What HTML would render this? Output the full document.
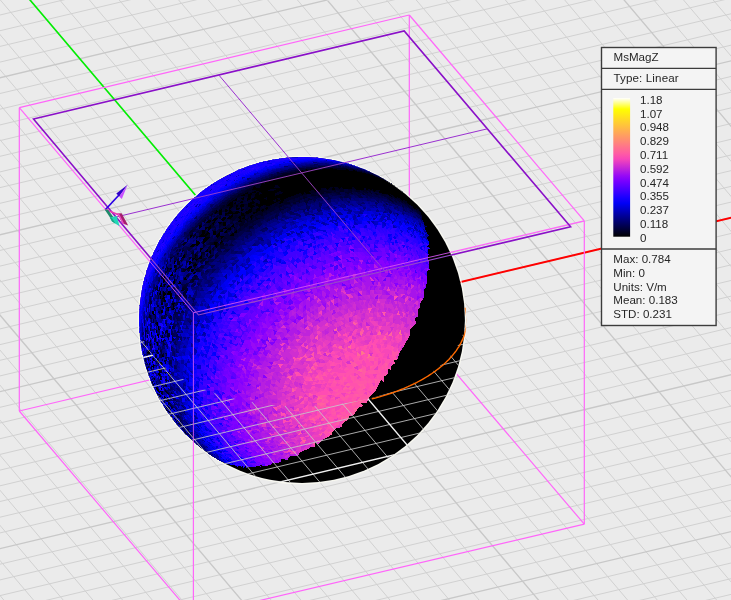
<!DOCTYPE html><html><head><meta charset="utf-8"><title>MsMagZ</title><style>html,body{margin:0;padding:0;background:#ebebeb}svg{display:block}text{font-family:"Liberation Sans",Arial,sans-serif;font-size:11.6px;fill:#262626}</style></head><body>
<svg width="731" height="600" viewBox="0 0 731 600">
<rect width="731" height="600" fill="#ebebeb"/>
<path d="M686.3 605.0L736.0 593.2M620.4 605.0L736.0 577.5M554.4 605.0L736.0 561.8M488.4 605.0L736.0 546.1M356.5 605.0L736.0 514.7M8.0 605.0L-5.0 589.6M290.5 605.0L736.0 499.0M37.7 605.0L-5.0 554.6M224.5 605.0L736.0 483.3M67.4 605.0L-5.0 519.5M158.6 605.0L736.0 467.6M97.1 605.0L-5.0 484.4M92.6 605.0L736.0 452.0M126.8 605.0L-5.0 449.4M26.6 605.0L736.0 436.3M156.5 605.0L-5.0 414.3M-5.0 596.8L736.0 420.6M186.2 605.0L-5.0 379.3M-5.0 581.1L736.0 404.9M215.9 605.0L-5.0 344.2M-5.0 565.4L736.0 389.2M275.3 605.0L-5.0 274.1M-5.0 534.1L736.0 357.8M305.1 605.0L-5.0 239.0M-5.0 518.4L736.0 342.1M334.8 605.0L-5.0 204.0M-5.0 502.7L736.0 326.4M364.5 605.0L-5.0 168.9M-5.0 487.0L736.0 310.7M394.2 605.0L-5.0 133.9M-5.0 471.3L736.0 295.0M423.9 605.0L-5.0 98.8M-5.0 455.6L736.0 279.3M453.6 605.0L-5.0 63.8M-5.0 439.9L736.0 263.7M483.3 605.0L-5.0 28.7M-5.0 424.2L736.0 248.0M513.0 605.0L-3.9 -5.0M-5.0 408.5L736.0 232.3M572.4 605.0L55.5 -5.0M-5.0 377.1L736.0 200.9M602.1 605.0L85.2 -5.0M-5.0 361.5L736.0 185.2M631.8 605.0L115.0 -5.0M-5.0 345.8L736.0 169.5M661.5 605.0L144.7 -5.0M-5.0 330.1L736.0 153.8M691.2 605.0L174.4 -5.0M-5.0 314.4L736.0 138.1M720.9 605.0L204.1 -5.0M-5.0 298.7L736.0 122.4M736.0 587.8L233.8 -5.0M-5.0 283.0L736.0 106.7M736.0 552.7L263.5 -5.0M-5.0 267.3L736.0 91.0M736.0 517.7L293.2 -5.0M-5.0 251.6L736.0 75.3M736.0 447.6L352.6 -5.0M-5.0 220.2L736.0 44.0M736.0 412.5L382.3 -5.0M-5.0 204.5L736.0 28.3M736.0 377.5L412.0 -5.0M-5.0 188.8L736.0 12.6M736.0 342.4L441.7 -5.0M-5.0 173.1L736.0 -3.1M736.0 307.3L471.4 -5.0M-5.0 157.5L678.0 -5.0M736.0 272.3L501.1 -5.0M-5.0 141.8L612.0 -5.0M736.0 237.2L530.8 -5.0M-5.0 126.1L546.0 -5.0M736.0 202.2L560.5 -5.0M-5.0 110.4L480.1 -5.0M736.0 167.1L590.2 -5.0M-5.0 94.7L414.1 -5.0M736.0 97.0L649.6 -5.0M-5.0 63.3L282.2 -5.0M736.0 61.9L679.3 -5.0M-5.0 47.6L216.2 -5.0M736.0 26.9L709.0 -5.0M-5.0 31.9L150.2 -5.0M-5.0 16.2L84.2 -5.0M-5.0 0.5L18.3 -5.0" stroke="#d1d1d1" stroke-width="1" fill="none"/>
<path d="M422.4 605.0L736.0 530.4M245.6 605.0L-5.0 309.2M-5.0 549.8L736.0 373.5M542.7 605.0L25.8 -5.0M-5.0 392.8L736.0 216.6M736.0 482.6L322.9 -5.0M-5.0 235.9L736.0 59.7M736.0 132.1L619.9 -5.0M-5.0 79.0L348.1 -5.0" stroke="#c8c8c8" stroke-width="1.35" fill="none"/>
<line x1="301.2" y1="320.0" x2="25.8" y2="-5.0" stroke="#00f000" stroke-width="1.6"/>
<line x1="301.2" y1="320.0" x2="736.0" y2="216.6" stroke="#ff0000" stroke-width="2"/>
<line x1="409.3" y1="15.0" x2="409.3" y2="318.3" stroke="#ff66fa" stroke-width="1.2" />
<line x1="19.3" y1="411.0" x2="409.3" y2="318.3" stroke="#ff66fa" stroke-width="1.2" />
<line x1="409.3" y1="318.3" x2="584.3" y2="524.2" stroke="#ff66fa" stroke-width="1.2" />
<circle cx="302.0" cy="320.0" r="163.7" fill="none" stroke="#f9f9f1" stroke-width="1.2"/>
<circle cx="302.0" cy="320.0" r="162.9" fill="#000"/>
<clipPath id="sc2"><circle cx="302.0" cy="320.0" r="164.2"/></clipPath>
<clipPath id="sc"><circle cx="302.0" cy="320.0" r="163.2"/></clipPath>
<g clip-path="url(#sc)"><g transform="scale(0.5)" shape-rendering="crispEdges">
<path fill="#00001f" d="M843 430l-6-5-2-4zM813 410l-2-4-6-3zM806 407l-1-4-7-4zM758 390l-7-1-2-5zM743 387l-1-5-8-1zM736 386l-2-5-7-1zM728 385l-1-5-8-1zM720 385l-1-6-8 0zM720 385l-8-1-1-5zM704 384l-1-6-8 0zM689 384l-2-6-8 1zM689 384l-9 0-1-5zM672 385l-1-6-8 1zM664 386l-8 1-1-6zM656 387l-1-6-8 1zM648 388l-1-6-8 2zM648 388l-8 2-1-6zM632 391l-9 2-1-6zM615 395l-8 3-1-7zM582 406l-8 3-1-6zM574 409l-1-6-8 3zM566 412l-8 4-1-7zM527 432l-1-7-8 5zM519 437l-7 4-2-7zM448 491l-2-8-6 6zM423 517l-2-8-6 6zM390 559l-4 7-3-8zM335 774l-5-9 1 8zM338 788l-6-8 2 7zM361 847l-7-7 4 6zM373 865l-8-7 5 5zM365 588l-4 7-4-5zM337 658l-2 8-4-5zM332 780l2 7-5-5zM337 801l-5-5 3 7zM351 834l3 6-5-5zM841 425l-6-4 2-2zM835 421l2-2-6-4zM830 417l-6-4 1-2zM818 409l-7-3 2-3zM811 406l2-3-6-3zM811 406l-6-3 2-3zM805 403l-7-4 2-2zM798 399l2-2-6-3zM798 399l-6-2 2-3zM792 397l-7-3 2-3zM785 394l2-3-7-3zM778 391l-7-2 3-3zM757 385l2-4-7-1zM757 385l-8-1 3-4zM749 384l-7-2 3-4zM742 382l-8-1 3-4zM711 379l-8-1 3-5zM687 378l-8 1 4-6zM679 379l-8 0 4-6zM671 379l4-6-8 1zM663 380l4-6-8 1zM663 380l-8 1 4-6zM647 382l3-6-8 1zM647 382l-8 2 3-7zM639 384l-8 1 3-6zM631 385l-9 2 4-7zM622 387l4-7-8 2zM614 389l-8 2 3-7zM606 391l-8 3 3-8zM598 394l3-8-8 3zM598 394l-8 3 3-8zM590 397l3-8-8 3zM590 397l-9 2 4-7zM581 399l4-7-8 3zM581 399l-8 4 4-8zM573 403l4-8-8 3zM573 403l-8 3 4-8zM557 409l4-8-8 3zM557 409l-8 4 4-9zM541 417l4-9-8 4zM541 417l-7 4 3-9zM534 421l-8 4 3-9zM526 425l-8 5 3-10zM518 430l3-10-8 5zM518 430l-8 4 3-9zM510 434l-7 5 3-10zM495 444l3-10-7 5zM488 449l3-10-7 5zM488 449l-7 5 3-10zM481 454l3-10-8 6zM440 489l-7 7 2-11zM427 502l2-11-6 6zM415 515l2-11-6 7zM409 522l-4-5-6 7zM398 536l-5 7-4-5zM370 580l-5-5-4 8zM561 401l-1-6-8 3zM553 404l-1-6-8 4zM537 412l-8 4-1-6zM529 416l-8 4-1-6zM513 425l-1-7-7 5zM491 439l-7 5-2-6zM429 491l-2-7-6 6zM394 531l-5 7-3-7zM328 676l-4-7-2 8zM512 418l-7 5-2-7zM497 428l-7 4-2-6zM490 432l-8 6-1-7zM409 503l-6 7-2-7zM347 598l-3-7-3 7zM319 700l-4-8 0 8zM319 708l-4-8-1 8zM318 724l0 7-4-8zM325 783l2 7-5-8zM343 829l-6-8 4 7zM381 879l5 5-7-7zM369 867l5 5-7-7zM374 872l5 5-7-7zM567 386l-9 3 1-7zM558 389l1-7-8 4zM558 389l-8 3 1-6zM534 400l1-7-8 4zM511 412l0-7-7 4zM496 421l0-7-7 5zM474 436l0-7-8 5zM474 436l-8 6 0-8zM466 442l0-8-7 5zM445 458l-6 6-1-7zM374 538l-5 7-1-8zM369 545l-1-8-5 7zM445 451l1-8-7 6zM419 475l0-8-7 6zM389 508l-1-8-5 7zM383 515l-5 7-1-8zM310 730l1 7-4-8zM346 838l4 6-7-8zM560 376l-3-4-8 3zM552 379l-8 4-3-5zM544 383l-3-5-8 4zM497 407l-8 5-3-5zM474 421l-7 6-3-5zM460 432l-4-5-7 6zM345 565l-4 8-4-4zM315 643l-2 8-4-4zM306 706l0 8-3-5zM332 818l-3-4 3 6zM557 372l-8 3 2-6zM525 386l-8 4 1-7zM509 394l2-7-8 4zM478 412l2-7-8 4zM442 439l1-8-7 5zM428 450l-6 6 1-8zM415 463l-6 6 1-9zM359 531l0-9-5 7zM341 561l-1-9-4 7zM303 686l-3-10 0 8zM317 788l3 7-6-9zM344 837l4 6-6-8zM338 829l-5-7 4 6zM518 383l-7 4 1-6zM511 387l-8 4 1-6zM495 395l1-6-7 4zM480 405l1-7-8 5zM472 409l-7 6 1-7zM359 522l-5 7-1-8zM520 377l1-6-8 4zM512 381l-8 4 1-6zM504 385l-8 4 1-6zM496 389l-7 4 0-6zM459 413l-8 5 1-6zM391 472l0-7-6 7zM391 472l-6 7 0-7zM368 500l-5 7 0-8zM317 590l-1-8-3 7zM326 811l-5-8 3 6zM466 401l3-7-8 5zM466 401l-7 5 2-7zM459 406l2-7-7 5zM459 406l-7 6 2-8zM452 412l-8 5 3-8zM444 417l-7 5 3-7zM430 428l2-8-6 6zM424 434l2-8-7 6zM410 446l2-8-7 6zM404 452l1-8-6 6zM385 472l2-9-6 7zM374 485l-6 7 1-9zM368 492l1-9-5 7zM358 506l-5 8 0-9zM339 536l-5 7 0-9zM316 582l-1-10-3 8zM301 629l-2 8-1-10zM311 784l3 6-4-8zM805 383l1 1-5-5zM800 379l1 0-6-4zM800 379l-6-4 1 0zM794 375l1 0-6-4zM794 375l-6-4 1 0zM788 371l1 0-6-4zM788 371l-6-4 1 0zM782 367l1 0-6-3zM775 364l2 0-6-4zM775 364l-6-3 2-1zM769 361l2-1-7-3zM762 358l2-1-6-3zM762 358l-6-3 2-1zM756 355l2-1-7-2zM756 355l-7-2 2-1zM749 353l2-1-7-3zM742 350l2-1-7-2zM735 348l2-1-7-2zM735 348l-8-2 3-1zM727 346l3-1-7-2zM727 346l-7-2 3-1zM720 344l3-1-8-2zM720 344l-7-1 2-2zM713 343l2-2-7-2zM705 342l3-3-8-1zM705 342l-7-1 2-3zM698 341l2-3-7-1zM690 340l3-3-8-1zM690 340l-8-1 3-3zM682 339l3-3-8 0zM682 339l-8 0 3-3zM674 339l3-3-7-1zM674 339l-7-1 3-3zM667 338l3-3-8 0zM659 338l3-3-8 0zM659 338l-8 1 3-4zM651 339l3-4-8 0zM643 339l3-4-8 1zM643 339l-9 1 4-4zM634 340l4-4-8 0zM634 340l-8 1 4-5zM626 341l4-5-9 1zM618 342l3-5-8 1zM610 343l3-5-8 2zM602 344l3-4-8 1zM602 344l-8 2 3-5zM594 346l3-5-8 2zM594 346l-9 2 4-5zM585 348l4-5-9 2zM585 348l-8 2 3-5zM577 350l3-5-8 2zM577 350l-8 3 3-6zM569 353l3-6-8 3zM569 353l-8 2 3-5zM561 355l3-5-8 2zM561 355l-8 3 3-6zM553 358l3-6-8 3zM553 358l-8 3 3-6zM545 361l3-6-8 3zM537 364l3-6-8 3zM529 368l3-7-8 4zM521 371l3-6-8 3zM521 371l-8 4 3-7zM513 375l3-7-8 4zM505 379l3-7-8 4zM505 379l-8 4 3-7zM497 383l3-7-8 4zM497 383l-8 4 3-7zM489 387l-8 5 3-7zM481 392l3-7-8 4zM481 392l-7 4 2-7z"/>
<path fill="#000029" d="M845 435l-2-5-6-5zM827 423l-2-5-6-4zM821 419l-2-5-6-4zM788 404l-7-2-2-6zM781 402l-2-6-7-2zM730 391l-2-6-8 0zM706 389l-2-5-7 0zM698 389l-1-5-8 0zM682 390l-2-6-8 1zM641 396l-1-6-8 1zM625 399l-8 2-2-6zM600 406l-1-6-8 3zM592 409l-1-6-9 3zM568 419l-8 3-2-6zM506 453l-7 5-2-7zM843 430l-2-5-6-4zM837 425l-2-4-5-4zM837 425l-6-4-1-4zM831 421l-6-3-1-5zM825 418l-1-5-6-4zM819 414l-1-5-7-3zM800 404l-2-5-6-2zM793 401l-1-4-7-3zM786 399l-1-5-7-3zM786 399l-7-3-1-5zM772 394l-1-5-7-2zM772 394l-7-2-1-5zM765 392l-1-5-7-2zM736 386l-8-1-1-5zM712 384l-1-5-8-1zM704 384l-7 0-2-6zM680 384l-1-5-8 0zM664 386l-1-6-8 1zM632 391l-1-6-9 2zM615 395l-1-6-8 2zM607 398l-8 2-1-6zM591 403l-1-6-9 2zM574 409l-8 3-1-6zM566 412l-1-6-8 3zM558 416l-1-7-8 4zM550 420l-1-7-8 4zM550 420l-8 4-1-7zM542 424l-1-7-7 4zM535 428l-1-7-8 4zM512 441l-8 5-1-7zM504 446l-1-7-8 5zM497 451l-2-7-7 5zM497 451l-8 5-1-7zM482 462l-1-8-7 6zM448 491l-7 6-1-8zM429 510l-6 7-2-8zM417 523l-6 7-2-8zM406 537l-2-8-6 7zM401 544l-3-8-5 7zM395 551l-5 8-2-9zM339 674l-4-8-1 7zM333 721l-1 8-5-9zM333 759l1 7-5-8zM341 802l-6-8 2 7zM346 816l-6-8 2 7zM369 859l-8-7 4 6zM391 886l5 5-8-7zM401 895l-8-6 5 5zM412 904l-8-6 5 4zM345 634l-5-5-2 8zM335 666l-4-5-2 7zM332 681l-4-5-2 8zM329 705l-1 8-5-5zM340 808l-5-5 2 7zM358 846l3 6-5-5zM383 879l-5-4 4 5zM734 381l-7-1 3-5zM655 381l-8 1 3-6zM549 413l4-9-8 4zM549 413l-8 4 4-9zM510 434l3-9-7 4zM474 460l-7 5 2-10zM453 477l-7 6 2-11zM415 515l-6 7-4-5zM374 573l-4 7-5-5zM529 416l-1-6-8 4zM506 429l-1-6-8 5zM506 429l-8 5-1-6zM498 434l-1-6-7 4zM476 450l-1-7-7 5zM462 461l-7 5-1-7zM442 478l-2-7-6 6zM435 485l-1-8-7 7zM423 497l-2-7-6 7zM411 511l-2-8-6 7zM323 738l0 8-4-7zM323 746l-4-7 0 7zM324 753l-5-7 1 8zM326 768l1 7-5-7zM340 816l3 7-6-7zM352 841l4 6-6-6zM520 414l-8 4-1-6zM512 418l-1-6-8 4zM482 438l-7 5-1-7zM468 448l-2-6-7 5zM461 454l-7 5-2-6zM427 484l-6 6-2-7zM397 517l-2-7-5 7zM392 524l-6 7-2-7zM381 538l-5 8-2-8zM334 630l-3-8-2 8zM327 790l-5-8 2 7zM354 847l4 6-6-8zM314 715l-4-8 0 8zM519 408l0-7-8 4zM503 416l-7 5 0-7zM481 431l-7 5 0-7zM413 490l-6 6-1-8zM519 401l-8 4 1-7zM511 405l1-7-7 4zM496 414l1-7-8 5zM496 414l-7 5 0-7zM474 429l-8 5 1-7zM445 451l-7 6 1-8zM432 463l0-8-7 6zM389 508l-6 7 0-8zM315 767l2 7-5-9zM319 781l-5-9 2 7zM319 781l2 6-5-8zM323 794l-5-8 3 7zM350 844l-7-8 4 6zM358 855l-6-8 4 6zM363 860l-7-7 5 5zM505 402l-4-4-8 4zM505 402l-8 5-4-5zM482 416l-4-4-7 5zM432 455l-4-5-6 6zM362 536l-3-5-5 7zM330 596l-3 8-4-4zM327 604l-4-4-2 7zM306 721l1 8-4-5zM509 394l-8 4 2-7zM493 402l-7 5 1-7zM486 407l-8 5 2-7zM471 417l1-8-7 6zM464 422l1-7-7 5zM456 427l2-7-8 5zM364 524l0-9-5 7zM354 538l0-9-5 8zM318 615l-2-9-2 7zM313 631l-2 8-2-10zM304 732l1 7-4-9zM305 739l1 7-4-9zM332 820l4 6-6-9zM338 829l4 6-5-7zM495 395l-8 5 2-7zM487 400l-7 5 1-7zM450 425l1-7-7 5zM436 436l1-7-7 6zM403 467l1-8-7 7zM403 467l-6 6 0-7zM397 473l-6 7 0-8zM359 522l-1-8-5 7zM311 621l-2-8-2 8zM504 385l1-6-8 4zM489 393l-8 5 0-6zM481 398l0-6-7 4zM473 403l-7 5 0-7zM451 418l1-6-8 5zM437 429l0-7-7 6zM321 582l-2-8-3 8zM303 637l-2-8-2 8zM297 676l-3-8 0 8zM304 758l2 7-4-8zM316 792l3 6-5-8zM474 396l-8 5 3-7zM444 417l3-8-7 6zM321 803l-5-8 4 6zM489 387l3-7-8 5zM474 396l2-7-7 5zM572 347l-8 3-2-4zM432 420l-6 6-3-4zM387 463l-3-4-6 7z"/>
<path fill="#000033" d="M350 680l-5-6-1 8zM613 409l4-8-8 3zM845 435l-6-5-2-5zM839 430l-2-5-6-4zM827 423l-6-4-2-5zM795 407l-2-6-7-2zM737 392l-1-6-8-1zM722 390l-2-5-8-1zM682 390l-8 1-2-6zM633 397l-1-6-9 2zM617 401l-8 3-2-6zM584 412l-2-6-8 3zM576 415l-8 4-2-7zM529 439l-2-7-8 5zM513 448l-7 5-2-7zM470 480l-2-7-7 6zM457 492l-3-7-6 6zM450 498l-2-7-7 6zM437 511l-6 6-2-7zM350 658l-4-8-3 8zM337 744l0 8-5-8zM352 823l-6-7 3 6zM825 418l-6-4-1-5zM819 414l-6-4-2-4zM813 410l-7-3-1-4zM806 407l-6-3-2-5zM800 404l-7-3-1-4zM779 396l-1-5-7-2zM779 396l-7-2-1-5zM765 392l-7-2-1-5zM758 390l-1-5-8-1zM751 389l-2-5-7-2zM743 387l-7-1-2-5zM728 385l-8 0-1-6zM712 384l-8 0-1-6zM697 384l-2-6-8 0zM697 384l-8 0-2-6zM680 384l-8 1-1-6zM672 385l-8 1-1-6zM656 387l-8 1-1-6zM640 390l-1-6-8 1zM640 390l-8 1-1-6zM623 393l-1-6-8 2zM623 393l-8 2-1-6zM607 398l-1-7-8 3zM599 400l-1-6-8 3zM599 400l-8 3-1-6zM591 403l-9 3-1-7zM582 406l-1-7-8 4zM558 416l-8 4-1-7zM542 424l-7 4-1-7zM535 428l-8 4-1-7zM527 432l-8 5-1-7zM519 437l-1-7-8 4zM512 441l-2-7-7 5zM504 446l-7 5-2-7zM489 456l-1-7-7 5zM489 456l-7 6-1-8zM482 462l-7 5-1-7zM475 467l-7 6-1-8zM468 473l-7 6-1-8zM461 479l-1-8-7 6zM461 479l-7 6-1-8zM411 530l-5 7-2-8zM386 566l-3-8-5 7zM376 581l-2-8-4 7zM376 581l-4 7-2-8zM372 588l-2-8-5 8zM372 588l-4 8-3-8zM364 604l-3 7-3-8zM341 666l-2 8-4-8zM334 705l-1 8-4-8zM332 744l1 7-6-8zM338 788l2 7-6-8zM358 841l-7-7 3 6zM361 847l4 6-7-7zM401 895l6 5-9-6zM407 900l5 4-8-6zM418 908l6 4-9-6zM327 736l-4-5 0 7zM361 852l4 6-5-5zM503 439l-8 5 3-10zM474 460l2-10-7 5zM467 465l-7 6 2-10zM460 471l-7 6 2-11zM453 477l2-11-7 6zM446 483l2-11-6 6zM374 573l-4-5-5 7zM498 434l-7 5-1-7zM484 444l-8 6-1-7zM469 455l-7 6-1-7zM442 478l-7 7-1-8zM423 497l-6 7-2-7zM399 524l-2-7-5 7zM379 553l-3-7-5 7zM326 684l-4-7-1 8zM324 700l-1 8-4-8zM475 443l-1-7-8 6zM461 454l-2-7-7 6zM421 490l-2-7-6 7zM337 622l-3-8-3 8zM367 864l4 5-6-7zM360 857l5 5-7-7zM496 421l-8 5 1-7zM488 426l1-7-8 5zM481 431l0-7-7 5zM466 442l-7 5 0-8zM439 464l-1-7-6 6zM439 464l-7 7 0-8zM395 510l0-9-6 7zM390 517l-1-9-6 7zM326 637l-2-8-3 8zM489 419l0-7-7 4zM459 439l-7 6 1-8zM452 445l1-8-7 6zM406 488l0-8-6 6zM378 522l-5 8-1-9zM329 613l-3 8-2-9zM313 676l-1 8-3-9zM311 692l-3-9-1 7zM497 407l-4-5-7 5zM321 620l-2 8-4-5zM306 714l0 7-3-4zM343 836l4 6-3-5zM493 402l2-7-8 5zM471 417l-7 5 1-7zM379 502l1-8-6 6zM374 509l-5 7 0-8zM369 516l-5 8 0-9zM309 647l-2-10-2 8zM305 739l-4-9 1 7zM310 768l2 7-4-10zM480 405l-8 4 1-6zM458 420l1-7-8 5zM443 431l-7 5 1-7zM430 442l-7 6 0-7zM423 448l0-7-6 6zM423 448l-7 6 1-7zM329 574l-2-7-3 7zM481 398l-8 5 1-7zM451 418l-7 5 0-6zM430 435l0-7-6 6zM423 441l1-7-7 6zM397 466l0-7-6 6zM296 707l1 8-3-9zM297 715l-3-9 0 8zM299 737l-3-9 1 8zM300 744l2 7-4-8zM452 412l2-8-7 5zM417 440l2-8-7 6zM379 478l-5 7 1-9zM363 499l-5 7 0-9zM334 543l-4 8 0-9zM326 558l0-9-4 8zM296 728l1 8-3-9zM806 384l-5-5-3-2zM801 379l-6-4-3-2zM795 375l-6-4-3-2zM789 371l-6-4-3-2zM783 367l-6-3-3-2zM777 364l-6-4-3-2zM771 360l-7-3-3-2zM764 357l-6-3-3-2zM758 354l-7-2-3-3zM751 352l-7-3-3-3zM744 349l-7-2-3-3zM737 347l-7-2-3-3zM730 345l-7-2-3-3zM723 343l-8-2-2-3zM715 341l-7-2-3-2zM708 339l-8-1-2-3zM700 338l-7-1-3-3zM693 337l-8-1-2-3zM685 336l-8 0-2-3zM677 336l-7-1-3-3zM670 335l-8 0-3-3zM662 335l-8 0-3-3zM654 335l-8 0-3-3zM646 335l-8 1-3-3zM638 336l-8 0-3-3zM630 336l-9 1-2-3zM621 337l-8 1-2-3zM613 338l-8 2-2-4zM605 340l-2-4-9 2zM605 340l-8 1-3-3zM597 341l-8 2-3-3zM589 343l-9 2-2-3zM580 345l-8 2-2-3zM564 350l-8 2-2-3zM556 352l-8 3-3-3zM548 355l-8 3-3-3zM540 358l-8 3-3-3zM532 361l-8 4-3-4zM524 365l-8 3-3-3zM516 368l-8 4-3-3zM508 372l-8 4-3-4zM500 376l-8 4-3-3zM492 380l-8 5-2-4zM484 385l-8 4-2-3zM476 389l-7 5-3-4zM469 394l-8 5-2-4zM461 399l-7 5-2-4zM454 404l-7 5-3-4zM447 409l-7 6-3-4zM440 415l-8 5-2-4zM426 426l-7 6-3-4zM419 432l-7 6-3-4zM412 438l-7 6-2-4zM405 444l-6 6-3-4zM399 450l-6 7-3-4zM393 457l-6 6-3-4zM387 463l-6 7-3-4zM348 512l-5 7-2-4zM334 534l-4 8 2-12zM326 549l-4 8 2-12zM304 604l-2 8-1-12zM292 667l-1 7-2-11zM291 682l0 8-3-12zM295 734l1 7-3-11zM296 741l2 7-4-11zM302 762l3 7-5-11zM310 782l3 6-5-10zM316 795l4 6-6-10zM683 333l-8 0 1-3z"/>
<path fill="#00003d" d="M557 432l-8 4 3-10zM510 459l-4-6-7 5zM503 464l-4-6-8 5zM468 492l-5-6-6 6zM461 498l-7 6-4-6zM347 788l-6-7 1 7zM348 795l2 7-6-7zM412 902l5 5-8-6zM843 438l2-3-6-5zM807 416l1-4-6-3zM786 408l2-4-7-2zM727 396l-8 0 3-6zM719 396l3-6-8 0zM695 395l3-6-8 1zM695 395l-8 1 3-6zM687 396l-8 0 3-6zM663 398l-9 2 4-7zM630 405l3-8-8 2zM581 421l3-9-8 3zM833 426l-2-5-6-3zM815 416l-2-6-7-3zM808 412l-2-5-6-3zM802 409l-2-5-7-3zM788 404l-2-5-7-3zM781 402l-7-3-2-5zM767 397l-2-5-7-2zM760 396l-2-6-7-1zM760 396l-8-2-1-5zM752 394l-1-5-8-2zM745 393l-2-6-7-1zM745 393l-8-1-1-6zM714 390l-2-6-8 0zM698 389l-8 1-1-6zM674 391l-2-6-8 1zM666 392l-2-6-8 1zM658 393l-2-6-8 1zM658 393l-8 1-2-6zM650 394l-2-6-8 2zM650 394l-9 2-1-6zM641 396l-8 1-1-6zM633 397l-8 2-2-6zM617 401l-2-6-8 3zM576 415l-2-6-8 3zM568 419l-2-7-8 4zM560 422l-2-6-8 4zM560 422l-8 4-2-6zM552 426l-2-6-8 4zM544 430l-2-6-7 4zM521 443l-2-6-7 4zM521 443l-8 5-1-7zM513 448l-1-7-8 5zM506 453l-2-7-7 5zM499 458l-2-7-8 5zM491 463l-2-7-7 6zM477 474l-2-7-7 6zM444 504l-3-7-6 6zM437 511l-2-8-6 7zM398 559l-3-8-5 8zM375 596l-3-8-4 8zM371 604l-3 7-4-7zM358 836l-7-7 3 6zM372 860l-7-7 4 6zM404 897l-8-6 5 4zM426 914l-8-6 6 4zM793 401l-7-2-1-5zM751 389l-8-2-1-5zM454 485l-1-8-7 6zM441 497l-6 6-2-7zM390 559l-2-9-5 8zM354 627l-3-9-3 8zM343 658l-3-8-3 8zM332 736l0 8-5-8zM344 809l-7-8 3 7zM365 853l-7-7 3 6zM412 904l6 4-9-6zM358 603l-4 8-4-5zM345 634l-3 8-4-5zM331 689l-5-5-1 8zM327 728l-4-5 0 8zM374 869l-6-5 5 5zM495 444l-7 5 3-10zM433 496l-6 6 2-11zM409 522l-5 7-5-5zM378 565l-4 8-4-5zM476 450l-7 5-1-7zM411 511l-6 6-2-7zM357 590l-4 8-3-7zM347 614l-4 7-3-7zM329 668l-4-7-1 8zM323 708l0 7-4-7zM335 803l-6-7 3 7zM373 869l-6-5 4 5zM434 477l-7 7-1-7zM332 638l-3-8-3 7zM340 823l-6-8 3 6zM376 874l5 5-7-7zM315 700l-1 8-4-9zM326 795l3 7-6-8zM329 802l2 7-5-8zM452 453l-7 5 0-7zM445 458l0-7-7 6zM426 477l-1-8-6 6zM426 477l-7 6 0-8zM419 483l0-8-7 7zM352 575l-4 8-2-9zM334 614l-2-9-3 8zM481 424l1-8-8 5zM368 537l-5 7-1-8zM312 684l-3-9-1 8zM474 421l-3-4-7 5zM467 427l-7 5-4-5zM388 500l-5 7-4-5zM323 799l3 7-4-5zM332 818l4 7-4-5zM352 847l4 6-4-5zM435 444l-7 6 2-8zM385 495l-6 7 1-8zM374 509l0-9-5 8zM327 592l-4 8-1-10zM309 761l-5-10 2 7zM325 808l4 6-6-9zM380 494l-6 6 0-7zM319 598l-2-8-3 8zM302 661l-2-8-1 8zM417 447l-7 6 0-7zM410 453l0-7-6 6zM404 459l-7 7 0-7zM368 500l0-8-5 7zM353 521l0-7-5 7zM339 544l0-8-5 7zM297 715l0 7-3-8zM437 422l3-7-8 5zM353 514l-5 7 0-9zM295 660l-1 8-2-9zM801 379l-3-2-6-4zM795 375l-3-2-6-4zM789 371l-3-2-6-4zM783 367l-3-2-6-3zM777 364l-3-2-6-4zM771 360l-3-2-7-3zM764 357l-3-2-6-3zM758 354l-3-2-7-3zM751 352l-3-3-7-3zM744 349l-3-3-7-2zM737 347l-3-3-7-2zM730 345l-3-3-7-2zM723 343l-3-3-7-2zM715 341l-2-3-8-1zM708 339l-3-2-7-2zM700 338l-2-3-8-1zM693 337l-3-3-7-1zM685 336l-2-3-8 0zM677 336l-2-3-8-1zM670 335l-3-3-8 0zM662 335l-3-3-8 0zM654 335l-3-3-8 0zM646 335l-3-3-8 1zM638 336l-3-3-8 0zM630 336l-3-3-8 1zM621 337l-2-3-8 1zM613 338l-2-3-8 1zM597 341l-3-3-8 2zM589 343l-3-3-8 2zM580 345l-2-3-8 2zM572 347l-2-3-8 2zM564 350l-2-4-8 3zM556 352l-2-3-9 3zM548 355l-3-3-8 3zM540 358l-3-3-8 3zM532 361l-3-3-8 3zM524 365l-3-4-8 4zM516 368l-3-3-8 4zM508 372l-3-3-8 3zM500 376l-3-4-8 5zM492 380l-3-3-7 4zM484 385l-2-4-8 5zM476 389l-2-3-8 4zM469 394l-3-4-7 5zM461 399l-2-4-7 5zM454 404l-2-4-8 5zM447 409l-3-4-7 6zM440 415l-3-4-7 5zM432 420l-2-4-7 6zM426 426l-3-4-7 6zM412 438l-3-4-6 6zM405 444l-2-4-7 6zM399 450l-3-4-6 7zM393 457l-3-4-6 6zM381 470l-3-4-6 7zM369 483l-2-4-6 7zM358 497l-5 8-2-4zM343 519l-4 8 2-12zM334 534l2-11-4 7zM322 557l2-12-4 8zM312 580l1-11-3 7zM306 596l1-12-3 8zM302 612l-1-12-2 8zM292 659l0 8-2-12zM292 667l-2-12-1 8zM293 720l-4-12 1 8zM294 727l-4-11 1 7zM295 734l-4-11 2 7zM296 741l-3-11 1 7zM298 748l-4-11 2 7zM302 762l-4-11 2 7zM755 352l0-1-7-3zM562 346l-8 3 1-5zM296 744l2 7-3-7z"/>
<path fill="#000047" d="M778 411l-7-2 1-5zM702 401l1-6-8 0zM390 597l-4 8-2-10zM360 667l-3-10-3 8zM358 675l-4-10-2 8zM384 868l-9-8 4 6zM557 432l3-10-8 4zM549 436l-8 4 3-10zM541 440l-8 4 3-10zM525 449l-7 5 3-11zM518 454l3-11-8 5zM454 504l-4-6-6 6zM430 530l-6 7-4-6zM418 544l-4-6-5 7zM402 565l-5 7-4-6zM369 625l-5-6-3 8zM344 720l-1 8-5-7zM343 728l-5-7-1 8zM365 842l-7-6 3 6zM826 426l-7-4 2-3zM793 410l-7-2 2-4zM742 398l3-5-8-1zM734 397l3-5-7-1zM703 395l-8 0 3-6zM581 421l-8 3 3-9zM565 428l3-9-8 3zM839 430l-6-4-2-5zM833 426l-6-3-2-5zM821 419l-6-3-2-6zM815 416l-7-4-2-5zM808 412l-6-3-2-5zM802 409l-7-2-2-6zM795 407l-7-3-2-5zM774 399l-2-5-7-2zM774 399l-7-2-2-5zM767 397l-7-1-2-6zM752 394l-7-1-2-6zM737 392l-7-1-2-6zM730 391l-8-1-2-5zM722 390l-8 0-2-6zM714 390l-8-1-2-5zM706 389l-8 0-1-5zM690 390l-1-6-9 0zM690 390l-8 0-2-6zM674 391l-8 1-2-6zM625 399l-2-6-8 2zM609 404l-2-6-8 2zM609 404l-9 2-1-6zM600 406l-8 3-1-6zM592 409l-8 3-2-6zM584 412l-8 3-2-6zM552 426l-8 4-2-6zM544 430l-8 4-1-6zM536 434l-1-6-8 4zM536 434l-7 5-2-7zM529 439l-8 4-2-6zM499 458l-8 5-2-7zM491 463l-7 6-2-7zM484 469l-2-7-7 5zM484 469l-7 5-2-7zM477 474l-7 6-2-7zM470 480l-7 6-2-7zM457 492l-7 6-2-7zM431 517l-6 7-2-7zM425 524l-2-7-6 6zM420 531l-3-8-6 7zM393 566l-5 8-2-8zM388 574l-2-8-5 7zM361 627l-4-8-3 8zM358 635l-3 8-4-8zM352 650l-2 8-4-8zM347 666l-2 8-4-8zM355 829l3 7-7-7zM361 842l4 6-7-7zM365 848l3 6-7-7zM368 854l4 6-7-7zM389 882l5 5-8-6zM415 906l5 4-8-6zM441 497l-1-8-7 7zM429 510l-2-8-6 7zM423 517l-6 6-2-8zM406 537l-5 7-3-8zM354 627l-3 8-3-9zM333 713l0 8-5-8zM377 870l-7-7 4 6zM396 891l5 4-8-6zM354 611l-4-5-3 8zM342 815l3 6-5-5zM481 454l-7 6 2-10zM427 502l-6 7 2-12zM455 466l-7 6-1-7zM448 472l-1-7-7 6zM405 517l-6 7-2-7zM399 524l-5 7-2-7zM384 546l-5 7-3-7zM370 568l-5 7-3-7zM350 606l-3-8-4 8zM347 614l-4-8-3 8zM335 645l-2 8-4-8zM340 816l-6-6 3 6zM343 823l-6-7 3 7zM364 859l4 5-6-6zM475 443l-7 5-2-6zM468 448l-7 6-2-7zM454 459l-7 6-2-7zM434 477l-2-6-6 6zM427 484l-1-7-7 6zM358 575l-4 8-2-8zM358 853l4 5-6-7zM348 840l-6-8 4 6zM459 447l0-8-7 6zM419 483l-6 7-1-8zM359 552l-5 7-1-9zM354 559l-4 8-1-9zM329 807l-6-8 3 7zM460 432l-7 5-4-4zM439 449l-7 6-4-5zM432 455l-7 6-3-5zM367 528l-5 8-3-5zM353 550l-4 8-4-5zM308 744l1 7-3-5zM352 847l-4-4 4 5zM449 433l1-8-7 6zM435 444l1-8-6 6zM415 463l1-9-6 6zM336 826l4 6-6-9zM450 425l-7 6 1-8zM416 454l1-7-7 6zM374 500l0-7-6 7zM374 500l-5 8-1-8zM364 515l-1-8-5 7zM336 559l-3 8-2-8zM305 645l-2-8-2 8zM306 758l2 7-4-7zM296 692l-3-9 0 8zM308 772l-4-8 2 7zM316 792l-5-8 3 6zM329 817l4 5-5-7zM430 428l-6 6 2-8zM397 459l-6 6 2-8zM391 465l2-8-6 6zM343 528l-4 8 0-9zM296 652l-1 8-2-9zM300 750l2 7-4-9zM381 470l-6 6-3-3zM364 490l-3-4-5 8zM364 490l-6 7-2-3zM319 565l1-12-4 8zM315 572l-3 8 1-11zM312 580l-3 8 1-12zM310 782l-5-10 3 6zM748 349l-7-3 1-1zM698 335l-8-1 1-2zM690 334l-7-1 1-2zM545 352l2-5-9 3zM505 369l1-6-8 4zM466 390l-7 5 1-6zM430 416l-7 6 1-6zM416 428l-7 6 1-6zM403 440l0-6-6 6zM390 453l-6 6 0-6z"/>
<path fill="#000052" d="M641 416l4-8-8 2zM616 423l5-9-9 3zM537 459l-4-6-8 4zM843 442l0-4-5-4zM838 438l0-4-6-4zM813 424l-7-3 1-5zM757 406l0-6-7-1zM686 402l1-6-8 0zM662 405l1-7-9 2zM645 408l-8 2 1-7zM621 414l-9 3 1-8zM588 425l-8 4 1-8zM556 440l1-8-8 4zM503 472l0-8-7 5zM496 478l0-9-8 5zM431 539l-6 7-1-9zM354 691l-4-11-2 8zM355 804l-7-9 2 7zM361 825l3 6-8-8zM380 863l-9-9 4 6zM422 909l-10-7 5 5zM433 918l6 3-10-6zM549 436l3-10-8 4zM541 440l3-10-8 4zM533 444l3-10-7 5zM461 498l-4-6-7 6zM362 641l-4-6-3 8zM359 649l-4-6-3 7zM352 673l-5-7-2 8zM347 696l-5-6-1 8zM342 743l-5-7 0 8zM343 751l-6-7 0 8zM362 836l-7-7 3 7zM397 888l-8-6 5 5zM402 893l-8-6 5 5zM412 902l-8-5 5 4zM423 911l6 4-9-5zM429 915l6 4-9-5zM826 426l1-3-6-4zM813 419l2-3-7-4zM800 413l2-4-7-2zM800 413l-7-3 2-3zM793 410l2-3-7-3zM779 406l2-4-7-3zM779 406l-7-2 2-5zM765 402l2-5-7-1zM757 400l3-4-8-2zM750 399l2-5-7-1zM711 395l3-5-8-1zM687 396l3-6-8 0zM679 396l3-6-8 1zM663 398l3-6-8 1zM638 403l3-7-8 1zM621 407l4-8-8 2zM597 415l3-9-8 3zM573 424l3-9-8 4zM573 424l-8 4 3-9zM666 392l-8 1-2-6zM463 486l-6 6-3-7zM444 504l-7 7-2-8zM409 545l-6 7-2-8zM375 596l-4 8-3-8zM358 635l-4-8-3 8zM352 650l-4-7-2 7zM347 666l-4-8-2 8zM339 713l-1 8-5-8zM338 759l1 7-6-7zM344 795l-6-7 2 7zM365 848l-7-7 3 6zM368 854l-7-7 4 6zM372 860l4 6-7-7zM380 871l-7-6 4 5zM380 871l4 6-7-7zM399 892l5 5-8-6zM409 901l-8-6 6 5zM409 901l6 5-8-6zM420 910l-8-6 6 4zM357 619l-3-8-3 7zM351 635l-3 8-3-9zM346 650l-4-8-2 8zM339 674l-1 8-4-9zM344 809l2 7-6-8zM346 816l3 6-7-7zM369 859l4 6-8-7zM361 595l-4-5-4 8zM327 720l-4-5 0 8zM370 863l-6-4 4 5zM467 465l2-10-7 6zM460 471l2-10-7 5zM324 700l-4-7-1 7zM323 715l-4-7-1 8zM324 753l1 7-5-6zM364 859l-6-6 4 5zM382 880l5 4-6-5zM415 497l-2-7-6 6zM392 524l-2-7-6 7zM371 553l-4 7-2-7zM358 575l-2-7-4 7zM354 583l-4 8-2-8zM334 630l-2 8-3-8zM318 716l0 8-4-9zM321 761l1 7-5-8zM322 768l2 7-5-8zM329 796l3 7-6-8zM314 708l0 7-4-8zM352 845l-6-7 4 6zM459 447l-7 6 0-8zM337 606l-3 8-2-9zM438 457l1-8-7 6zM395 501l-1-8-6 7zM378 522l-1-8-5 7zM313 676l-3-9-1 8zM338 826l4 6-6-7zM446 443l-4-4-7 5zM337 581l-4-5-3 8zM324 612l-3 8-3-5zM307 690l-1 8-3-4zM306 706l-3-5 0 8zM336 825l-4-5 4 6zM449 433l-7 6 1-8zM442 439l-7 5 1-8zM403 475l-6 7 0-9zM327 592l-2-10-3 8zM305 670l-1 8-3-10zM303 694l0 7-4-9zM303 724l-4-9 1 7zM312 775l2 6-4-9zM397 473l0-7-6 6zM320 799l-4-7 3 6zM437 429l-7 6 0-7zM374 493l-6 7 0-8zM358 514l0-8-5 8zM305 629l-2 8-2-8zM298 668l-3-8-1 8zM296 684l-2-8-1 7zM296 684l0 8-3-9zM293 683l-2-9 0 8zM296 728l-3-8 1 7zM298 743l-3-9 1 7zM419 432l-3-4-7 6zM375 476l-3-3-5 6zM348 512l-2-4-5 7zM293 651l-1 8-1-12zM291 690l0 7-3-11zM307 776l-4-11 2 7zM780 365l-6-3 0-1zM774 362l-6-4 0-1zM768 358l-7-3 0-1zM761 355l-6-3 0-1zM755 352l-7-3 0-1zM741 346l-7-2 1-1zM734 344l-7-2 1-2zM727 342l-7-2 1-2zM720 340l-7-2 0-2zM713 338l-8-1 1-2zM705 337l-7-2 1-2zM675 333l-8-1 1-2zM667 332l-8 0 1-3zM659 332l-8 0 1-3zM643 332l-8 1 1-4zM635 333l-8 0 1-3zM627 333l-8 1 1-3zM611 335l-8 1 1-3zM603 336l-9 2 2-4zM594 338l-8 2 1-4zM586 340l-8 2 1-4zM578 342l1-4-8 2zM578 342l-8 2 1-4zM570 344l-8 2 1-4zM554 349l-9 3 2-5zM545 352l-8 3 1-5zM537 355l-8 3 1-5zM529 358l-8 3 1-5zM521 361l-8 4 1-5zM513 365l-8 4 1-6zM505 369l-8 3 1-5zM497 372l-8 5 1-6zM489 377l-7 4 1-5zM482 381l-8 5 1-6zM474 386l-8 4 1-5zM459 395l-7 5 0-6zM452 400l-8 5 1-5zM444 405l-7 6 1-6zM437 411l-7 5 1-6zM423 422l-7 6 1-6zM409 434l-6 6 0-6zM403 440l-7 6 1-6zM396 446l-6 7 0-7zM384 459l-6 7 0-7zM378 466l-6 7 0-7zM361 486l-5 8 0-7zM356 494l-5 7-1-7zM346 508l-5 7-1-7zM310 576l-3 8-1-7zM307 584l-3 8-1-7zM304 592l-3 8-1-7zM301 600l-2 8-1-7zM299 608l-2 8-1-8zM291 647l-1 8-2-7zM289 708l1 8-2-7zM290 716l1 7-2-7zM305 772l3 6-3-7zM636 329l-8 1-2-3zM372 466l-5 7 2-10zM286 671l-2-10 0 8z"/>
<path fill="#00005c" d="M753 411l4-5-8-2zM698 408l4-7-8 1zM608 425l4-8-8 2zM592 431l-4-6-8 4zM529 464l-4-7-7 5zM478 501l-6 6-4-6zM452 526l-3-6-7 6zM390 612l-4-7-4 7zM365 674l-2 8-5-7zM354 737l-5-7-1 7zM374 845l3 6-7-7zM799 418l-6-3 0-5zM741 403l-7-1 0-5zM604 419l-8 3 1-7zM580 429l1-8-8 3zM572 432l-8 4 1-8zM489 483l-1-9-7 6zM468 501l-7 6 0-9zM442 526l0-9-7 6zM358 675l-2 8-4-10zM351 706l-1 8-5-10zM376 857l4 6-9-9zM392 880l-9-8 4 5zM406 895l-9-7 5 5zM427 913l-10-6 6 4zM525 449l4-10-8 4zM518 454l-5-6-7 5zM518 454l-8 5-4-6zM510 459l-7 5-4-6zM503 464l-7 5-5-6zM496 469l-5-6-7 6zM488 474l-4-5-7 5zM481 480l-4-6-7 6zM474 486l-4-6-7 6zM468 492l-7 6-4-6zM454 504l-6 6-4-6zM448 510l-4-6-7 7zM424 537l-6 7-4-6zM418 544l-5 7-4-6zM384 595l-4-6-5 7zM376 610l-4 8-4-7zM365 633l-3 8-4-6zM354 665l-4-7-3 8zM354 665l-2 8-5-7zM343 758l0 8-5-7zM344 773l1 7-5-6zM345 780l-5-6 1 7zM348 795l-6-7 2 7zM350 802l-6-7 2 7zM352 809l-6-7 2 7zM354 816l2 7-6-7zM371 854l-6-6 3 6zM371 854l4 6-7-6zM375 860l4 6-7-6zM379 866l-7-6 4 6zM383 872l4 5-7-6zM397 888l5 5-8-6zM843 438l-5-4 1-4zM838 434l1-4-6-4zM832 430l1-4-6-3zM819 422l2-3-6-3zM813 419l-6-3 1-4zM786 408l-7-2 2-4zM772 404l2-5-7-2zM772 404l-7-2 2-5zM765 402l-8-2 3-4zM757 400l-7-1 2-5zM750 399l-8-1 3-5zM742 398l-8-1 3-5zM734 397l-7-1 3-5zM727 396l3-5-8-1zM719 396l-8-1 3-5zM703 395l3-6-8 0zM679 396l-8 1 3-6zM671 397l3-6-8 1zM671 397l-8 1 3-6zM654 400l4-7-8 1zM646 401l4-7-9 2zM646 401l-8 2 3-7zM630 405l-9 2 4-8zM621 407l-8 2 4-8zM605 412l4-8-9 2zM605 412l-8 3 3-9zM589 418l3-9-8 3zM463 486l-2-7-7 6zM364 619l-3-8-4 8zM341 781l-6-7 1 7zM394 887l5 5-8-6zM454 485l-6 6-2-8zM351 635l-3-9-3 8zM336 781l2 7-6-8zM381 876l-7-7 4 5zM386 881l5 5-8-7zM334 673l-5-5-1 8zM330 697l-5-5-1 8zM331 773l-5-5 1 7zM332 780l-5-5 2 7zM440 489l2-11-7 7zM393 543l-4-5-5 8zM353 598l-3-7-3 7zM323 738l-5-7 1 8zM356 847l-6-6 4 6zM368 864l5 5-6-5zM447 465l-7 6-1-7zM421 490l-6 7-2-7zM409 503l-2-7-6 7zM332 803l-6-8 3 7zM343 829l4 6-6-7zM314 723l0 8-4-9zM314 731l1 7-5-8zM356 851l-6-7 4 5zM401 503l-6 7 0-9zM374 538l-1-8-5 7zM320 661l-1 8-4-9zM438 457l-6 6 0-8zM425 469l0-8-6 6zM425 469l-6 6 0-8zM324 629l-3-9-2 8zM315 767l-4-9 1 7zM354 849l4 6-6-8zM439 449l-4-5-7 6zM394 493l-3-4-6 6zM388 500l-3-5-6 7zM383 507l-6 7-3-5zM377 514l-3-5-5 7zM353 550l-3-4-5 7zM337 581l-4 8-3-5zM343 836l-3-4 4 5zM350 546l-1-9-4 7zM311 639l-2-10-2 8zM303 686l0 8-3-10zM303 701l-4-9 0 7zM306 746l1 7-4-9zM314 781l-4-9 2 7zM340 832l-6-9 4 6zM391 480l-6 7 0-8zM385 487l-5 7 0-8zM380 494l0-8-6 7zM316 606l-2 7-2-7zM304 653l-3-8-1 8zM314 786l3 6-4-7zM317 792l-4-7 3 7zM430 435l-7 6 1-7zM397 466l-6 6 0-7zM339 544l-4 7-1-8zM424 434l-7 6 2-8zM417 440l-7 6 2-8zM379 478l2-8-6 6zM358 506l0-9-5 8zM353 514l0-9-5 7zM311 784l-4-8 3 6zM314 790l-4-8 3 6zM296 635l-1 8-2-12zM313 788l3 7-5-11zM774 362l0-1-6-4zM768 358l0-1-7-3zM741 346l1-1-7-2zM734 344l1-1-7-3zM727 342l1-2-7-2zM720 340l1-2-8-2zM713 338l0-2-7-1zM698 335l1-2-8-1zM690 334l1-2-7-1zM683 333l1-2-8-1zM675 333l1-3-8 0zM667 332l1-2-8-1zM659 332l1-3-8 0zM651 332l1-3-8 0zM651 332l-8 0 1-3zM643 332l1-3-8 0zM635 333l1-4-8 1zM627 333l1-3-8 1zM619 334l1-3-8 1zM619 334l-8 1 1-3zM611 335l1-3-8 1zM603 336l1-3-8 1zM594 338l2-4-9 2zM586 340l1-4-8 2zM570 344l1-4-8 2zM562 346l1-4-8 2zM554 349l1-5-8 3zM537 355l1-5-8 3zM529 358l1-5-8 3zM513 365l1-5-8 3zM497 372l1-5-8 4zM489 377l1-6-7 5zM482 381l1-5-8 4zM466 390l1-5-7 4zM459 395l1-6-8 5zM452 400l0-6-7 6zM444 405l1-5-7 5zM437 411l1-6-7 5zM430 416l1-6-7 6zM423 422l1-6-7 6zM416 428l1-6-7 6zM409 434l1-6-7 6zM396 446l1-6-7 6zM384 459l0-6-6 6zM378 466l0-7-6 7zM372 473l0-7-5 7zM351 501l-1-7-5 7zM336 523l0-7-5 7zM328 538l-1-7-4 7zM310 576l-1-7-3 8zM307 584l-1-7-3 8zM301 600l-1-7-2 8zM295 624l-1-8-2 8zM291 647l-2-7-1 8zM289 670l-2-7-1 8zM288 678l-2-7 0 8zM288 678l0 8-2-7zM288 693l-2-7 0 8zM289 708l-2-7 1 8zM293 730l-3-7 1 7zM294 737l-3-7 2 7zM294 737l2 7-3-7zM305 772l-3-7 3 6zM721 338l-3-2-7-2zM547 347l-9 3-2-3zM424 416l4-9-8 6z"/>
<path fill="#000066" d="M366 810l2 7-7-6zM370 824l2 6-6-5zM438 919l-7-4 5 4zM849 455l4-2-6-4zM725 414l-3-6-8 0zM644 422l-8 2-3-6zM603 435l-3-7-8 3zM384 641l-3 8-5-6zM829 437l3-3-7-4zM790 420l3-5-7-2zM768 414l3-5-7-2zM730 408l-8 0 4-6zM600 428l-8 3-4-6zM576 438l-4-6-8 4zM537 459l-8 5-4-7zM472 507l-4-6-7 6zM429 553l-6 7-4-7zM423 560l-5 7-4-7zM358 706l-5-8-2 8zM355 775l1 7-6-7zM366 825l-7-7 2 7zM374 845l-7-7 3 6zM384 863l4 6-8-6zM415 901l-9-6 5 5zM819 427l-6-3 0-5zM813 424l0-5-6-3zM786 413l-8-2 1-5zM771 409l1-5-7-2zM764 407l1-5-8-2zM741 403l1-5-8-1zM710 401l1-6-8 0zM694 402l1-7-8 1zM678 403l1-7-8 1zM662 405l-9 1 1-6zM596 422l1-7-8 3zM596 422l-8 3 1-7zM510 467l0-8-7 5zM425 546l-1-9-6 7zM414 560l-1-9-6 7zM404 575l-2-10-5 7zM395 590l-2-10-5 7zM351 706l-4-10-2 8zM349 722l-5-10 0 8zM348 760l1 8-6-10zM351 783l-7-10 1 7zM357 811l-7-9 2 7zM364 831l-8-8 3 6zM384 868l4 6-9-8zM565 428l-8 4 3-10zM533 444l-8 5 4-10zM496 469l-8 5-4-5zM488 474l-7 6-4-6zM474 486l-6 6-5-6zM442 517l-5-6-6 6zM413 551l-4-6-6 7zM413 551l-6 7-4-6zM407 558l-5 7-4-6zM402 565l-4-6-5 7zM397 572l-4 8-5-6zM380 602l-4 8-5-6zM365 633l-4-6-3 8zM347 696l-2 8-4-6zM343 728l0 7-6-6zM343 751l0 7-6-6zM354 816l-6-7 2 7zM362 836l3 6-7-6zM365 842l3 6-7-6zM368 848l-7-6 4 6zM402 893l5 5-8-6zM417 907l6 4-8-5zM838 434l-6-4 1-4zM832 430l-6-4 1-3zM819 422l-6-3 2-3zM807 416l-7-3 2-4zM711 395l-8 0 3-6zM654 400l-8 1 4-7zM638 403l-8 2 3-8zM613 409l-8 3 4-8zM597 415l-8 3 3-9zM589 418l-8 3 3-9zM425 524l-5 7-3-8zM420 531l-6 7-3-8zM414 538l-3-8-5 7zM409 545l-3-8-5 7zM393 566l-3-7-4 7zM342 788l-6-7 2 7zM342 788l2 7-6-7zM346 802l-6-7 1 7zM350 816l-6-7 2 7zM384 877l-7-7 4 6zM404 897l5 4-8-6zM435 503l-2-7-6 6zM417 523l-2-8-6 7zM336 690l-1 8-4-9zM381 876l5 5-8-7zM391 886l-8-7 5 5zM418 908l-9-6 6 4zM361 595l-3 8-5-5zM337 801l3 7-5-5zM365 858l5 5-6-4zM383 879l5 5-6-4zM415 515l-4-4-6 6zM398 536l-4-5-5 7zM429 491l-6 6-2-7zM379 553l-5 7-3-7zM374 560l-4 8-3-8zM370 568l-3-8-5 8zM340 629l-2 8-4-7zM335 645l-3-7-3 7zM415 497l-6 6-2-7zM322 768l-5-8 2 7zM340 823l3 6-6-8zM432 471l-6 6-1-8zM413 490l-1-8-6 6zM407 496l-1-8-6 7zM348 583l-2-9-4 8zM310 707l-4-9 0 8zM312 745l1 7-5-8zM317 774l-5-9 2 7zM425 461l-3-5-7 7zM425 461l-6 6-4-4zM412 473l-6 7-3-5zM406 480l-3-5-6 7zM383 507l-4-5-5 7zM315 643l-4-4-2 8zM311 659l-3-4-2 7zM307 736l1 8-3-5zM337 569l-1-10-3 8zM329 814l3 6-6-9zM410 460l0-7-6 6zM325 582l-1-8-3 8zM316 606l-2-8-2 8zM300 684l-1 8-3-8zM306 758l-4-7 2 7zM410 453l-6 6 0-7zM404 459l0-7-7 7zM385 479l0-7-6 6zM358 514l-5 7 0-7zM344 536l-1-8-4 8zM335 551l-4 8-1-8zM317 590l-3 8-1-9zM296 699l0 8-3-8zM363 499l1-9-6 7zM313 589l-3 8-1-9zM310 597l-2 8-2-9zM301 629l-1-10-2 8zM299 637l-1-10-2 8zM304 764l-4-9 2 7zM306 771l3 6-4-8zM353 505l-2-4-5 7zM319 565l-4 7 1-11zM307 776l3 6-5-10zM761 355l0-1-6-3zM748 349l0-1-6-3zM705 337l1-2-7-2zM521 361l1-5-8 4zM474 386l1-6-8 5zM390 453l0-7-6 7zM320 553l-4 8-1-7zM345 501l2-10-5 8zM291 730l-2-9 1 8zM577 335l-1-4-8 2zM394 437l-1-5-6 7z"/>
<path fill="#000070" d="M795 433l4-5-7-2zM780 428l5-4-7-2zM630 433l-3-6-8 2zM528 482l-3-7-8 5zM513 493l-3-8-7 6zM368 817l2 7-7-6zM381 850l-7-5 3 6zM408 890l-8-4 5 5zM427 910l-7-4 5 4zM806 431l4-3-7-3zM785 424l-7-2-3-7zM677 416l-9 2-2-7zM660 419l-2-7-9 2zM644 422l-3-6-8 2zM619 429l-3-6-8 2zM619 429l-8 3-3-7zM489 502l-7 6-4-7zM482 508l-4-7-6 6zM428 567l-6 7-4-7zM422 574l-4-7-5 7zM384 641l-5-6-3 8zM361 781l-6-6 1 7zM797 422l2-4-6-3zM775 415l-7-1 3-5zM584 435l-8 3-4-6zM568 442l-4-6-8 4zM492 490l-3-7-7 6zM440 539l-4-6-5 6zM418 567l-4-7-5 8zM408 582l-4-7-5 7zM394 604l-4 8-4-7zM379 635l-3 8-5-7zM367 666l-4-7-3 8zM355 729l-1 8-5-7zM360 804l-7-7 2 7zM361 811l-6-7 2 7zM405 891l5 5-9-6zM425 910l6 5-9-6zM431 915l5 4-9-6zM843 442l-5-4 0-4zM838 438l-6-4 0-4zM832 434l0-4-6-4zM825 430l-6-3 0-5zM819 427l0-5-6-3zM806 421l1-5-7-3zM793 415l0-5-7-2zM749 404l1-5-8-1zM749 404l-8-1 1-5zM734 402l0-5-7-1zM726 402l1-6-8 0zM718 401l1-5-8-1zM718 401l-8 0 1-6zM694 402l-8 0 1-6zM670 404l1-7-8 1zM645 408l1-7-8 2zM637 410l1-7-8 2zM629 412l1-7-9 2zM621 414l0-7-8 2zM612 417l1-8-8 3zM612 417l-8 2 1-7zM604 419l1-7-8 3zM572 432l1-8-8 4zM564 436l1-8-8 4zM548 444l1-8-8 4zM540 448l1-8-8 4zM533 453l0-9-8 5zM525 457l0-8-7 5zM510 467l-7 5 0-8zM503 472l-7 6 0-9zM482 489l-1-9-7 6zM482 489l-7 6-1-9zM468 501l0-9-7 6zM461 507l0-9-7 6zM449 520l-1-10-6 7zM431 539l-1-9-6 7zM425 546l-6 7-1-9zM399 582l-2-10-4 8zM395 590l-5 7-2-10zM390 597l-2-10-4 8zM382 612l-2-10-4 8zM378 620l-2-10-4 8zM375 628l-3-10-3 7zM375 628l-4 8-2-11zM368 643l-3-10-3 8zM363 659l-4-10-2 8zM356 683l-4-10-2 7zM350 714l-5-10-1 8zM348 753l-6-10 1 8zM349 768l1 7-7-9zM367 838l-8-9 3 7zM370 844l-8-8 3 6zM388 874l-9-8 4 6zM401 890l-9-7 5 5zM401 890l5 5-9-7zM406 895l5 5-9-7zM411 900l-9-7 5 5zM422 909l5 4-10-6zM433 918l-10-7 6 4zM481 480l-7 6-4-6zM448 510l-6 7-5-6zM435 523l-4-6-6 7zM393 580l-5-6-4 7zM359 649l-2 8-5-7zM344 773l-5-7 1 8zM359 829l-7-6 3 6zM383 872l-7-6 4 5zM407 898l-8-6 5 5zM423 911l-8-5 5 4zM450 498l-6 6-3-7zM388 574l-4 7-3-8zM355 643l-4-8-3 8zM420 910l6 4-8-6zM381 573l-3-8-4 8zM333 751l0 8-5-8zM351 829l-6-8 3 7zM354 835l-6-7 3 6zM358 841l3 6-7-7zM386 881l-8-7 5 5zM365 588l-4-5-4 7zM331 689l-1 8-5-5zM340 808l2 7-5-5zM421 509l-6 6 2-11zM378 565l-4-5-4 8zM389 538l-3-7-5 7zM387 884l6 5-7-5zM403 510l-6 7-2-7zM386 531l-2-7-5 7zM337 622l-3 8-3-8zM324 669l-2 8-3-8zM320 693l-4-8-1 7zM321 761l-5-8 1 7zM317 760l2 7-5-8zM331 809l3 6-5-8zM344 834l-6-8 4 6zM356 568l-4 7-2-8zM329 630l-3 7-2-8zM319 669l-4-9-1 8zM315 660l-2-9-2 8zM350 844l4 5-7-7zM349 558l-4-5-4 8zM309 675l-4-5-1 8zM321 793l-4-5 3 7zM347 842l5 5-4-4zM397 482l0-9-6 7zM313 631l-2-10-2 8zM306 662l-2-9-2 8zM391 480l0-8-6 7zM345 544l-1-8-5 8zM333 567l-2-8-4 8zM322 590l-3 8-2-8zM314 613l-3 8-2-8zM309 629l-2 8-2-8zM307 637l-2-8-2 8zM299 707l0 8-3-8zM302 737l-4-8 1 8zM312 779l-4-7 2 7zM317 792l3 7-4-7zM380 486l-6 7 0-8zM374 493l0-8-6 7zM314 598l-1-9-3 8zM306 765l-4-8 2 7zM313 785l-4-8 2 7zM410 446l-6 6 1-8zM397 459l2-9-6 7zM339 536l0-9-5 7zM334 543l0-9-4 8zM293 683l0 8-2-9zM294 714l-3-9 1 7zM295 721l-3-9 1 8zM298 743l2 7-4-9zM369 483l-5 7-3-4zM302 612l-2 7-1-11zM295 643l-2-12-1 8zM291 697l-3-11 0 7zM292 712l-3-11 0 7zM367 479l-6 7 0-6zM361 486l0-6-5 7zM346 508l-1-7-5 7zM296 744l-3-7 2 7zM298 751l-3-7 2 7zM774 361l-6-4-3-1zM768 357l-7-3-2-2zM755 351l-7-3-2-2zM742 345l-7-2-3-2zM735 343l-7-3-3-2zM728 340l-7-2-3-2zM713 336l-7-1-2-3zM706 335l-7-2-3-2zM699 333l-8-1-2-2zM691 332l-7-1-3-2zM684 331l-8-1-3-2zM660 329l-8 0-2-3zM620 331l-8 1-3-3zM587 336l-8 2-2-3zM571 340l-8 2-3-3zM514 360l-8 3-3-3zM506 363l-8 4-3-3zM498 367l-8 4-2-3zM490 371l-7 5-3-3zM417 422l-7 6 4-9zM403 434l-6 6 3-9zM397 440l-7 6 4-9zM390 446l-6 7 3-9zM384 453l-6 6 3-9zM378 459l-6 7 3-9zM361 480l-5 7 2-10zM356 487l2-10-6 7zM345 501l-5 7 2-9zM331 523l-4 8 1-10zM323 538l-4 8 1-10zM319 546l-4 8 1-10zM309 569l-3 8 0-10zM300 593l-2 8-1-10zM294 616l-2 8-1-10zM290 632l-1 8-1-10zM286 679l0 7-2-9zM287 701l1 8-3-10zM295 744l2 7-3-8zM759 352l-2 0-6-4zM704 332l-1-1-8-2zM634 327l-1-3-8 1zM428 407l-8 6 0-5zM503 356l-8 4-2-3z"/>
<path fill="#00007a" d="M412 892l5 5-9-7zM773 427l-7-2 4-5zM728 421l5-6-8-1zM472 527l-6 7-4-8zM426 582l-5 7-4-8zM363 795l-6-5 1 7zM843 451l-5-4 3-2zM778 422l-8-2-2-6zM756 417l-3-6-8-1zM709 414l-3-6-8 0zM693 415l-3-7-8 1zM685 415l-3-6-8 1zM595 438l-8 3-3-6zM547 461l-7 5-3-7zM525 475l-8 5-3-7zM469 520l-4-7-6 7zM456 533l-4-7-6 7zM456 533l-6 6-4-6zM428 567l-5-7-5 7zM378 657l-5-7-3 8zM372 673l-2 8-5-7zM361 781l1 7-6-6zM810 428l-7-3 3-4zM722 408l-8 0 4-7zM690 408l4-6-8 0zM674 410l4-7-8 1zM666 411l-8 1 4-7zM641 416l-8 2 4-8zM633 418l4-8-8 2zM633 418l-8 2 4-8zM625 420l4-8-8 2zM560 446l-4-6-8 4zM514 473l-4-6-7 5zM499 484l-3-6-7 5zM485 495l-7 6-3-6zM440 539l-5 7-4-7zM435 546l-4-7-6 7zM373 650l-5-7-3 8zM355 721l0 8-6-7zM849 446l-6-4 0-4zM832 434l-7-4 1-4zM825 430l1-4-7-4zM806 421l-7-3 1-5zM799 418l1-5-7-3zM793 415l-7-2 0-5zM786 413l0-5-7-2zM778 411l1-5-7-2zM764 407l-7-1 0-6zM734 402l-8 0 1-6zM726 402l-8-1 1-5zM710 401l-8 0 1-6zM702 401l-8 1 1-7zM686 402l-8 1 1-7zM678 403l-8 1 1-7zM670 404l-8 1 1-7zM653 406l1-6-8 1zM653 406l-8 2 1-7zM637 410l-8 2 1-7zM588 425l1-7-8 3zM556 440l-8 4 1-8zM548 444l-8 4 1-8zM525 457l-7 5 0-8zM518 462l0-8-8 5zM518 462l-8 5 0-8zM496 478l-7 5-1-9zM489 483l-7 6-1-9zM475 495l-1-9-6 6zM475 495l-7 6 0-9zM461 507l-6 6-1-9zM455 513l-1-9-6 6zM449 520l-7 6 0-9zM442 526l-6 7-1-10zM436 533l-1-10-5 7zM436 533l-5 6-1-9zM414 560l-5 8-2-10zM386 605l-2-10-4 7zM365 651l-3-10-3 8zM356 683l-2 8-4-11zM348 737l-5-9 0 7zM348 745l0 8-6-10zM352 790l-7-10 2 8zM353 797l2 7-7-9zM357 811l2 7-7-9zM364 831l3 7-8-9zM370 844l3 7-8-9zM373 851l3 6-8-9zM380 863l4 5-9-8zM388 874l4 6-9-8zM416 905l-9-7 5 4zM427 913l6 5-10-7zM442 517l-7 6-4-6zM430 530l-5-6-5 7zM369 625l-4 8-4-6zM350 680l-2 8-4-6zM417 907l-8-6 6 5zM429 915l-9-5 6 4zM431 517l-2-7-6 7zM344 682l-2 8-4-8zM348 809l2 7-6-7zM435 503l-6 7-2-8zM336 690l-4-9-1 8zM351 829l3 6-6-7zM329 705l-5-5-1 8zM378 874l5 5-5-4zM388 884l5 5-6-5zM383 558l-5 7-4-5zM370 580l-5 8-4-5zM417 504l-6 7-2-8zM326 684l-1 8-4-7zM323 708l-4-8 0 8zM352 841l-5-6 3 6zM376 546l-2-8-5 7zM320 693l-1 7-4-8zM347 835l-6-7 3 6zM316 753l-4-8 1 7zM319 767l-5-8 1 8zM356 568l-2-9-4 8zM334 614l-3 8-2-9zM322 653l-2 8-3-9zM406 488l-6 7 0-9zM400 495l0-9-6 7zM332 605l-3 8-2-9zM394 493l-6 7-3-5zM377 514l-5 7-3-5zM372 521l-3-5-5 8zM362 536l-4 7-4-5zM321 620l-3-5-3 8zM379 502l-5 7 0-9zM364 524l-5 7 0-9zM359 531l-5 7 0-9zM345 553l-4 8-1-9zM311 639l-2 8-2-10zM329 814l-6-9 3 6zM340 832l4 5-6-8zM344 837l-6-8 4 6zM385 487l0-8-5 7zM369 508l-1-8-5 7zM369 508l-5 7-1-8zM329 574l-4 8-1-8zM319 598l-3 8-2-8zM385 479l-5 7-1-8zM363 507l-5 7 0-8zM348 529l0-8-5 7zM321 582l-4 8-1-8zM310 779l-4-8 3 6zM319 798l-5-8 3 7zM391 465l-6 7 2-9zM368 492l-5 7 1-9zM348 521l-5 7 0-9zM303 621l-2 8-1-10zM293 699l1 7-3-9zM294 706l0 8-3-9zM309 777l-4-8 2 7zM321 803l3 6-4-8zM375 476l-6 7-2-4zM358 497l-2-3-5 7zM293 720l1 7-4-11zM305 769l-5-11 3 7zM351 501l-5 7-1-7zM341 515l-1-7-4 8zM316 561l-1-7-3 7zM299 608l-1-7-2 7zM780 365l-6-4-3-2zM768 357l-3-1-6-4zM761 354l-6-3-3-2zM748 348l-6-3-3-2zM735 343l-3-2-7-3zM728 340l-3-2-7-2zM721 338l-8-2-2-2zM676 330l-8 0-2-3zM668 330l-2-3-8 0zM668 330l-8-1-2-2zM652 329l-8 0-2-3zM644 329l-2-3-8 1zM644 329l-8 0-2-2zM636 329l-2-2-8 0zM628 330l-2-3-8 1zM628 330l-8 1-2-3zM612 332l-8 1-3-3zM604 333l-8 1-3-3zM596 334l-9 2-2-3zM579 338l-8 2-3-3zM571 340l-3-3-8 2zM563 342l-8 2-3-3zM555 344l-8 3-3-3zM547 347l-3-3-8 3zM538 350l-8 3-2-3zM530 353l-2-3-9 3zM530 353l-8 3-3-3zM522 356l-3-3-8 4zM522 356l-8 4-3-3zM483 376l-3-3-8 4zM483 376l-8 4-3-3zM475 380l-8 5 5-8zM467 385l-7 4 4-7zM460 389l4-7-7 5zM460 389l-8 5 5-7zM452 394l5-7-8 4zM452 394l-7 6 4-9zM445 400l-7 5 4-8zM438 405l4-8-7 5zM438 405l-7 5 4-8zM431 410l4-8-7 5zM431 410l-7 6 4-9zM424 416l-7 6 3-9zM410 428l4-9-7 6zM410 428l-7 6 4-9zM403 434l4-9-7 6zM390 446l4-9-7 7zM384 453l3-9-6 6zM367 473l-6 7 2-10zM356 487l-6 7 2-10zM331 523l2-10-5 8zM315 554l1-10-4 8zM315 554l-3 7 0-9zM303 585l-3 8 0-10zM289 640l-1-10-1 8zM287 663l-2-9-1 7zM287 663l-1 8-2-10zM286 671l0 8-2-10zM286 686l-2-9 0 7zM286 686l0 8-2-10zM288 709l-3-10 1 8zM290 723l-3-9 2 7zM290 723l1 7-2-9zM297 751l-3-8 2 6zM297 751l3 7-4-9zM689 330l-8-1-1-2zM480 373l-8 4 0-4zM332 508l-5 8 3-11zM311 546l2-11-4 8z"/>
<path fill="#000085" d="M628 442l2-9-8 3zM454 558l-1-11-5 7zM437 579l-1-12-5 7zM401 639l-3 7-6-4zM398 646l-4 8-6-5zM372 771l-6-5 0 8zM372 778l-6-4 1 7zM851 467l1-5-6-4zM702 428l2-7-8 0zM661 433l2-7-8 1zM396 869l4 6-9-7zM427 907l5 4-10-6zM448 924l-10-5 6 4zM840 454l3-3-5-4zM758 424l-7-1 5-6zM704 421l-8 0-3-6zM638 431l-2-7-9 3zM574 456l-8 3-3-6zM520 487l-3-7-7 5zM520 487l-7 6-3-8zM506 498l-7 6-3-8zM479 521l-7 6-3-7zM380 673l-3 8-5-8zM373 696l-5-8-2 8zM373 817l-7-7 2 7zM364 803l2 7-6-6zM391 868l-7-5 4 6zM408 890l4 6-7-5zM778 422l-3-7-7-1zM748 416l-3-6-7-1zM701 414l-3-6-8 0zM693 415l-8 0-3-6zM660 419l-8 2-3-7zM652 421l-3-7-8 2zM627 427l-2-7-9 3zM595 438l-3-7-8 4zM555 457l-8 4-3-7zM475 514l-6 6-4-7zM360 773l-6-6 1 8zM847 449l-6-4 2-3zM823 434l2-4-6-3zM817 431l2-4-6-3zM817 431l-7-3 3-4zM803 425l3-4-7-3zM803 425l-6-3 2-4zM797 422l-7-2 3-5zM783 417l-8-2 3-4zM738 409l3-6-7-1zM722 408l4-6-8-1zM714 408l4-7-8 0zM698 408l-8 0 4-6zM682 409l4-7-8 1zM658 412l4-7-9 1zM600 428l4-9-8 3zM584 435l-4-6-8 3zM544 454l-4-6-7 5zM521 468l-3-6-8 5zM514 473l-7 6-4-7zM507 479l-4-7-7 6zM507 479l-8 5-3-6zM485 495l-3-6-7 6zM459 520l-7 6-3-6zM446 533l-4-7-6 7zM446 533l-6 6-4-6zM423 560l-4-7-5 7zM413 574l-4-6-5 7zM376 643l-5-7-3 7zM365 674l-5-7-2 8zM361 690l-5-7-2 8zM361 690l-2 8-5-7zM356 782l1 8-6-7zM366 825l2 6-7-6zM377 851l-7-7 3 7zM380 857l-7-6 3 6zM388 869l-8-6 4 5zM392 875l-8-7 4 6zM396 880l-8-6 4 6zM405 891l-8-6 4 5zM425 910l-9-5 6 4zM436 919l-9-6 6 5zM771 409l-7-2 1-5zM757 406l-8-2 1-5zM629 412l-8 2 0-7zM580 429l-8 3 1-8zM564 436l-8 4 1-8zM540 448l-7 5 0-9zM533 453l-8 4 0-8zM455 513l-6 7-1-10zM419 553l-1-9-5 7zM409 568l-2-10-5 7zM409 568l-5 7-2-10zM404 575l-5 7-2-10zM386 605l-4 7-2-10zM378 620l-3 8-3-10zM354 691l-1 7-5-10zM353 698l-2 8-4-10zM350 775l1 8-7-10zM435 523l-5 7-5-6zM384 595l-4 7-5-6zM362 641l-3 8-4-6zM343 758l-6-6 1 7zM345 780l2 8-6-7zM401 544l-6 7-2-8zM333 713l-4-8-1 8zM332 736l-5-8 0 8zM358 603l-5-5-3 8zM330 697l-1 8-5-5zM327 736l0 7-4-5zM348 828l3 6-5-5zM388 884l-6-4 5 4zM404 529l-5-5-5 7zM365 575l-3-7-4 7zM340 629l-3-7-3 8zM329 782l1 7-5-6zM360 853l-6-6 4 6zM360 853l4 6-6-6zM376 546l-5 7-2-8zM371 553l-2-8-4 8zM367 560l-5 8-2-8zM343 606l-2-8-4 8zM321 685l-4-8-1 8zM318 731l-4-8 0 8zM358 853l-6-8 4 6zM367 864l-7-7 5 5zM356 851l4 6-6-8zM401 503l-1-8-5 6zM348 583l-4 8-2-9zM383 515l0-8-6 7zM335 597l-2-8-3 7zM326 621l-2-9-3 8zM332 814l-6-8 3 6zM342 832l-6-7 4 5zM406 480l-6 6-3-4zM313 651l-4-4-1 8zM336 825l4 5-4-4zM391 489l0-9-6 7zM307 753l2 8-5-10zM310 768l-4-10 2 7zM336 826l-6-9 4 6zM336 559l-1-8-4 8zM301 668l-1 8-2-8zM303 637l-2 8-2-8zM299 661l-1 7-3-8zM329 817l-5-8 4 6zM303 621l-1-9-2 7zM294 706l-3-9 0 8zM304 764l2 7-4-9zM314 790l3 7-4-9zM353 505l-5 7-2-4zM330 542l-4 7 2-11zM326 549l2-11-4 7zM315 572l1-11-3 8zM304 604l0-12-3 8zM291 674l0 8-2-12zM372 473l-5 6 0-6zM774 361l-3-2-6-3zM761 354l-2-2-7-3zM755 351l-3-2-6-3zM748 348l-2-2-7-3zM742 345l-3-2-7-2zM713 336l-2-2-7-2zM706 335l-2-3-8-1zM699 333l-3-2-7-1zM691 332l-2-2-8-1zM684 331l-3-2-8-1zM676 330l-3-2-7-1zM660 329l-2-2-8-1zM652 329l-2-3-8 0zM620 331l-2-3-9 1zM612 332l-3-3-8 1zM604 333l-3-3-8 1zM596 334l-3-3-8 2zM587 336l-2-3-8 2zM579 338l-2-3-9 2zM563 342l-3-3-8 2zM555 344l-3-3-8 3zM538 350l-2-3-8 3zM514 360l-3-3-8 3zM506 363l-3-3-8 4zM498 367l-3-3-7 4zM490 371l-2-3-8 5zM467 385l5-8-8 5zM445 400l4-9-7 6zM417 422l3-9-6 6zM397 440l3-9-6 6zM378 459l3-9-6 7zM372 466l3-9-6 6zM367 473l2-10-6 7zM361 480l2-10-5 7zM350 494l2-10-5 7zM350 494l-5 7 2-10zM340 508l-4 8 1-10zM312 561l-3 8 0-10zM300 593l0-10-3 8zM290 632l-1-10-1 8zM287 655l-1-9-1 8zM309 559l-3 8-1-5zM303 575l-1-6-3 8zM319 531l-4 7 2-10zM299 577l1-10-3 7zM708 331l-7-2-2-1z"/>
<path fill="#00008f" d="M721 434l-8 0 5-7zM421 617l-4-9-4 8zM407 879l4 6-7-4zM833 455l1-5-6-3zM820 449l-6-3 1-5zM726 427l-8 0 2-6zM686 429l-9 1 2-7zM677 430l2-7-8 1zM788 430l4-4-7-2zM773 427l5-5-8-2zM647 429l-3-7-8 2zM647 429l-9 2-2-7zM590 448l-3-7-8 4zM574 456l-3-7-8 4zM492 509l-3-7-7 6zM407 611l-4-8-4 8zM368 789l1 7-7-8zM383 844l3 7-8-8zM363 795l1 8-6-6zM438 919l6 4-8-4zM838 447l3-2-6-4zM733 415l-8-1-3-6zM603 435l-8 3-3-7zM579 445l-8 4-3-7zM517 480l-7 5-3-6zM489 502l-4-7-7 6zM360 743l-6-6 0 8zM360 773l1 8-6-6zM362 788l1 7-6-5zM847 449l2-3-6-4zM835 441l3-3-6-4zM835 441l-6-4 3-3zM829 437l-6-3 2-4zM823 434l-6-3 2-4zM810 428l3-4-7-3zM775 415l3-4-7-2zM768 414l-7-2 3-5zM761 412l3-5-7-1zM745 410l4-6-8-1zM730 408l4-6-8 0zM706 408l-8 0 4-7zM690 408l-8 1 4-7zM674 410l-8 1 4-7zM666 411l4-7-8 1zM649 414l4-8-8 2zM608 425l-8 3 4-9zM576 438l-8 4-4-6zM560 446l-8 4-4-6zM552 450l-4-6-8 4zM552 450l-8 4-4-6zM529 464l-8 4-3-6zM521 468l-7 5-4-6zM478 501l-3-6-7 6zM472 507l-7 6-4-6zM465 513l-4-6-6 6zM465 513l-6 7-4-7zM459 520l-4-7-6 7zM452 526l-6 7-4-7zM403 589l-4-7-4 8zM403 589l-4 7-4-6zM399 596l-4-6-5 7zM394 604l-4-7-4 8zM390 612l-4 7-4-7zM386 619l-3 8-5-7zM383 627l-4 8-4-7zM376 643l-3 7-5-7zM370 658l-5-7-2 8zM363 682l-2 8-5-7zM359 698l-1 8-5-8zM356 713l-5-7-1 8zM355 721l-5-7-1 8zM355 729l-6-7 0 8zM354 737l0 8-6-8zM354 752l0 8-6-7zM354 767l1 8-6-7zM356 782l-6-7 1 8zM357 790l1 7-6-7zM358 797l2 7-7-7zM363 818l3 7-7-7zM368 831l-7-6 3 6zM371 838l3 7-7-7zM380 857l4 6-8-6zM392 875l4 5-8-6zM410 896l-9-6 5 5zM420 906l-9-6 5 5zM420 906l5 4-9-5zM431 915l-9-6 5 4zM442 923l-9-5 6 3zM399 582l-4 8-2-10zM359 818l2 7-7-9zM392 880l5 5-10-8zM411 900l5 5-9-7zM416 905l6 4-10-7zM424 537l-4-6-6 7zM407 558l-4-6-5 7zM344 712l0 8-5-7zM344 720l-5-7-1 8zM407 898l5 4-8-5zM350 658l-3 8-4-8zM338 721l-1 8-4-8zM411 530l-2-8-5 7zM340 650l-3 8-4-5zM332 681l-1 8-5-5zM351 834l-5-5 3 6zM365 575l-4 8-3-8zM361 583l-3-8-4 8zM357 590l-3-7-4 8zM325 692l-1 8-4-7zM330 789l-5-6 2 7zM346 829l-6-6 3 6zM356 847l4 6-6-6zM382 880l-6-6 5 5zM393 889l-7-5 6 4zM403 510l-2-7-6 7zM354 583l-2-8-4 8zM341 828l3 6-6-8zM360 560l-1-8-5 7zM341 598l-4 8-2-9zM326 637l-2 8-3-8zM324 645l-3-8-2 8zM400 495l-5 6-1-8zM395 501l-6 7-1-8zM359 552l-1-9-5 7zM324 629l-3 8-2-9zM317 774l2 7-5-9zM363 860l4 5-6-7zM367 528l-3-4-5 7zM358 543l-4-5-4 8zM309 751l2 7-4-5zM333 576l0-9-4 7zM304 732l-4-10 1 8zM314 781l3 7-5-9zM348 843l-6-8 4 5zM325 582l-3 8-1-8zM380 486l-1-8-5 7zM322 804l-5-7 4 6zM348 521l0-9-5 7zM343 528l0-9-4 8zM326 558l-3 8-1-9zM302 757l2 7-4-9zM317 797l-4-9 3 7zM339 527l-5 7 2-11zM293 651l-1-12-1 8zM367 479l0-6-6 7zM324 545l-1-7-4 8zM297 616l-1-8-2 8zM288 686l0 7-2-7zM291 723l-2-7 1 7zM293 730l1 7-3-7zM312 561l0-9-3 7zM309 569l0-10-3 8zM289 640l-1 8-1-10zM287 701l-2-9 0 7zM284 684l1 8-2-6zM577 335l-9 2 0-4zM568 337l-8 2 0-3zM560 339l-8 2 0-3zM528 350l-9 3 0-4zM387 444l-6 6-1-5zM593 328l-2-2-8 1zM284 694l0 7-2-10zM591 326l-1-3-8 2z"/>
<path fill="#000099" d="M748 442l5-6-8-1zM610 464l-8 4-3-7zM410 655l-5-8-3 8zM386 795l-7-8 1 8zM396 837l-8-7 2 7zM854 475l3-4-6-4zM854 475l-5-4 2-4zM843 467l-6-4 2-4zM830 460l3-5-6-3zM656 442l5-9-8 2zM640 446l-3-7-9 3zM615 454l-3-7-8 3zM583 468l-8 4-3-7zM544 490l-3-8-7 5zM544 490l-7 5-3-8zM396 671l-5-9-3 8zM388 694l-5-9-2 8zM378 757l0 8-6-9zM381 802l-7-9 1 8zM396 850l3 7-9-8zM446 917l5 4-6-2zM526 492l2-10-8 5zM478 532l-6 7 0-12zM465 545l1-11-6 6zM432 586l-1-12-5 8zM374 725l-1 8-6-5zM373 740l-1 8-6-5zM387 842l3 7-7-5zM434 910l5 5-7-4zM439 915l-7-4 5 5zM456 928l-8-4 6 4zM779 434l1-6-7-1zM764 431l-7-1 1-6zM702 428l-8 0 2-7zM412 892l-9-7 5 5zM417 897l-9-7 4 6zM437 916l-10-6 6 5zM728 421l-8 0-3-7zM696 421l-8 1-3-7zM558 464l-8 4-3-7zM528 482l-8 5-3-7zM492 509l-7 6-3-7zM472 527l-3-7-7 6zM466 534l-6 6-4-7zM442 560l-6 7-3-7zM421 589l-4-8-5 7zM412 604l-4-8-5 7zM368 720l-1 8-5-8zM367 728l-5-8-1 8zM366 774l1 7-7-8zM373 817l2 7-7-7zM386 851l3 6-8-7zM372 830l-6-5 2 6zM403 885l-7-5 4 6zM433 915l5 4-7-4zM785 424l-2-7-8-2zM748 416l-8-1-2-6zM733 415l-3-7-8 0zM717 414l-3-6-8 0zM717 414l-8 0-3-6zM571 449l-3-7-8 4zM540 466l-3-7-8 5zM532 470l-3-6-8 4zM503 491l-7 5-4-6zM444 546l-4-7-5 7zM433 560l-4-7-6 7zM408 596l-5-7-4 7zM399 611l-5-7-4 8zM387 634l-4-7-4 8zM381 649l-5-6-3 7zM361 728l-6-7 0 8zM360 735l-5-6-1 8zM360 758l-6-6 0 8zM841 445l2-3-5-4zM841 445l-6-4 3-3zM790 420l-7-3 3-4zM783 417l3-4-8-2zM761 412l-8-1 4-5zM753 411l-8-1 4-6zM745 410l-7-1 3-6zM738 409l-8-1 4-6zM714 408l-8 0 4-7zM706 408l4-7-8 0zM682 409l-8 1 4-7zM658 412l-9 2 4-8zM649 414l-8 2 4-8zM625 420l-9 3 5-9zM600 428l-4-6-8 3zM592 431l-8 4-4-6zM568 442l-8 4-4-6zM499 484l-7 6-3-7zM435 546l-6 7-4-7zM429 553l-4-7-6 7zM359 698l-5-7-1 7zM360 804l1 7-6-7zM368 831l3 7-7-7zM396 880l4 6-8-6zM400 886l-8-6 5 5zM400 886l5 5-8-6zM410 896l5 5-9-6zM415 901l5 5-9-6zM436 919l6 4-9-5zM419 553l-5 7-1-9zM350 775l-7-9 1 7zM352 790l1 7-6-9zM373 851l-8-9 3 6zM397 885l4 5-9-7zM393 580l-5 7-4-6zM372 618l-4-7-4 8zM348 688l-1 8-5-6zM344 712l-5-7 0 8zM350 802l2 7-6-7zM359 829l3 7-7-7zM392 883l5 5-8-6zM414 538l-5 7-3-8zM398 559l-5 7-3-7zM368 611l-4-7-3 7zM355 643l-3 7-4-7zM341 781l1 7-6-7zM384 877l5 5-8-6zM389 882l-8-6 5 5zM415 906l-8-6 5 4zM386 566l-5 7-3-8zM334 705l-4-8-1 8zM365 853l4 6-8-7zM407 900l-9-6 6 4zM340 650l-5-5-2 8zM335 666l-1 7-5-5zM327 743l1 8-5-5zM348 828l-5-5 3 6zM365 858l-5-5 4 6zM404 529l-6 7-4-5zM388 550l-4-4-5 7zM350 591l-2-8-4 8zM371 869l-6-7 4 5zM315 746l1 7-4-8zM317 760l-4-8 1 7zM369 545l-4 8-2-9zM360 560l-4 8-2-9zM342 582l-1-9-4 8zM321 637l-2-9-2 8zM314 759l-5-8 2 7zM326 801l-5-8 2 6zM326 801l3 6-6-8zM358 543l-5 7-3-4zM311 659l-1 8-4-5zM307 690l-4-4 0 8zM326 806l-4-5 3 7zM340 830l-4-4 4 6zM337 569l-4 7 0-9zM330 584l-1-10-4 8zM323 600l-2 7-2-9zM303 701l0 8-4-10zM304 653l-2 8-2-8zM299 715l1 7-3-7zM323 805l-4-7 3 6zM363 507l0-8-5 7zM348 529l-4 7-1-8zM305 629l-2-8-2 8zM300 653l-2-9-2 8zM297 722l-3-8 1 7zM308 772l2 7-4-8zM374 485l1-9-6 7zM330 551l0-9-4 7zM310 597l-1-9-3 8zM297 736l-3-9 1 7zM302 757l-4-9 2 7zM339 527l2-12-5 8zM298 627l-1-11-2 8zM298 627l-2 8-1-11zM300 755l-4-11 2 7zM356 494l0-7-6 7zM332 530l-1-7-4 8zM316 561l-3 8-1-8zM292 639l-1 8-2-7zM288 693l1 8-3-7zM306 577l0-10-3 8zM294 616l-1-9-2 7zM300 758l2 7-3-9zM295 599l-2 8-1-6zM289 622l-1 8-2-6zM288 630l-1 8-2-6zM286 646l-1 8-2-6zM285 654l-1 7-1-5zM284 661l0 8-1-6zM284 669l0 8-2-6zM284 677l0 7-1-5zM294 743l2 6-2-5zM296 749l3 7-2-6zM771 359l-6-3-2-1zM759 352l-7-3-1-1zM746 346l-7-3-1-1zM739 343l-7-2-1-1zM725 338l-7-2-1-1zM711 334l-7-2-1-1zM704 332l-8-1-1-2zM696 331l-7-1-1-2zM681 329l-8-1 0-2zM673 328l-7-1-1-2zM642 326l-8 1-1-3zM634 327l-8 0-1-2zM626 327l-8 1-1-3zM618 328l-9 1 0-3zM609 329l-8 1 0-3zM601 330l0-3-8 1zM601 330l-8 1 0-3zM593 331l-8 2 0-3zM585 333l-8 2-1-4zM552 341l-8 3 0-4zM544 344l-8 3-1-4zM536 347l-8 3-1-4zM519 353l-8 4 0-4zM511 357l-8 3 0-4zM503 360l-8 4 0-4zM495 364l-7 4-1-4zM488 368l-8 5-1-5zM472 377l-8 5 0-5zM464 382l-7 5-1-5zM457 387l-8 4 0-4zM449 391l-7 6 0-5zM442 397l-7 5-1-5zM435 402l-7 5-1-4zM420 413l-6 6-1-5zM414 419l-7 6-1-5zM407 425l-7 6 0-5zM400 431l-6 6-1-5zM381 450l-6 7-1-5zM375 457l-6 6-1-5zM369 463l-6 7 0-5zM363 470l-5 7-1-5zM358 477l-1-5-5 7zM358 477l-6 7 0-5zM342 499l-5 7-1-5zM333 513l-5 8-1-5zM316 544l-1-6-4 8zM306 567l-3 8-1-6zM292 601l-2 8 0-11zM656 322l-2-1-8-1zM583 327l-1-2-8 1zM518 347l-9 3-1-3z"/>
<path fill="#0000a3" d="M413 668l-6-5-3 8zM851 478l-6-4 4-3zM708 442l5-8-8 1zM692 443l-3-7-8 1zM676 446l-3-7-8 1zM651 451l-3-7-8 2zM635 456l-8 2-3-7zM602 468l-8 3-3-7zM571 483l-8 5-3-8zM555 492l-3-7-8 5zM401 678l-3 8-5-7zM394 702l-6-8-2 8zM385 780l-7-8 1 8zM849 471l-6-4 2-4zM775 440l4-6-7-2zM753 436l4-6-8-1zM713 434l-8 1 5-8zM681 437l-8 2 4-9zM501 522l-3-8-7 6zM488 534l-3-8-7 6zM381 726l-5-9-2 8zM384 817l-8-9 2 7zM409 875l-10-8 4 6zM409 875l4 6-10-8zM564 469l2-10-8 5zM564 469l-7 4 1-9zM549 478l1-10-7 5zM541 482l-7 5 1-10zM427 594l-5 7-1-12zM413 616l-1-12-5 7zM372 763l0 8-6-5zM375 801l-6-5 1 7zM726 427l2-6-8 0zM718 427l2-6-8 0zM400 875l-9-7 4 6zM404 881l-9-7 4 6zM828 447l3-3-6-4zM815 441l-7-3 4-4zM743 422l-8-1 5-6zM735 421l5-6-7 0zM663 426l-3-7-8 2zM590 448l-8 4-3-7zM436 567l-3-7-5 7zM371 704l-1 8-6-8zM392 863l4 6-9-7zM364 803l-6-6 2 7zM378 843l-7-5 3 7zM384 856l-7-5 3 6zM417 901l-7-5 5 5zM417 901l5 4-7-4zM422 905l-7-4 5 5zM433 915l-8-5 6 5zM825 440l4-3-6-3zM819 437l-7-3 5-3zM792 426l-2-6-7-3zM792 426l-7-2-2-7zM770 420l-7-2-2-6zM763 418l-2-6-8-1zM740 415l-2-6-8-1zM668 418l-2-7-8 1zM627 427l-8 2-3-6zM587 441l-3-6-8 3zM555 457l-3-7-8 4zM547 461l-3-7-7 5zM525 475l-4-7-7 5zM517 480l-3-7-7 6zM510 485l-3-6-8 5zM510 485l-7 6-4-7zM503 491l-4-7-7 6zM496 496l-4-6-7 5zM475 514l-3-7-7 6zM462 526l-3-6-7 6zM462 526l-6 7-4-7zM450 539l-4-6-6 6zM438 553l-3-7-6 7zM417 581l-4-7-5 8zM412 588l-4-6-5 7zM412 588l-4 8-5-7zM395 618l-5-6-4 7zM368 688l-5-6-2 8zM363 712l-5-6-2 7zM360 751l-6-6 0 7zM616 423l-8 2 4-8zM544 454l-7 5-4-6zM492 490l-7 5-3-6zM418 567l-5 7-4-6zM413 574l-5 8-4-7zM408 582l-5 7-4-7zM386 619l-4-7-4 8zM354 745l-6-8 0 8zM355 775l-6-7 1 7zM377 851l3 6-7-6zM388 869l4 6-8-7zM363 659l-3 8-3-10zM361 825l-7-9 2 7zM356 823l3 6-7-6zM403 552l-2-8-6 7zM403 552l-5 7-3-8zM394 887l-8-6 5 5zM395 551l-2-8-5 7zM373 865l4 5-7-7zM351 618l-3 8-5-5zM334 787l-5-5 1 7zM334 787l1 7-5-5zM354 840l4 6-6-5zM384 546l-3-8-5 8zM331 661l-4-8-2 8zM387 884l-6-5 5 5zM343 606l-3 8-3-8zM332 803l2 7-5-8zM334 810l3 6-6-7zM350 841l-6-7 4 6zM376 874l-7-7 5 5zM314 708l-4-9 0 8zM319 767l1 8-5-8zM326 795l-5-8 2 7zM365 862l-7-7 5 5zM369 867l-6-7 4 5zM384 524l-1-9-5 7zM365 553l-2-9-4 8zM315 692l-3-8-1 8zM373 530l-5 7-1-9zM368 537l-1-9-5 8zM354 559l-1-9-4 8zM346 574l-4 8-1-9zM321 637l-2 8-2-9zM319 645l-2-9-2 7zM310 715l0 7-4-8zM311 737l-4-8 0 7zM314 759l1 8-4-9zM354 849l-7-7 5 5zM372 521l-5 7-3-4zM324 612l-3-5-3 8zM311 758l1 7-3-4zM321 607l-3 8-2-9zM318 615l-3 8-1-10zM304 678l-1 8-3-10zM303 709l-4-10 0 8zM330 817l-4-6 3 6zM307 637l-2 8-2-8zM305 645l-1 8-3-8zM300 722l-3-7 0 7zM314 786l-4-7 3 6zM312 606l-3 7-1-8zM298 729l1 8-3-9zM330 551l-4 7 0-9zM323 566l-4 8 0-9zM293 699l-2-9 0 7zM306 771l-4-9 3 7zM309 588l1-12-3 8zM296 635l-1-11-2 7zM291 705l-3-12 1 8zM294 727l1 7-4-11zM305 769l2 7-4-11zM313 569l-1-8-3 8zM293 631l-1 8-2-7zM286 694l-2-10 1 8zM289 716l1 7-3-9zM302 765l3 6-3-8zM295 599l-1-6-2 8zM293 607l-1-6-2 8zM284 669l-1-6-1 8zM285 699l-1-5 0 7zM290 729l-2-6 2 7zM292 736l-2-6 2 7zM296 749l-2-5 3 6zM765 356l-2-1-6-3zM765 356l-6-4-2 0zM752 349l-1-1-7-3zM752 349l-6-3-2-1zM739 343l-1-1-7-2zM732 341l-7-3-1-1zM725 338l-1-1-7-2zM718 336l-7-2-1-1zM711 334l-1-1-7-2zM696 331l-1-2-7-1zM689 330l-1-2-8-1zM673 328l0-2-8-1zM666 327l-1-2-8-1zM666 327l-8 0-1-3zM658 327l-1-3-8 0zM658 327l-8-1-1-2zM650 326l-1-2-8 0zM650 326l-8 0-1-2zM626 327l-1-2-8 0zM618 328l-1-3-8 1zM609 329l0-3-8 1zM585 333l0-3-9 1zM560 339l0-3-8 2zM552 341l0-3-8 2zM544 344l0-4-9 3zM536 347l-1-4-8 3zM528 350l-1-4-8 3zM503 360l0-4-8 4zM495 364l0-4-8 4zM488 368l-1-4-8 4zM480 373l-1-5-7 5zM472 377l0-4-8 4zM464 382l0-5-8 5zM457 387l-1-5-7 5zM449 391l0-4-7 5zM442 397l0-5-8 5zM428 407l-1-4-7 5zM420 413l0-5-7 6zM414 419l-1-5-7 6zM394 437l-7 7 0-5zM387 444l0-5-7 6zM381 450l-1-5-6 7zM375 457l-1-5-6 6zM369 463l-1-5-5 7zM363 470l0-5-6 7zM352 484l-5 7-1-5zM347 491l-5 8-1-6zM342 499l-1-6-5 8zM337 506l-1-5-4 7zM328 521l-1-5-4 7zM320 536l-1-5-4 7zM309 559l-1-5-3 8zM306 567l-1-5-3 7zM434 397l-7 6-2-3zM327 516l-4 7 2-10zM287 716l1 7-2-10zM686 326l-7-1-2-2zM350 476l-1-4-6 7zM292 590l-2 8-1-5zM582 325l0-3-9 2zM492 354l-7 4-1-3z"/>
<path fill="#0000ad" d="M465 926l5 4-9-4zM793 457l-8-2 0-6zM748 449l0-7-8 0zM675 453l1-7-8 1zM857 482l-6-4 3-3zM785 449l5-6-7-2zM668 447l-3-7-9 2zM627 458l-3-7-9 3zM498 535l-7 6-3-7zM445 595l-5-7-5 7zM394 702l-2 8-6-8zM386 741l-1 8-6-7zM398 844l-8-7 3 7zM837 463l-7-3 3-5zM783 441l-8-1 4-6zM768 438l4-6-8-1zM768 438l-8-1 4-6zM665 440l4-8-8 1zM607 457l-3-7-8 4zM591 464l-8 4-3-7zM560 480l-8 5-3-7zM501 522l-7 6-3-8zM393 679l-5-9-2 8zM379 787l-7-9 1 8zM402 863l-9-8 3 6zM417 887l4 5-6-2zM435 908l-6-2 5 4zM596 454l-8 3 2-9zM534 487l1-10-7 5zM534 487l-8 5 2-10zM409 623l-4 8-6-5zM405 631l-6-5-4 8zM401 639l-6-5-3 8zM372 756l-6-5 0 8zM827 452l1-5-6-3zM793 438l2-5-7-3zM718 427l-8 0 2-6zM710 427l2-6-8 0zM427 907l-10-6 5 4zM432 911l5 5-10-6zM437 916l6 4-10-5zM834 450l4-3-7-3zM766 425l4-5-7-2zM766 425l-8-1 5-6zM606 442l-3-7-8 3zM598 445l-8 3-3-7zM535 477l-3-7-7 5zM499 504l-3-8-7 6zM499 504l-7 5-3-7zM479 521l-4-7-6 6zM431 574l-3-7-6 7zM385 657l-3 8-4-8zM382 665l-2 8-5-8zM377 681l-2 8-5-8zM366 743l0 8-6-8zM366 774l-6-8 0 7zM368 789l-7-8 1 7zM375 824l3 7-8-7zM378 831l-8-7 2 6zM392 863l-8-7 3 6zM378 843l3 7-7-5zM384 856l3 6-7-5zM387 862l-7-5 4 6zM387 862l4 6-7-5zM395 874l-7-5 4 6zM399 880l-7-5 4 5zM412 896l-7-5 5 5zM412 896l5 5-7-5zM422 905l5 5-7-4zM444 923l-8-4 6 4zM849 455l-6-4 4-2zM831 444l4-3-6-4zM831 444l-6-4 4-3zM819 437l4-3-6-3zM812 434l5-3-7-3zM812 434l-6-3 4-3zM806 431l-7-3 4-3zM799 428l4-3-6-3zM799 428l-2-6-7-2zM770 420l-2-6-7-2zM756 417l-8-1-3-6zM740 415l-7 0-3-7zM725 414l-8 0-3-6zM709 414l-8 0-3-6zM685 415l-8 1-3-6zM677 416l-3-6-8 1zM636 424l-3-6-8 2zM636 424l-9 3-2-7zM611 432l-3-7-8 3zM611 432l-8 3-3-7zM587 441l-8 4-3-7zM571 449l-8 4-3-7zM563 453l-3-7-8 4zM563 453l-8 4-3-7zM540 466l-8 4-3-6zM532 470l-7 5-4-7zM433 560l-5 7-5-7zM408 596l-5 7-4-7zM391 626l-5-7-3 8zM391 626l-4 8-4-7zM387 634l-3 7-5-6zM381 649l-3 8-5-7zM378 657l-3 8-5-7zM370 681l-5-7-2 8zM366 696l-5-6-2 8zM364 704l-1 8-5-6zM361 728l-1 7-5-6zM360 735l0 8-6-6zM360 758l0 8-6-6zM362 788l-6-6 1 8zM399 596l-5 8-4-7zM371 838l-7-7 3 7zM348 753l0 7-5-9zM376 857l-8-9 3 6zM397 885l-10-8 5 6zM397 572l-4-6-5 8zM380 602l-5-6-4 8zM357 657l-5-7-2 8zM345 704l-1 8-5-7zM343 766l1 7-5-7zM380 589l-5 7-3-8zM340 774l-6-8 1 8zM355 829l-6-7 2 7zM358 836l3 6-7-7zM376 866l-7-7 4 6zM399 892l-8-6 5 5zM381 573l-5 8-2-8zM348 643l-3-9-3 8zM396 891l-8-7 5 5zM354 611l-3 7-4-4zM337 658l-4-5-2 8zM328 751l1 7-5-5zM378 874l-5-5 5 6zM325 692l-4-7-1 8zM323 715l0 8-5-7zM378 875l-7-6 5 5zM378 875l4 5-6-6zM315 738l-5-8 1 7zM360 857l-6-8 4 6zM379 531l-1-9-5 8zM316 685l-3-9-1 8zM363 544l-1-8-4 7zM312 745l-5-9 1 8zM332 814l3 6-6-8zM345 565l-4-4-4 8zM333 589l-3 7-3-4zM317 636l-4-5-2 8zM312 765l2 7-4-4zM329 812l-4-4 4 6zM333 576l-3 8-1-10zM334 823l-5-6 4 5zM354 529l-1-8-5 8zM349 537l-1-8-4 7zM349 537l-4 7-1-8zM301 668l-2-7-1 7zM308 765l2 7-4-7zM327 567l-3 7-1-8zM309 613l-2 8-2-8zM297 722l1 7-3-8zM326 811l3 6-5-8zM294 668l-2-9 0 8zM322 557l-3 8 1-12zM298 748l2 7-4-11zM313 788l-5-10 3 6zM332 530l-4 8-1-7zM340 508l2-9-5 7zM336 516l-5 7 2-10zM327 531l1-10-4 8zM286 694l1 7-2-9zM291 730l2 7-3-8zM288 630l-2-6-1 8zM284 661l-1-5 0 7zM284 684l-1-5 0 7zM285 692l0 7-1-5zM289 721l1 8-2-6zM294 743l-2-6 2 7zM746 346l-2-1-6-3zM732 341l-1-1-7-3zM718 336l-1-1-7-2zM681 329l-1-2-7-1zM642 326l-1-2-8 0zM593 331l0-3-8 2zM568 337l0-4-8 3zM519 353l0-4-8 4zM511 357l0-4-8 3zM435 402l-1-5-7 6zM407 425l-1-5-6 6zM400 431l0-5-7 6zM352 484l0-5-6 7zM347 491l-1-5-5 7zM337 506l-4 7-1-5zM333 513l-1-5-5 8zM328 521l-4 8-1-6zM324 529l-4 7-1-5zM312 552l-3 7-1-5zM297 591l-1-6-2 8zM609 326l-8 1-2-2zM560 336l-8 2-2-3zM552 338l-8 2-2-2zM511 353l-8 3-2-3zM449 387l-2-3-7 5zM420 408l-2-3-7 6zM387 439l-7 6-2-3zM374 452l-6 6 4-10zM308 554l-3 8 1-11zM294 593l0-11-2 8zM286 624l0-10-1 8zM299 562l-3 8-1-4zM469 363l4-5-8 4zM393 414l4-7-7 6zM428 377l-8 5 4-5zM341 458l-6 7 5-9zM305 517l-4 8 3-9zM507 328l-8 3 2-1zM307 505l2-3-4 8z"/>
<path fill="#0000b8" d="M536 525l-3-8-7 6zM479 565l-6 7 0-11zM424 644l-6-4-4 7zM413 668l-3 7-6-4zM439 902l5 5-9-4zM459 921l-9-4 6 5zM846 481l-1-7-6-3zM740 449l0-7-8-1zM716 449l-8 0 0-7zM827 464l3-4-6-4zM820 461l-7-3 4-5zM771 445l4-5-7-2zM763 444l5-6-8-1zM659 449l-8 2-3-7zM505 529l-7 6-4-7zM479 554l-4-7-6 6zM467 567l-6 7-4-7zM450 588l-4-8-6 8zM418 640l-5-8-4 8zM418 640l-4 7-5-7zM392 823l2 7-8-6zM804 448l-7-3 3-5zM697 435l-8 1 5-8zM494 528l-6 6-3-8zM481 540l-6 7-3-8zM446 580l-4-8-5 7zM421 617l-4 7-4-8zM405 647l-3 8-4-9zM384 710l-1 8-6-9zM379 749l-1 8-6-9zM378 772l1 8-7-9zM435 908l5 4-6-2zM628 442l-8 2 2-8zM588 457l-8 4 2-9zM442 572l0-12-6 7zM432 586l-5 8-1-12zM422 601l-1-12-5 7zM417 608l-4 8-1-12zM394 654l-3 8-6-5zM388 670l-6-5-2 8zM372 771l0 7-6-4zM382 829l2 6-6-4zM399 867l-7-4 4 6zM407 879l-7-4 4 6zM814 446l-7-3 1-5zM772 432l-8-1 2-6zM404 881l4 5-9-6zM408 886l-9-6 4 5zM432 911l-10-6 5 5zM443 920l-10-5 5 4zM751 423l5-6-8-1zM751 423l-8-1 5-6zM743 422l5-6-8-1zM728 421l-3-7-8 0zM720 421l-3-7-8 0zM712 421l-3-7-8 0zM704 421l-3-7-8 1zM679 423l-2-7-9 2zM622 436l-3-7-8 3zM614 439l-8 3-3-7zM566 459l-8 5-3-7zM558 464l-3-7-8 4zM543 473l-3-7-8 4zM543 473l-8 4-3-7zM535 477l-7 5-3-7zM506 498l-3-7-7 5zM460 540l-4-7-6 6zM448 554l-4-8-6 7zM421 589l-5 7-4-8zM416 596l-4-8-4 8zM399 626l-4-8-4 8zM392 642l-5-8-3 7zM377 681l-5-8-2 8zM375 689l-5-8-2 7zM375 689l-2 7-5-8zM371 704l-5-8-2 8zM366 743l-6-8 0 8zM366 759l-6-8 0 7zM371 810l-7-7 2 7zM396 869l-9-7 4 6zM366 810l-6-6 1 7zM368 817l-7-6 2 7zM370 824l-7-6 3 7zM381 850l3 6-7-5zM391 868l4 6-7-5zM395 874l4 6-7-5zM399 880l4 5-7-5zM403 885l5 5-8-4zM427 910l6 5-8-5zM843 451l4-2-6-4zM838 447l-7-3 4-3zM825 440l-6-3 4-3zM799 428l-7-2-2-6zM763 418l-7-1-3-6zM701 414l-8 1-3-7zM668 418l-8 1-2-7zM652 421l-8 1-3-6zM482 508l-7 6-3-7zM469 520l-7 6-3-6zM450 539l-6 7-4-7zM444 546l-6 7-3-7zM438 553l-5 7-4-7zM422 574l-5 7-4-7zM417 581l-5 7-4-6zM403 603l-4-7-5 8zM375 665l-5-7-3 8zM368 688l-2 8-5-6zM364 704l-5-6-1 8zM383 627l-5-7-3 8zM373 650l-3 8-5-7zM349 722l0 8-5-10zM349 768l-6-10 0 8zM355 804l2 7-7-9zM343 735l-6-6 0 7zM356 823l-6-7 2 7zM375 860l-7-6 4 6zM379 866l4 6-7-6zM387 877l5 6-8-6zM392 883l-8-6 5 5zM384 581l-3-8-5 8zM348 809l-7-7 3 7zM348 626l-5-5-3 8zM388 550l-5 8-4-5zM383 558l-4-5-5 7zM343 621l-3-7-3 8zM329 668l-1 8-4-7zM327 775l-5-7 2 7zM373 869l5 6-7-6zM362 568l-4 7-2-7zM320 754l-5-8 1 7zM337 816l-6-7 3 6zM337 816l3 7-6-8zM362 858l-6-7 4 6zM362 858l5 6-7-7zM381 879l-7-7 5 5zM314 723l-4-8 0 7zM352 845l4 6-6-7zM379 531l-5 7-1-8zM315 700l-4-8-1 7zM373 530l-1-9-5 7zM363 544l-4 8-1-9zM317 652l-2 8-2-9zM311 692l-1 7-3-9zM319 628l-4-5-2 8zM317 636l-2 7-4-4zM306 698l0 8-3-5zM347 842l-3-5 4 6zM315 623l-1-10-3 8zM303 709l0 8-4-10zM309 761l1 7-4-10zM364 515l-5 7-1-8zM300 684l-3-8-1 8zM300 722l1 8-4-8zM312 606l-2-9-2 8zM322 804l4 7-5-8zM308 605l-2-9-2 8zM294 676l-2-9-1 7zM291 690l-3-12 0 8zM324 545l-4 8-1-7zM288 686l-2-7 0 7zM289 701l0 7-2-7zM336 516l1-10-4 7zM303 585l0-10-3 8zM296 608l-2 8-1-9zM286 679l-2-10 0 8zM289 716l-3-9 1 7zM293 737l-3-8 2 7zM285 654l-2-6 0 8zM757 352l-6-4-2-1zM744 345l-6-3-2-1zM724 337l-7-2-2-2zM717 335l-7-2-2-2zM710 333l-7-2-2-2zM703 331l-8-2-1-1zM695 329l-7-1-2-2zM680 327l-7-1-2-2zM657 324l-8 0-1-2zM649 324l-8 0-1-2zM633 324l-8 1-1-3zM625 325l-8 0-1-2zM617 325l-8 1-1-2zM593 328l-8 2-2-3zM544 340l-9 3-1-3zM519 349l-8 4-2-3zM479 368l-7 5-2-3zM472 373l-8 4-2-3zM456 382l-7 5-2-3zM442 392l-8 5-2-3zM420 408l-7 6-2-3zM406 420l-6 6-2-3zM400 426l-7 6-2-3zM387 439l-2-4-7 7zM368 458l-5 7 3-10zM352 479l-6 7 4-10zM341 493l-5 8 3-11zM323 523l-4 8 2-11zM315 538l-4 8 2-11zM296 585l-2 8 0-11zM292 601l0-11-2 8zM288 617l-2 7 0-10zM286 624l-1 8 0-10zM285 632l-1 8 0-10zM283 648l0 8-1-11zM283 656l0 7-2-10zM283 663l-1 8-1-10zM282 671l1 8-2-11zM283 679l-2-11 0 8zM283 679l0 7-2-10zM591 326l-8 1-1-2zM542 338l-8 2-1-2zM518 347l-2-3-8 3zM478 365l-8 5-1-4zM281 653l0 8-1-5zM699 328l-1-1-7-2zM453 372l4-6-7 5zM403 409l-7 6 3-7zM479 352l-1-2-8 4zM534 327l-8 3 4-3zM318 500l-5 7 2-6zM494 338l-2-1-8 3zM468 348l-8 4-2 0zM379 410l-7 6 1-3zM372 416l1-3-6 7zM429 368l-8 5 2-3zM380 403l-6 6 3-3z"/>
<path fill="#0000c2" d="M475 596l-4-9-5 7zM400 801l-8-9 1 7zM428 881l-10-7 4 6zM445 903l-6-1 5 5zM711 456l-8 1 5-8zM450 615l-5 8-4-9zM485 559l0-11-6 6zM437 622l-2-12-5 7zM428 637l-2-12-4 7zM428 637l-4 7-2-12zM420 652l-6-5-4 8zM820 467l-6-3-1-6zM771 452l0-7-8-1zM755 450l-7-1 0-7zM851 478l3-3-5-4zM820 461l4-5-7-3zM716 441l-8 1 5-8zM684 444l-3-7-8 2zM392 710l-6-8-2 8zM385 749l0 8-6-8zM401 850l3 7-8-7zM414 875l-9-6 4 6zM422 887l-9-6 4 6zM811 451l3-5-7-3zM790 443l3-5-7-2zM745 435l4-6-8-1zM737 435l-8-1 5-6zM632 449l-8 2-4-7zM607 457l-8 4-3-7zM522 505l-3-7-7 5zM481 540l-3-8-6 7zM430 602l-4 7-4-8zM413 632l-4-9-4 8zM396 671l-3 8-5-9zM393 679l-3 8-4-9zM384 710l-5-9-2 8zM396 850l-9-8 3 7zM440 912l6 5-7-2zM653 435l2-8-8 2zM557 473l1-9-8 4zM541 482l2-9-8 4zM491 520l-6 6 0-11zM384 835l-6-4 2 7zM396 861l-7-4 3 6zM424 901l-7-4 5 5zM857 471l-6-4 1-5zM757 430l-8-1 2-6zM400 875l4 6-9-7zM408 886l4 6-9-7zM422 902l-10-6 5 5zM422 902l5 5-10-6zM443 920l5 4-10-5zM448 924l6 4-10-5zM846 458l3-3-6-4zM846 458l-6-4 3-3zM822 444l3-4-6-3zM822 444l-7-3 4-4zM815 441l4-4-7-3zM808 438l4-4-6-3zM788 430l-8-2 5-4zM780 428l-7-1 5-5zM758 424l5-6-7-1zM735 421l-7 0 5-6zM696 421l-3-6-8 0zM688 422l-9 1-2-7zM655 427l-3-6-8 1zM614 439l-3-7-8 3zM582 452l-3-7-8 4zM582 452l-8 4-3-7zM566 459l-3-6-8 4zM550 468l-3-7-7 5zM485 515l-3-7-7 6zM466 534l-4-8-6 7zM453 547l-3-8-6 7zM442 560l-4-7-5 7zM412 604l-5 7-4-8zM399 626l-4 8-4-8zM395 634l-4-8-4 8zM395 634l-3 8-5-8zM388 649l-4-8-3 8zM385 657l-4-8-3 8zM382 665l-4-8-3 8zM373 696l-2 8-5-8zM370 712l-6-8-1 8zM367 728l0 8-6-8zM367 736l-6-8-1 7zM367 736l-1 7-6-8zM366 751l-6-8 0 8zM366 751l0 8-6-8zM366 759l0 7-6-8zM366 766l0 8-6-8zM369 796l-7-8 1 7zM370 803l1 7-7-7zM380 838l-8-8 3 7zM383 844l-8-7 3 6zM386 851l-8-8 3 7zM389 857l-8-7 3 6zM579 445l-3-7-8 4zM496 496l-7 6-4-7zM403 603l-4 8-5-7zM399 611l-4 7-5-6zM372 673l-5-7-2 8zM370 681l-2 7-5-6zM362 720l-1 8-6-7zM360 751l0 7-6-6zM360 766l-6-6 0 7zM360 766l0 7-6-6zM379 635l-4-7-4 8zM354 760l-6-7 0 7zM371 636l-3 7-3-10zM353 698l-5-10-1 8zM349 730l-5-10-1 8zM349 730l-1 7-5-9zM348 745l-5-10-1 8zM348 760l-5-9 0 7zM388 587l-4 8-4-6zM376 610l-5-6-3 7zM372 618l-3 7-5-6zM352 809l2 7-6-7zM387 877l-7-6 4 6zM384 581l-4 8-4-8zM371 604l-3-8-4 8zM364 619l-3 8-4-8zM361 627l-3 8-4-8zM357 619l-3 8-3-9zM335 698l-4-9-1 8zM333 721l-5-8-1 7zM334 766l-5-8 1 7zM335 774l1 7-5-8zM341 802l3 7-7-8zM349 822l-7-7 3 6zM377 870l4 6-7-7zM328 713l-1 7-4-5zM335 794l-5-5 2 7zM374 869l4 5-5-5zM338 637l-3 8-3-7zM323 723l-5-7 0 8zM326 768l-5-7 1 7zM330 789l2 7-5-6zM346 829l3 6-6-6zM367 560l-2-7-5 7zM329 645l-2 8-3-8zM318 731l1 8-5-8zM347 835l3 6-6-7zM314 731l-4-9 0 8zM324 789l2 6-5-8zM337 821l-5-7 3 6zM348 840l4 5-6-7zM365 553l-5 7-1-8zM329 613l-2-9-3 8zM319 645l-2 7-2-9zM338 826l-6-8 4 7zM342 832l4 6-6-8zM341 573l-4 8-4-5zM306 714l-3-5 0 8zM309 751l-3-5 1 7zM312 765l-3-4 1 7zM321 607l-2-9-3 8zM306 746l-4-9 1 7zM334 823l4 6-5-7zM304 751l2 7-4-7zM335 551l-1-8-4 8zM327 567l-1-9-3 8zM324 574l-3 8-2-8zM314 598l-2 8-2-9zM299 661l-3-9-1 8zM310 779l3 6-4-8zM313 785l3 7-5-8zM323 566l-1-9-3 8zM305 613l-2 8-1-9zM295 660l-2-9-1 8zM294 668l0 8-2-9zM295 643l-2 8-1-12zM291 705l1 7-3-11zM316 795l-5-11 3 7zM341 515l-5 8 0-7zM313 569l-3 7-1-7zM293 631l-1-7-2 8zM289 670l-1 8-2-7zM291 723l2 7-3-7zM327 531l-4 7 1-9zM319 546l1-10-4 8zM296 608l-1-9-2 8zM300 758l-4-9 3 7zM293 607l-2 7-1-5zM287 714l2 7-2-5zM324 529l-1-6-4 8zM320 536l-4 8-1-6zM300 583l-3 8-1-6zM751 348l-2-1-6-3zM751 348l-7-3-1-1zM738 342l-7-2-2-2zM731 340l-7-3-2-1zM724 337l-2-1-7-3zM703 331l-2-2-7-1zM688 328l-8-1-1-2zM680 327l-1-2-8-1zM665 325l-2-2-7-1zM665 325l-8-1-1-2zM657 324l-1-2-8 0zM649 324l-1-2-8 0zM641 324l-8 0-1-2zM601 327l-2-2-8 1zM601 327l-8 1-2-2zM585 330l-9 1-1-2zM576 331l-8 2-1-2zM568 333l-1-2-9 2zM568 333l-8 3-2-3zM535 343l-8 3-1-3zM527 346l-8 3-1-2zM511 353l-2-3-8 3zM503 356l-2-3-8 4zM495 360l-8 4-1-3zM487 364l-8 4-1-3zM464 377l-8 5-1-3zM449 387l-7 5-2-3zM427 403l-7 5-2-3zM413 414l-7 6-2-3zM406 420l-2-3-6 6zM393 432l-6 7-2-4zM380 445l-6 7-2-4zM357 472l-5 7 3-10zM346 486l-5 7 3-10zM336 501l3-11-5 8zM336 501l-4 7 2-10zM327 516l3-11-5 8zM323 523l2-10-4 7zM315 538l2-10-4 7zM311 546l-3 8 1-11zM302 569l1-10-3 8zM299 577l-3 8 1-11zM290 609l-2 8 0-11zM284 640l0-10-1 7zM283 648l0-11-1 8zM283 686l1 8-2-11zM284 701l2 7-3-10zM286 708l1 8-3-10zM287 716l-3-10 2 7zM288 723l-2-10 1 7zM288 723l2 7-3-10zM290 730l-3-10 2 7zM290 730l2 7-3-10zM708 331l-2-1-7-2zM432 394l-1-3-7 5zM378 442l-6 6-1-4zM565 328l-8 2 0-2zM291 585l1-11-2 8zM356 453l3-8-5 7zM289 572l-2 8 1-11zM543 322l-8 2-2-1zM304 516l2-7-3 8z"/>
<path fill="#0000cc" d="M414 837l-8-8 2 7zM402 731l-1 8-6-9zM401 739l-6-9-1 8zM399 786l-7-9 0 8zM401 808l1 7-8-8zM412 850l-9-8 3 7zM418 863l-9-8 3 7zM432 887l-10-7 4 6zM436 893l-6-2 4 6zM823 475l4-5-7-3zM450 615l-4-8-5 7zM445 623l-4-9-4 8zM392 785l0 7-6-5zM392 792l1 7-7-4zM459 921l6 5-9-4zM755 450l1-7-8-1zM692 451l0-8-8 1zM618 470l1-9-9 3zM602 477l0-9-8 3zM594 480l-8 4 0-9zM763 444l-7-1 4-6zM627 458l-8 3-4-7zM473 561l-6 6-4-7zM455 581l-5 7-4-8zM394 830l2 7-8-7zM430 898l-9-6 5 6zM705 435l5-8-8 1zM673 439l4-9-8 2zM537 495l-7 5-4-8zM530 500l-8 5-3-7zM409 640l-4-9-4 8zM409 640l-4 7-4-8zM380 734l-1 8-6-9zM379 749l-6-9-1 8zM393 844l-9-9 3 7zM645 437l2-8-9 2zM637 439l1-8-8 2zM612 447l2-8-8 3zM588 457l2-9-8 4zM580 461l2-9-8 4zM580 461l-8 4 2-9zM485 526l-7 6 1-11zM478 532l1-11-7 6zM459 552l1-12-7 7zM448 565l0-11-6 6zM409 623l-6-4-4 7zM405 631l-4 8-6-5zM394 654l-6-5-3 8zM383 685l-6-4-2 8zM372 763l-6-4 0 7zM376 808l-6-5 1 7zM393 855l3 6-7-4zM403 873l4 6-7-4zM827 452l-7-3 2-5zM800 440l2-5-7-2zM749 429l2-6-8-1zM417 897l5 5-10-6zM852 462l-6-4 3-3zM840 454l-6-4 4-3zM828 447l-6-3 3-4zM808 438l-6-3 4-4zM802 435l4-4-7-3zM802 435l-7-2 4-5zM795 433l-7-3 4-4zM712 421l-8 0-3-7zM679 423l-8 1-3-6zM671 424l-3-6-8 1zM671 424l-8 2-3-7zM663 426l-8 1-3-6zM638 431l-8 2-3-6zM630 433l-8 3-3-7zM622 436l-8 3-3-7zM606 442l-8 3-3-7zM460 540l-7 7-3-8zM448 554l-6 6-4-7zM436 567l-5 7-3-7zM431 574l-5 8-4-8zM416 596l-4 8-4-8zM407 611l-4 8-4-8zM368 720l-5-8-1 8zM366 766l-6-8 0 8zM380 838l3 6-8-7zM389 857l3 6-8-7zM372 830l3 7-7-6zM375 837l3 6-7-5zM395 618l-4 8-5-7zM375 665l-3 8-5-7zM360 743l0 8-6-6zM370 658l-3 8-4-7zM367 666l-2 8-5-7zM358 706l-2 7-5-7zM354 752l-6-7 0 8zM363 818l-6-7 2 7zM382 612l-4 8-2-10zM360 667l-2 8-4-10zM388 587l-4-6-4 8zM357 657l-3 8-4-7zM348 688l-4-6-2 8zM341 698l-5-8-1 8zM337 729l-4-8-1 8zM339 766l1 8-6-8zM376 866l4 5-7-6zM368 596l-3-8-4 7zM335 698l-1 7-4-8zM332 729l-5-9 0 8zM336 781l-5-8 1 7zM361 583l-4 7-3-7zM368 864l-6-6 5 6zM322 782l-5-8 2 7zM324 789l-5-8 2 6zM337 606l-2-9-3 8zM323 794l3 7-5-8zM329 807l3 7-6-8zM349 558l-4 7-4-4zM306 721l-3-4 0 7zM307 729l-4-5 1 8zM318 786l-4-5 3 7zM350 546l-5 7 0-9zM320 795l-6-9 3 6zM345 544l-5 8-1-8zM314 613l-2-7-3 7zM299 699l-3-7 0 7zM307 621l-2-8-2 8zM299 637l-1 7-2-9zM330 542l2-12-4 8zM292 712l1 8-4-12zM336 523l-4 7-1-7zM328 538l-4 7-1-7zM303 765l2 7-3-7zM323 538l1-9-4 7zM298 601l-1-10-2 8zM298 601l-2 7-1-9zM288 648l-1-10-1 8zM287 655l0 8-2-9zM302 765l-3-9 3 7zM289 622l-1-5-2 7zM286 707l-2-6 2 7zM744 345l-1-1-7-3zM731 340l-2-2-7-2zM717 335l-2-2-7-2zM710 333l-2-2-7-2zM695 329l-1-1-8-2zM688 328l-2-2-7-1zM673 326l-8-1-2-2zM641 324l-1-2-8 0zM633 324l-1-2-8 0zM625 325l-1-3-8 1zM617 325l-1-2-8 1zM609 326l-1-2-9 1zM585 330l-2-3-8 2zM576 331l-1-2-8 2zM552 338l-2-3-8 3zM544 340l-2-2-8 2zM535 343l-1-3-8 3zM527 346l-1-3-8 4zM519 349l-1-2-9 3zM495 360l-2-3-7 4zM487 364l-1-3-8 4zM479 368l-1-3-8 5zM472 373l-2-3-8 4zM456 382l-1-3-8 5zM442 392l-2-3-8 5zM434 397l-2-3-7 6zM427 403l-2-3-7 5zM413 414l-2-3-7 6zM400 426l-2-3-7 6zM393 432l-2-3-6 6zM380 445l-2-3-6 6zM368 458l4-10-6 7zM363 465l3-10-5 7zM363 465l-6 7 4-10zM352 479l3-10-5 7zM346 486l4-10-6 7zM341 493l3-10-5 7zM332 508l2-10-4 7zM319 531l2-11-4 8zM308 554l1-11-3 8zM296 585l1-11-3 8zM288 617l0-11-2 8zM285 632l0-10-1 8zM283 656l-1-11-1 8zM283 663l-2-10 0 8zM282 671l-1-10 0 7zM283 686l-2-10 1 7zM284 694l-2-11 0 8zM284 701l-2-10 1 7zM486 361l-8 4-1-3zM309 543l-3 8-1-5zM292 590l-1-5-2 8zM293 565l1-9-3 8zM343 466l-6 7 5-10zM352 444l4-8-5 6zM355 433l-6 7 2-4zM402 386l-7 6 4-4zM381 404l-6 6 3-4zM392 394l2-3-7 6z"/>
<path fill="#0000d6" d="M436 874l3 6-8-4zM705 465l-2-8-8 1zM631 482l-2-8-8 3zM398 770l0 8-7-9zM399 793l-7-8 0 7zM441 898l-7-1 5 5zM849 489l-6-4 3-4zM830 478l3-5-6-3zM803 467l4-5-7-3zM654 466l-3-7-9 2zM613 481l-8 3-3-7zM466 594l-4-8-6 7zM445 623l-4 7-4-8zM540 512l-7 5 0-10zM498 546l-6 6-1-11zM462 586l-6 7-1-12zM446 607l-5 7-1-12zM420 652l-3 8-7-5zM793 457l0-6-8-2zM771 452l-8-1 0-7zM724 448l-8 1 0-8zM716 449l0-8-8 1zM642 461l-8 3 1-8zM839 471l4-4-6-4zM800 453l4-5-7-3zM740 442l5-7-8 0zM700 442l5-7-8 0zM533 507l-7 5-4-7zM445 595l-5 7-5-7zM422 632l-4 8-5-8zM404 671l-5-8-3 8zM398 686l-5-7-3 8zM386 741l-6-7-1 8zM385 772l0 8-7-8zM398 844l3 6-8-6zM410 869l-8-6 3 6zM721 434l5-7-8 0zM648 444l-8 2-3-7zM494 528l-3-8-6 6zM413 632l-4 8-4-9zM405 869l-9-8 3 6zM430 903l5 5-6-2zM451 921l-6-2 6 5zM653 435l-8 2 2-8zM637 439l-9 3 2-9zM620 444l2-8-8 3zM596 454l2-9-8 3zM572 465l-8 4 2-10zM557 473l-8 5 1-10zM519 498l1-11-7 6zM512 503l1-10-7 5zM491 520l1-11-7 6zM485 526l0-11-6 6zM472 539l-7 6 1-11zM454 558l-6 7 0-11zM448 565l-6 7 0-12zM442 572l-5 7-1-12zM437 579l-5 7-1-12zM422 601l-5 7-1-12zM417 608l-1-12-4 8zM409 623l-2-12-4 8zM398 646l-6-4-4 7zM391 662l-6-5-3 8zM381 693l-6-4-2 7zM379 701l-6-5-2 8zM379 701l-2 8-6-5zM377 709l-6-5-1 8zM374 725l-6-5-1 8zM373 740l-6-4-1 7zM372 748l-6-5 0 8zM373 786l-6-5 1 8zM373 786l1 7-6-4zM374 793l-6-4 1 7zM374 793l1 8-6-5zM375 801l1 7-6-5zM380 822l2 7-7-5zM382 829l-7-5 3 7zM387 842l-7-4 3 6zM390 849l3 6-7-4zM396 861l3 6-7-4zM399 867l4 6-7-4zM415 890l-7-4 4 6zM415 890l5 6-8-4zM420 896l4 5-7-4zM424 901l5 5-7-4zM429 906l-7-4 5 5zM434 910l-7-3 5 4zM445 919l6 5-8-4zM851 467l-6-4 1-5zM839 459l1-5-6-4zM839 459l-6-4 1-5zM807 443l-7-3 2-5zM757 430l1-6-7-1zM741 428l-7 0 1-7zM710 427l-8 1 2-7zM694 428l2-7-8 1zM686 429l2-7-9 1zM677 430l-8 2 2-8zM669 432l-8 1 2-7zM688 422l-3-7-8 1zM655 427l-8 2-3-7zM485 515l-6 6-4-7zM426 582l-4-8-5 7zM403 619l-4 7-4-8zM392 642l-4 7-4-8zM388 649l-3 8-4-8zM380 673l-5-8-3 8zM366 696l-2 8-5-6zM354 760l0 7-6-7zM354 767l-6-7 1 8zM357 790l-6-7 1 7zM361 811l2 7-6-7zM384 863l-8-6 4 6zM371 636l-2-11-4 8zM380 589l-4-8-4 7zM341 698l-2 7-4-7zM352 823l3 6-6-7zM368 596l-4 8-3-9zM364 604l-3-9-3 8zM361 611l-4 8-3-8zM341 666l-4-8-2 8zM333 759l-5-8 1 7zM334 766l1 8-5-9zM354 835l4 6-7-7zM348 626l-3 8-5-5zM345 821l3 7-5-5zM343 823l3 6-6-6zM318 716l-4-8 0 7zM331 622l-2 8-3-9zM315 692l0 8-4-8zM312 684l-1 8-3-9zM310 707l0 8-4-9zM313 752l1 7-5-8zM310 667l-4-5-1 8zM310 667l-1 8-4-5zM314 772l-4-4 2 7zM329 812l3 6-3-4zM341 561l-4 8-1-10zM315 623l-2 8-2-10zM309 647l-1 8-3-10zM340 552l-1-8-4 7zM340 552l-4 7-1-8zM299 692l0 7-3-7zM302 751l2 7-4-8zM319 798l3 6-5-7zM308 605l-3 8-1-9zM317 797l4 6-5-8zM292 659l-1-12-1 8zM291 697l0 8-3-12zM290 655l-1 8-2-8zM303 765l-3-7 2 7zM306 577l-3 8 0-10zM293 737l2 7-3-8zM286 707l1 7-1-6zM316 544l-4 8-1-6zM312 552l-1-6-3 8zM297 591l-2 8-1-6zM738 342l-2-1-7-3zM673 326l-2-2-8-1zM560 336l-2-3-8 2zM464 377l-2-3-7 5zM357 472l4-10-6 7zM294 593l-2 8 0-11zM701 329l-7-1-2-2zM694 328l-8-2-2-1zM679 325l-8-1-2-2zM671 324l-8-1-1-2zM656 322l-8 0-2-2zM640 322l-8 0-2-2zM632 322l-2-2-8 0zM583 327l-8 2-1-3zM575 329l-8 2-2-3zM567 331l-9 2-1-3zM509 350l-8 3-1-3zM470 370l-8 4-1-3zM462 374l-7 5-1-3zM455 379l-8 5-1-4zM440 389l-8 5-1-3zM432 394l-7 6-1-4zM411 411l-7 6-1-4zM404 417l-6 6-1-4zM398 423l-7 6-1-4zM391 429l-6 6-1-4zM385 435l-7 7-1-4zM372 448l-6 7-1-4zM339 490l-5 8-1-5zM321 520l-1-4-4 7zM317 528l-4 7-1-4zM313 535l-4 8-1-4zM300 567l-3 7-1-4zM294 582l-2 8-1-5zM286 614l-1 8-1-5zM284 630l-1 7-2-4zM282 645l-1 8-1-5zM281 653l-1-5 0 8zM281 668l0 8-1-5zM283 698l1 8-1-5zM284 706l-1-5 2 7zM286 713l1 7-2-12zM289 727l-3-12 2 7zM573 324l-8 2 5-3zM383 428l3-8-6 7zM281 689l1 8-1-9zM576 319l-8 2-1-2zM454 362l4-4-8 4zM389 410l3-5-6 6zM595 315l-3-1-8 1zM616 314l-2 0-8-1zM533 323l-8 3-2-1zM291 548l3-11-2 8zM474 341l-8 4 3-2zM453 351l-8 4 4-2zM408 380l3-3-7 5z"/>
<path fill="#0000e0" d="M562 527l-1-9-8 5zM625 493l-2-8-8 4zM451 904l-10-6 4 5zM639 479l-1-8-9 3zM518 550l-7 6-3-8zM498 569l-3-9-6 7zM415 709l-2 8-5-9zM407 748l-1 8-6-9zM406 794l1 7-8-8zM410 823l-8-8 2 7zM410 823l2 7-8-8zM424 863l-9-7 3 7zM408 708l-2 8-6-9zM398 770l-6-8-1 7zM410 843l-9-8 2 7zM415 856l-9-7 3 6zM425 875l-10-7 3 6zM460 918l-6-1 5 4zM766 458l5-6-8-1zM735 456l-8 0 5-8zM629 474l-3-7-8 3zM581 496l-3-8-8 5zM508 548l-3-8-7 6zM432 645l-4 8-4-9zM415 684l-5-9-3 8zM451 600l-1-12-5 7zM400 707l-2 8-6-5zM395 730l-7-4-1 7zM406 849l-8-5 3 6zM418 874l4 6-8-5zM465 926l-9-4 5 4zM827 470l0-6-7-3zM724 448l0-7-8 0zM626 467l1-9-8 3zM833 467l4-4-7-3zM724 441l5-7-8 0zM440 602l-5 8-5-8zM407 863l-8-6 3 6zM414 875l4 6-9-6zM426 892l-9-5 4 5zM440 908l5 5-10-5zM804 448l3-5-7-3zM713 434l5-7-8 0zM656 442l-8 2-3-7zM615 454l-8 3-3-7zM567 476l-7 4-3-7zM475 547l-3-8-7 6zM475 547l-6 6-4-8zM381 802l2 7-8-8zM386 824l-8-9 2 7zM390 837l3 7-9-9zM393 844l3 6-9-8zM417 887l-6-2 4 5zM457 926l-6-2 5 4zM661 433l-8 2 2-8zM612 447l-8 3 2-8zM604 450l2-8-8 3zM572 465l2-9-8 3zM549 478l-8 4 2-9zM519 498l-7 5 1-10zM512 503l-7 6 1-11zM505 509l1-11-7 6zM505 509l-7 5 1-10zM498 514l1-10-7 5zM498 514l-7 6 1-11zM472 539l0-12-6 7zM465 545l-6 7 1-12zM459 552l-5 6-1-11zM413 616l-4 7-2-12zM386 678l-6-5-3 8zM386 678l-3 7-6-4zM383 685l-2 8-6-4zM376 717l-2 8-6-5zM373 733l0 7-6-4zM372 748l0 8-6-5zM376 808l2 7-7-5zM378 815l2 7-7-5zM384 835l3 7-7-4zM390 849l-7-5 3 7zM393 855l-7-4 3 6zM403 873l-7-4 4 6zM411 885l-7-4 4 5zM411 885l4 5-7-4zM420 896l-8-4 5 5zM439 915l6 4-8-3zM445 919l-8-3 6 4zM451 924l-8-4 5 4zM845 463l1-5-6-4zM833 455l-6-3 1-5zM820 449l2-5-7-3zM814 446l1-5-7-3zM807 443l1-5-6-3zM800 440l-7-2 2-5zM786 436l2-6-8-2zM786 436l-7-2 1-6zM779 434l-7-2 1-5zM772 432l1-5-7-2zM764 431l2-6-8-1zM749 429l-8-1 2-6zM741 428l2-6-8-1zM734 428l1-7-7 0zM734 428l-8-1 2-6zM694 428l-8 1 2-7zM834 450l-6-3 3-3zM720 421l-8 0-3-7zM598 445l-3-7-8 3zM550 468l-7 5-3-7zM453 547l-5 7-4-8zM403 619l-4-8-4 7zM367 781l1 8-7-8zM363 712l-1 8-6-7zM368 643l-3 8-3-10zM351 783l1 7-7-10zM359 818l-7-9 2 7zM367 838l3 6-8-8zM368 848l3 6-6-6zM368 611l-4 8-3-8zM350 816l2 7-6-7zM361 842l-7-7 4 6zM338 682l-4-9-2 8zM334 673l-2 8-4-5zM327 720l0 8-4-5zM327 728l0 8-4-5zM354 840l-5-5 3 6zM358 846l-6-5 4 6zM361 852l-5-5 4 6zM338 637l-4-7-2 8zM333 653l-2 8-4-8zM327 775l2 7-5-7zM349 835l-6-6 4 6zM350 591l-3 7-3-7zM347 598l-4 8-2-8zM329 645l-3-8-2 8zM325 661l-1 8-4-8zM319 700l0 8-4-8zM350 841l4 6-6-7zM315 738l0 8-4-9zM352 575l-2-8-4 7zM346 574l-1-9-4 8zM339 590l-4 7-2-8zM311 737l1 8-5-9zM308 683l-1 7-4-4zM321 793l2 6-3-4zM322 801l-5-9 3 7zM300 676l-2-8-1 8zM303 744l-4-7 1 7zM303 744l1 7-4-7zM310 772l-4-7 2 7zM316 582l-3 7-1-9zM298 644l-2 8-1-9zM300 619l-2 8-1-11zM320 553l-1-7-4 8zM304 592l-1-7-3 8zM290 655l-2-7-1 7zM289 663l-2-8 0 8zM305 562l-3 7 1-10zM302 569l-3 8 1-10zM743 344l-7-3-2-1zM736 341l-2-1-7-3zM729 338l-2-1-7-2zM722 336l-2-1-7-3zM722 336l-7-3-2-1zM715 333l-2-1-7-2zM715 333l-7-2-2-1zM686 326l-2-1-7-2zM679 325l-2-2-8-1zM663 323l-7-1-2-1zM648 322l-2-2-8 0zM648 322l-8 0-2-2zM640 322l-2-2-8 0zM632 322l-8 0-2-2zM624 322l-8 1-2-2zM616 323l-8 1-2-3zM599 325l-8 1-1-3zM575 329l-1-3-9 2zM567 331l-2-3-8 2zM558 333l-8 2-1-3zM550 335l-8 3-1-3zM534 340l-8 3-1-3zM526 343l-8 4-2-3zM493 357l-7 4-1-3zM486 361l-1-3-8 4zM470 370l-1-4-8 5zM462 374l-1-3-7 5zM455 379l-1-3-8 4zM447 384l-1-4-7 5zM447 384l-7 5-1-4zM425 400l-7 5-1-3zM418 405l-7 6-1-4zM378 442l-1-4-6 6zM372 448l-1-4-6 7zM361 462l-1-4-6 7zM361 462l-6 7-1-4zM355 469l-5 7-1-4zM350 476l-6 7-1-4zM344 483l-5 7-1-4zM339 490l-1-4-5 7zM334 498l-4 7-1-4zM330 505l-1-4-5 7zM330 505l-5 8-1-5zM325 513l-4 7-1-4zM321 520l-4 8-1-5zM306 551l-1-5-3 8zM306 551l-3 8-1-5zM303 559l-1-5-3 8zM303 559l-3 8-1-5zM297 574l-1-4-3 8zM290 598l-1-5-2 8zM290 598l-2 8-1-5zM288 606l-1-5-2 8zM285 622l-1-5-2 8zM283 637l-1 8-1-5zM281 661l0 7-1-5zM282 683l-1-5 0 8zM282 683l0 8-1-5zM282 691l-1-5 1 7zM284 706l2 7-1-5zM287 720l-2-12 1 7zM287 720l2 7-3-12zM684 325l0-1-8-2zM541 335l-8 3-1-3zM477 362l-1-3-7 4zM353 461l-5 7 2-8zM315 519l1-8-4 8zM664 319l-8-1-2-1zM662 319l-4-1-7-1zM327 485l1-6-4 7zM502 330l-8 3 5-2z"/>
<path fill="#0000eb" d="M511 580l-6 6-5-7zM430 689l-3 8-4-12zM439 880l4 6-9-4zM846 501l-7-4 4-5zM792 478l-7-2 5-6zM486 582l-3-9-6 7zM459 617l-5 7-4-9zM445 639l-4-9-5 8zM408 809l-8-8 1 7zM399 755l0 8-7-9zM399 763l-1 7-6-8zM450 909l5 4-6-1zM751 457l4-7-7-1zM703 457l-8 1 5-8zM687 459l5-8-9 1zM536 525l-7 5-3-7zM460 601l-5 7-4-8zM555 502l0-10-7 5zM519 528l0-10-7 5zM505 540l-7 6 0-11zM498 546l0-11-7 6zM468 579l-1-12-6 7zM441 614l-4 8-2-12zM424 644l-2-12-4 8zM391 769l1 8-7-5zM415 868l-8-5 3 6zM434 897l-8-5 4 6zM800 459l0-6-7-2zM634 464l1-8-8 2zM845 474l4-3-6-4zM724 441l-8 0 5-7zM586 475l-3-7-8 4zM526 512l-4-7-7 6zM414 647l-4 8-5-8zM410 655l-3 8-5-8zM407 663l-5-8-3 8zM396 694l-2 8-6-8zM388 726l-5-8-2 8zM387 733l-1 8-6-7zM445 913l-10-5 5 4zM456 922l5 4-10-5zM837 463l2-4-6-4zM824 456l3-4-7-3zM817 453l3-4-6-3zM817 453l-6-2 3-5zM797 445l3-5-7-2zM797 445l-7-2 3-5zM783 441l3-5-7-2zM760 437l4-6-7-1zM753 436l-8-1 4-6zM737 435l4-7-7 0zM697 435l5-7-8 0zM689 436l5-8-8 1zM689 436l-8 1 5-8zM681 437l5-8-9 1zM673 439l-8 1 4-8zM656 442l-3-7-8 2zM640 446l-8 3-4-7zM624 451l-4-7-8 3zM624 451l-9 3-3-7zM599 461l-3-7-8 3zM599 461l-8 3-3-7zM575 472l-8 4-3-7zM567 476l-3-7-7 4zM552 485l-3-7-8 4zM530 500l-4-8-7 6zM515 511l-3-8-7 6zM463 560l-4-8-5 6zM451 573l-3-8-6 7zM451 573l-5 7-4-8zM446 580l-6 8-3-9zM435 595l-3-9-5 8zM430 602l-3-8-5 7zM426 609l-4-8-5 7zM417 624l-4-8-4 7zM405 647l-4-8-3 7zM402 655l-4-9-4 8zM399 663l-5-9-3 8zM390 687l-4-9-3 7zM390 687l-2 7-5-9zM388 694l-2 8-5-9zM386 702l-5-9-2 8zM381 726l-1 8-6-9zM380 734l-6-9-1 8zM378 757l-6-9 0 8zM378 765l-6-9 0 7zM378 765l0 7-6-9zM378 772l-6-9 0 8zM379 787l1 8-7-9zM380 795l1 7-7-9zM383 809l-8-8 1 7zM383 809l1 8-8-9zM421 892l-6-2 5 6zM426 898l-6-2 4 5zM426 898l4 5-6-2zM440 912l-6-2 5 5zM620 444l-8 3 2-8zM604 450l-8 4 2-9zM427 594l-1-12-5 7zM391 662l-3 8-6-5zM388 670l-2 8-6-5zM381 693l-2 8-6-5zM377 709l-1 8-6-5zM373 733l-6-5 0 8zM372 778l1 8-6-5zM429 906l5 4-7-3zM451 924l5 4-8-4zM845 463l-6-4 1-5zM793 438l-7-2 2-6zM513 493l-7 5-3-7zM375 824l-7-7 2 7zM378 831l2 7-8-8zM363 682l-5-7-2 8zM354 745l0 7-6-7zM353 797l-6-9 1 7zM352 673l-2 7-5-6zM338 721l-5-8 0 8zM337 752l1 7-5-8zM361 611l-3-8-4 8zM348 643l-2 7-4-8zM338 682l-2 8-4-9zM332 729l0 7-5-8zM340 795l1 7-6-8zM349 822l2 7-6-8zM330 765l1 8-5-5zM345 821l-5-5 3 7zM353 598l-3 8-3-8zM343 621l-3 8-3-7zM337 810l3 6-6-6zM340 614l-3-8-3 8zM327 653l-2 8-3-8zM319 746l-4-8 0 8zM334 810l-5-8 2 7zM329 802l-6-8 3 7zM341 598l-2-8-4 7zM329 630l-3-9-2 8zM335 597l-3 8-2-9zM321 787l2 7-5-8zM319 628l-2 8-4-5zM326 806l3 6-4-4zM308 655l-2 7-2-9zM322 801l3 7-5-9zM330 817l4 6-5-6zM302 737l1 7-4-7zM320 799l3 6-4-7zM299 737l1 7-3-8zM300 744l-3-8 1 7zM319 574l0-9-4 7zM319 574l-3 8-1-10zM309 588l-3 8 1-12zM295 624l-2 7-1-7zM291 614l-2 8-1-5zM287 638l-2-6-1 8zM289 721l-2-5 1 7zM292 736l2 7-2-6zM300 583l-1-6-3 8zM305 562l1-11-3 8zM290 609l0-11-2 8zM284 640l-1 8 0-11zM736 341l-7-3-2-1zM729 338l-7-2-2-1zM701 329l-2-1-7-2zM694 328l-2-2-8-1zM671 324l-2-2-7-1zM663 323l-1-2-8 0zM624 322l-2-2-8 1zM616 323l-2-2-8 0zM608 324l-2-3-8 1zM608 324l-9 1-1-3zM599 325l-1-3-8 1zM558 333l-1-3-8 2zM550 335l-1-3-8 3zM542 338l-1-3-8 3zM534 340l-1-2-8 2zM526 343l-1-3-9 4zM501 353l-1-3-8 4zM501 353l-8 4-1-3zM493 357l-1-3-7 4zM478 365l-1-3-8 4zM440 389l-1-4-8 6zM418 405l-1-3-7 5zM404 417l-1-4-6 6zM391 429l-1-4-6 6zM366 455l-5 7-1-4zM344 483l-1-4-5 7zM334 498l-1-5-4 8zM325 513l-1-5-4 8zM317 528l-1-5-4 8zM313 535l-1-4-4 8zM297 574l-3 8-1-4zM294 582l-1-4-2 7zM288 606l-2 8-1-5zM285 622l-1 8-2-5zM283 637l-2-4 0 7zM282 645l-1-5-1 8zM282 691l1 7-1-5zM283 698l-1-5 1 8zM289 727l2 7-3-12zM281 640l-1 8 0-12zM280 656l0 7-1-11zM281 686l1 7-2-11zM638 320l-8 0 0-2zM549 332l0-2-8 2zM549 332l-8 3 0-3zM431 391l-7 5 0-4zM424 396l0-4-7 6zM390 425l-6 6-1-3zM371 444l-6 7 0-4zM329 501l-1-4-5 7zM302 554l-3 8-2-4zM291 585l-2 8 1-11zM532 335l5-4-8 2zM301 550l-4 8 1-8zM281 621l0-9-1 8zM321 504l2-9-4 7zM633 316l-8 0-2-1zM543 327l-1-2-8 2zM623 315l-3-1-8 0zM364 436l3-6-6 6zM351 442l3-6-6 7zM510 328l5-2-8 2z"/>
<path fill="#0000f5" d="M440 711l-3 8-6-7zM420 782l0 8-7-7zM727 479l4-8-8 0zM574 529l-5-7-7 5zM472 628l-6-7-4 7zM418 728l-1 8-7-4zM415 744l-1 8-7-4zM415 813l1 7-7-4zM777 475l6-6-8-2zM608 501l-8 3-1-8zM576 508l-2-8-8 5zM546 528l-3-8-7 5zM532 539l-7 6-3-9zM454 624l-5 8-4-9zM433 662l-4 8-4-9zM420 693l-2 8-6-9zM418 701l-3 8-5-9zM406 756l0 7-7-8zM431 876l-10-7 4 6zM408 708l-6-9-2 8zM415 856l3 7-9-8zM460 918l6 5-7-2zM695 458l5-8-8 1zM670 462l5-9-8 2zM629 474l-8 3-3-7zM581 496l-7 4-4-7zM551 514l-8 6-3-8zM543 520l-3-8-7 5zM471 587l-5 7-4-8zM421 668l-3 8-5-8zM412 692l-2 8-5-9zM547 507l1-10-8 5zM512 534l-7 6 0-11zM505 540l0-11-7 6zM446 607l-1-12-5 7zM392 792l-6-5 0 8zM394 807l-7-5 1 7zM470 930l6 4-9-4zM857 489l0-7-6-4zM857 489l-6-4 0-7zM851 485l-5-4-1-7zM846 481l-7-4 0-6zM700 450l0-8-8 1zM610 473l-8 4 0-9zM586 484l-8 4 1-9zM756 443l4-6-7-1zM732 441l5-6-8-1zM684 444l-8 2-3-7zM659 449l-3-7-8 2zM643 453l-3-7-8 3zM619 461l-9 3-3-7zM563 488l-3-8-8 5zM512 523l-4-7-7 6zM479 554l-6 7-4-8zM461 574l-4-7-6 6zM455 581l-4-8-5 7zM435 610l-5 7-4-8zM387 733l-6-7-1 8zM385 757l-6-8-1 8zM387 802l1 7-7-7zM388 809l-7-7 2 7zM404 857l-8-7 3 7zM426 892l4 6-9-6zM430 898l5 5-9-5zM849 471l2-4-6-4zM843 467l2-4-6-4zM745 435l-8 0 4-7zM729 434l-8 0 5-7zM705 435l-8 0 5-7zM648 444l-3-7-8 2zM632 449l-4-7-8 2zM575 472l-3-7-8 4zM552 485l-8 5-3-8zM537 495l-3-8-8 5zM522 505l-7 6-3-8zM508 516l-3-7-7 5zM508 516l-7 6-3-8zM488 534l-7 6-3-8zM469 553l-4-8-6 7zM469 553l-6 7-4-8zM463 560l-6 7-3-9zM457 567l-3-9-6 7zM457 567l-6 6-3-8zM435 595l-5 7-3-8zM417 624l-4 8-4-9zM386 702l-2 8-5-9zM383 718l-2 8-5-9zM379 742l-6-9 0 7zM379 780l0 7-7-9zM384 817l2 7-8-9zM386 824l2 6-8-8zM388 830l-8-8 2 7zM388 830l2 7-8-8zM390 837l-8-8 2 6zM399 857l3 6-9-8zM413 881l-6-2 4 6zM413 881l4 6-6-2zM421 892l5 6-6-2zM430 903l-6-2 5 5zM457 926l6 4-7-2zM526 492l-7 6 1-11zM376 717l-6-5-2 8zM372 756l0 7-6-4zM380 822l-7-5 2 7zM669 432l2-8-8 2zM370 712l-2 8-5-8zM375 837l-7-6 3 7zM362 720l-6-7-1 8zM356 713l-1 8-5-7zM358 797l-6-7 1 7zM365 651l-2 8-4-10zM350 714l-1 8-5-10zM348 737l0 8-5-10zM343 735l-1 8-5-7zM343 766l-5-7 1 7zM339 713l-5-8-1 8zM337 729l0 7-5-7zM338 759l-5-8 0 8zM339 766l-6-7 1 7zM346 650l-3 8-3-8zM342 642l-4-5-3 8zM342 642l-2 8-5-5zM328 751l-5-5 1 7zM333 653l-4-8-2 8zM323 731l0 7-5-7zM323 746l1 7-5-7zM325 760l1 8-5-7zM332 796l3 7-6-7zM335 803l2 7-5-7zM324 669l-4-8-1 8zM322 677l-1 8-4-8zM315 746l-4-9 1 8zM310 715l-4-9 0 8zM306 662l-1 8-3-9zM317 788l-5-9 2 7zM325 808l-5-9 3 6zM301 730l1 7-4-8zM301 645l-2-8-1 7zM313 589l-1-9-3 8zM291 682l-2-12-1 8zM298 751l2 7-3-7zM292 624l-1-10-2 8zM509 350l-1-3-8 3zM425 400l-1-4-7 6zM411 411l-1-4-7 6zM398 423l-1-4-7 6zM385 435l-1-4-7 7zM366 455l-1-4-5 7zM355 469l-1-4-5 7zM309 543l-1-4-3 7zM300 567l-1-5-3 8zM286 614l-1-5-1 8zM281 668l-1-5 0 8zM281 676l-1-5 1 7zM282 625l-1 8 0-12zM281 633l0-12-1 8zM281 633l0 7-1-11zM280 656l-1-12 0 8zM280 663l0 8-1-12zM281 678l0 8-1-12zM283 701l2 7-3-11zM720 335l-7-3-1 0zM706 330l-7-2-1-1zM692 326l-1-1-7-1zM692 326l-8-1 0-1zM677 323l-8-1 0-1zM669 322l0-1-8-1zM654 321l0-2-8 0zM654 321l-8-1 0-1zM638 320l0-2-8 0zM630 320l-8 0 0-2zM622 320l-8 1 0-2zM614 321l-8 0 0-2zM606 321l0-2-8 1zM598 322l-8 1 0-2zM574 326l-9 2 0-2zM565 328l0-2-8 2zM557 330l-8 2 0-2zM541 335l0-3-9 3zM533 338l-1-3-8 3zM533 338l-8 2-1-2zM525 340l-1-2-8 3zM525 340l-9 4 0-3zM516 344l0-3-8 3zM516 344l-8 3 0-3zM500 350l-8 4 0-3zM485 358l-8 4-1-3zM477 362l-8 4 0-3zM461 371l-7 5-1-4zM439 385l-1-3-7 5zM439 385l-8 6 0-4zM431 391l0-4-7 5zM417 402l-7 5 0-3zM410 407l-7 6 0-4zM403 413l-6 6-1-4zM397 419l-7 6-1-4zM377 438l-6 6 0-3zM371 444l0-3-6 6zM365 451l-5 7-1-4zM349 472l-1-4-6 7zM338 486l-5 7-1-4zM324 508l-4 8-1-4zM320 516l-4 7-1-4zM312 531l-4 8-1-4zM308 539l-3 7-1-4zM305 546l-1-4-3 8zM285 609l-1 8 0-12zM705 330l-7-3-4-1zM280 682l1 7-1-8zM374 433l4-8-7 7zM303 524l-3 8 1-7zM500 332l-9 3 3-2zM535 321l5-1-9 2zM404 382l2-2-7 6z"/>
<path fill="#0000ff" d="M675 494l3-9-8 2zM499 606l-6-6-5 6zM433 704l-2 8-6-7zM420 775l-7-7 0 7zM796 486l-7-1 3-7zM782 483l3-7-8-1zM711 480l-8 1 3-9zM687 484l3-9-8 1zM524 567l-6 6-5-7zM418 827l2 7-8-4zM443 886l4 6-9-4zM456 903l-9-4 4 5zM857 509l-5-4 3-5zM813 485l5-5-7-3zM747 471l5-7-7 0zM625 493l-9 4-1-8zM442 893l5 6-11-6zM849 496l-6-4 6-3zM804 474l-1-7-7-2zM721 464l-8 0-2-8zM647 477l-8 2-1-8zM615 489l-8 3-2-8zM576 508l-8 5-2-8zM414 837l2 7-8-8zM477 580l-6 7-3-8zM460 601l-4-8-5 7zM492 552l-1-11-6 7zM398 715l-6-5-2 8zM394 738l-7-5-1 8zM412 862l-8-5 3 6zM422 880l4 6-8-5zM449 912l-9-4 5 5zM778 454l0-7-7-2zM763 451l-8-1 1-7zM675 453l-8 2 1-8zM578 488l1-9-8 4zM827 464l-7-3 4-5zM807 455l4-4-7-3zM800 453l-7-2 4-6zM793 451l4-6-7-2zM771 445l-8-1 5-6zM748 442l-8 0 5-7zM740 442l-8-1 5-6zM732 441l-8 0 5-7zM716 441l5-7-8 0zM708 442l-8 0 5-7zM692 443l5-8-8 1zM692 443l-8 1-3-7zM643 453l-8 3-3-7zM635 456l-3-7-8 2zM619 461l-4-7-8 3zM610 464l-3-7-8 4zM602 468l-3-7-8 3zM548 497l-4-7-7 5zM548 497l-8 5-3-7zM540 502l-3-7-7 5zM540 502l-7 5-3-7zM533 507l-3-7-8 5zM519 518l-4-7-7 5zM505 529l-4-7-7 6zM498 535l-4-7-6 6zM491 541l-6 7-4-8zM485 548l-4-8-6 7zM485 548l-6 6-4-7zM440 602l-5-7-5 7zM430 617l-4-8-5 8zM430 617l-4 8-5-8zM426 625l-5-8-4 7zM422 632l-5-8-4 8zM407 663l-3 8-5-8zM398 686l-2 8-6-7zM390 718l-6-8-1 8zM385 749l-6-7 0 7zM385 764l-7-7 0 8zM386 787l-7-7 0 7zM387 802l-7-7 1 7zM390 816l-7-7 1 8zM401 850l-8-6 3 6zM407 863l3 6-8-6zM422 887l4 5-9-5zM440 908l-10-5 5 5zM456 922l-10-5 5 4zM461 926l6 4-10-4zM824 456l-7-3 3-4zM560 480l-3-7-8 5zM515 511l-7 5-3-7zM440 588l-3-9-5 7zM440 588l-5 7-3-9zM426 609l-5 8-4-9zM402 655l-3 8-5-9zM379 742l0 7-6-9zM380 795l-7-9 1 7zM399 857l-9-8 3 6zM402 863l3 6-9-8zM405 869l4 6-10-8zM413 881l-10-8 4 6zM446 917l-7-2 6 4zM451 921l6 5-6-2zM645 437l-8 2 1-8zM378 815l-7-5 2 7zM367 781l-7-8 1 8zM369 796l1 7-7-8zM371 810l2 7-7-7zM339 705l-4-7-1 7zM339 705l0 8-5-8zM337 736l-5-7 0 7zM337 736l0 8-5-8zM337 752l-5-8 1 7zM340 774l1 7-6-7zM327 743l-4-5 0 8zM342 815l-5-5 3 6zM331 661l-2 7-4-7zM337 810l-5-7 2 7zM325 783l-5-8 2 7zM320 775l-5-8 2 7zM331 622l-2-9-3 8zM310 699l0 8-4-9zM335 820l-6-8 3 6zM323 799l-3-4 2 6zM303 724l1 8-4-10zM311 621l-2 8-2-8zM299 692l-3-8 0 8zM299 715l-3-8 1 8zM304 751l-4-7 2 7zM312 779l2 7-4-7zM309 613l-1-8-3 8zM300 653l-1 8-3-9zM304 758l-4-8 2 7zM293 691l-2-9 0 8zM293 691l0 8-2-9zM297 736l1 7-3-9zM306 596l-2 8 0-12zM295 744l-3-8 2 7zM284 677l-2-6 1 8zM290 729l2 7-2-6zM303 575l-3 8-1-6zM292 737l2 7-3-10zM281 661l-1-5 0 7zM281 676l1 7-1-5zM284 617l-2 8 1-12zM282 625l1-12-2 8zM281 640l-1-11 0 7zM280 648l0 8-1-12zM280 671l-1-12 0 8zM280 671l1 7-2-11zM281 678l-2-11 1 7zM281 686l-1-12 0 8zM282 693l-2-11 1 7zM282 693l1 8-2-12zM285 708l-3-11 2 7zM285 708l1 7-2-11zM727 337l-7-2-1-1zM713 332l-1 0-7-2zM713 332l-7-2-1 0zM699 328l-7-2-1-1zM684 325l-7-2-1-1zM677 323l-1-1-7-1zM669 322l-7-1-1-1zM662 321l-1-1-7-1zM662 321l-8 0 0-2zM646 320l-8 0 0-2zM630 320l0-2-8 0zM606 321l-8 1 0-2zM598 322l0-2-8 1zM590 323l0-2-8 1zM590 323l-8 2 0-3zM582 325l-8 1-1-2zM557 330l0-2-8 2zM508 347l0-3-8 3zM508 347l-8 3 0-3zM500 350l0-3-8 4zM492 354l0-3-8 4zM485 358l-1-3-8 4zM469 366l0-3-8 5zM469 366l-8 5 0-3zM454 376l-1-4-7 5zM454 376l-8 4 0-3zM446 380l0-3-8 5zM446 380l-7 5-1-3zM424 396l-7 6 0-4zM417 402l0-4-7 6zM410 407l0-3-7 5zM403 413l0-4-7 6zM390 425l-1-4-6 7zM384 431l-1-3-6 6zM384 431l-7 7 0-4zM377 438l0-4-6 7zM360 458l-1-4-6 7zM360 458l-6 7-1-4zM354 465l-1-4-5 7zM354 465l-5 7-1-4zM343 479l-1-4-5 7zM343 479l-5 7-1-4zM338 486l-1-4-5 7zM333 493l-4 8-1-4zM329 501l-5 7-1-4zM324 508l-1-4-4 8zM320 516l-1-4-4 7zM316 523l-1-4-4 8zM316 523l-4 8-1-4zM312 531l-1-4-4 8zM308 539l-1-4-3 7zM305 546l-3 8-1-4zM296 570l-3 8 2-12zM293 578l2-12-3 8zM293 578l-2 7 1-11zM289 593l-2 8 1-12zM287 601l-2 8 1-12zM676 322l-7-1-4-1zM582 322l-9 2 5-3zM532 335l-8 3 5-5zM469 363l-8 5 4-6zM446 377l-8 5 4-6zM353 461l3-8-6 7zM311 527l-4 8 2-9zM307 535l2-9-4 8zM290 582l0-9-2 8zM290 582l-2 7 0-8zM286 597l-2 8 0-8zM280 629l0 7-1-8zM280 636l-1 8 0-8zM279 659l-1-8 0 8zM280 682l-1-8 1 7zM335 481l-5 8 2-9zM463 360l-8 4-1-2zM406 393l-7 6 4-6zM430 370l5-5-7 5zM284 579l1-7-2 8zM541 321l-2 0-8 2zM296 533l-2 7 3-10zM315 491l-4 8 1-4zM477 339l-8 4 4-2z"/>
<path fill="#0800ff" d="M444 846l2 7-9-6zM488 917l-11-5 5 5zM808 497l2-6-7-2zM786 492l3-7-7-2zM724 487l3-8-8 0zM634 508l-8 3 3-10zM543 562l-5-7-7 6zM435 840l-9-6 2 7zM463 897l5 5-11-5zM436 696l-6-7-3 8zM431 712l-6-7-3 8zM421 759l-7-7 0 8zM420 790l-7-7 0 8zM629 501l4-11-8 3zM547 537l-1-9-7 5zM415 813l-7-4 1 7zM460 908l5 5-9-4zM723 471l-2-7-8 0zM466 919l-11-6 5 5zM483 932l6 4-12-5zM797 472l-7-2-1-7zM705 465l-8 1-2-8zM656 474l-2-8-8 3zM561 518l-8 5-2-9zM539 533l-7 6-3-9zM525 545l-3-9-7 6zM505 563l-3-9-7 6zM505 563l-7 6-3-9zM469 603l-3-9-6 7zM459 617l-4-9-5 7zM423 685l-3 8-5-9zM418 701l-6-9-2 8zM411 724l-5-8-2 8zM407 801l-8-8 1 8zM455 913l5 5-6-1zM843 485l3-4-7-4zM774 460l4-6-7-2zM529 530l-7 6-3-8zM508 548l-6 6-4-8zM489 567l-4-8-6 6zM415 684l-3 8-5-9zM563 497l0-9-8 4zM540 512l0-10-7 5zM533 517l0-10-7 5zM479 565l0-11-6 7zM473 572l-5 7-1-12zM424 644l-4 8-6-5zM410 675l-3 8-6-5zM400 707l-6-5-2 8zM393 746l-7-5-1 8zM392 754l0 8-7-5zM392 777l0 8-7-5zM399 828l2 7-7-5zM409 855l3 7-8-5zM415 868l3 6-8-5zM426 886l4 5-8-4zM434 897l5 5-9-4zM439 902l-9-4 5 5zM454 917l-9-4 5 4zM470 930l-9-4 6 4zM851 485l0-7-6-4zM839 477l0-6-6-4zM820 467l0-6-7-3zM814 464l-1-6-6-3zM807 462l0-7-7-2zM732 448l-8 0 0-7zM708 449l0-7-8 0zM667 455l1-8-9 2zM602 477l-8 3 0-9zM839 471l-6-4 4-4zM813 458l4-5-6-2zM813 458l-6-3 4-4zM793 451l-8-2 5-6zM778 447l5-6-8-1zM676 446l-8 1-3-7zM651 451l-8 2-3-7zM594 471l-3-7-8 4zM594 471l-8 4-3-7zM579 479l-4-7-8 4zM571 483l-4-7-7 4zM526 512l-7 6-4-7zM519 518l-7 5-4-7zM491 541l-3-7-7 6zM473 561l-4-8-6 7zM461 574l-6 7-4-8zM435 610l-5-8-4 7zM426 625l-4 7-5-8zM401 678l-5-7-3 8zM396 694l-6-7-2 7zM390 718l-2 8-5-8zM388 726l-1 7-6-7zM385 757l0 7-7-7zM385 772l-7-7 0 7zM385 780l1 7-7-7zM386 787l0 8-7-8zM388 809l2 7-7-7zM392 823l-8-6 2 7zM394 830l-8-6 2 6zM396 837l2 7-8-7zM418 881l-9-6 4 6zM435 903l5 5-10-5zM811 451l-7-3 3-5zM790 443l-7-2 3-5zM760 437l-7-1 4-6zM665 440l-9 2 5-9zM591 464l-3-7-8 4zM583 468l-3-7-8 4zM399 663l-3 8-5-9zM383 718l-6-9-1 8zM379 780l-7-9 0 7zM370 803l-7-8 1 8zM345 674l-4-8-2 8zM345 674l-1 8-5-8zM344 795l2 7-6-7zM346 802l2 7-7-7zM343 658l-2 8-4-8zM333 751l-6-8 1 8zM340 795l-6-8 1 7zM329 796l-5-7 2 6zM314 715l0 8-4-8zM314 668l-3-9-1 8zM314 668l-1 8-3-9zM310 730l-4-9 1 8zM313 651l-2 8-3-4zM308 683l-4-5-1 8zM307 736l-3-4 1 7zM308 744l-3-5 1 7zM308 655l-3-10-1 8zM307 753l-4-9 1 7zM312 775l-4-10 2 7zM301 645l-1 8-2-9zM298 729l-3-8 1 7zM298 644l-2-9-1 8zM294 714l1 7-3-9zM309 777l2 7-4-8zM300 619l-1-11-2 8zM292 639l-2-7-1 8zM292 624l-2 8-1-10zM288 648l-1 7-1-9zM291 614l-1-5-2 8zM286 708l-3-10 1 8zM292 737l-3-10 2 7zM280 648l0-12-1 8zM280 663l-1-11 0 7zM283 701l-2-12 1 8zM720 335l-1-1-7-2zM706 330l-1 0-7-3zM646 320l0-1-8-1zM622 320l0-2-8 1zM614 321l0-2-8 0zM574 326l-1-2-8 2zM461 371l0-3-8 4zM397 419l-1-4-7 6zM349 472l-6 7-1-4zM333 493l-1-4-4 8zM302 554l-1-4-4 8zM299 562l-2-4-2 8zM287 601l1-12-2 8zM285 609l1-12-2 8zM284 617l0-12-1 8zM712 332l-7-2-3-2zM691 325l-4-1-7-2zM691 325l-7-1-4-2zM684 324l-8-2-3-1zM669 321l-8-1-4-1zM661 320l-7-1-4-1zM646 319l-4-2-8 0zM638 318l-8 0-4-1zM614 319l-8 0-4-1zM606 319l-4-1-8 1zM598 320l-8 1-4-1zM590 321l-8 1 4-2zM573 324l5-3-8 2zM565 326l-8 2 4-4zM557 328l4-4-8 2zM557 328l-8 2 4-4zM508 344l5-5-9 3zM508 344l-8 3 4-5zM500 347l4-5-8 4zM492 351l4-5-8 4zM492 351l-8 4 4-5zM484 355l4-5-7 3zM484 355l-8 4 5-6zM476 359l5-6-8 5zM453 372l-7 5 4-6zM438 382l4-6-7 5zM431 387l-7 5 3-6zM424 392l3-6-7 5zM424 392l-7 6 3-7zM417 398l3-7-7 6zM396 415l-7 6 4-7zM389 421l-6 7 3-8zM383 428l-6 6 3-7zM371 441l3-8-7 7zM371 441l-6 6 2-7zM365 447l-6 7 3-8zM348 468l2-8-5 7zM348 468l-6 7 3-8zM342 475l3-8-5 7zM323 504l-4 8 2-8zM319 512l2-8-5 7zM315 519l-4 8 1-8zM304 542l-3 8 1-8zM301 550l1-8-4 8zM297 558l-2 8 0-9zM295 566l-3 8 1-9zM292 574l-2 8 0-9zM288 589l-2 8 0-8zM286 597l0-8-2 8zM284 605l0-8-1 8zM283 613l-2 8 0-9zM281 621l-1 8 0-9zM280 636l-1-8 0 8zM279 644l0 8-1-9zM279 659l0 8-1-8zM280 674l0 8-1-8zM281 689l-1-8 1 7zM702 328l-8-2-1 0zM694 326l-7-2-1 0zM578 321l-2-2-8 2zM570 323l-2-2-8 2zM427 386l6-7-8 5zM399 408l-6 6 4-7zM386 420l-6 7 4-8zM356 453l-6 7 4-8zM325 496l3-9-5 8zM295 557l-2 8 1-9zM279 628l0 8 0-9zM584 318l-1-1-8 1zM568 321l-8 2-1-2zM307 525l-4 8 3-10zM291 564l-2 8 1-10zM289 572l1-10-2 7zM278 658l0-11 0 8zM278 658l1 7-1-10zM306 523l-4 7 1-6zM635 315l-3 0-8-1zM612 314l-4 0-8 0zM555 320l4-2-8 2zM481 345l-8 4 5-4zM300 532l-3 8 1-7zM285 579l-2 8 1-7zM608 314l-2-1-8 1zM559 318l-8 2-2-1zM470 349l-8 4-2-1zM335 465l-5 7 4-8zM312 502l-3 8 3-9zM295 539l-3 8 2-7zM285 571l2-7-2 8zM598 314l-2 0-8 0zM564 316l1 0-8 1zM451 356l-8 4 1-2zM435 365l-7 5 1-2zM436 363l2-3-7 5zM315 491l1-4-4 8zM292 545l1-4-2 8zM462 347l4-2-8 4zM438 360l5-3-8 5zM320 480l3-5-5 7zM466 345l-8 4 3-2zM360 425l2-3-6 7zM461 347l-8 4 4-2zM430 364l-7 5 3-2zM394 391l-7 6 3-3zM368 415l2-3-6 7zM390 394l2-2-6 6z"/>
<path fill="#1000ff" d="M499 619l-6-6-5 7zM436 811l-8-7 1 7zM494 922l-7 0 6 4zM651 502l3-10-8 2zM456 672l-6-7-4 8zM448 687l-3 8-6-7zM433 734l-1 8-7-6zM432 742l-2 8-7-6zM428 766l-7-7 0 8zM439 867l-9-6 3 7zM637 497l4-10-8 3zM613 508l3-11-8 4zM613 508l-8 3 3-10zM531 561l-7 6-5-7zM467 635l-5 7-5-7zM569 522l-7 5-1-9zM500 579l-6 7-2-11zM477 606l-2-10-6 7zM437 673l-4 8-4-11zM422 713l-2 8-7-4zM439 880l-8-4 3 6zM785 476l-8-1 6-6zM633 490l-2-8-8 3zM600 504l-1-8-8 4zM456 909l-11-6 5 6zM713 464l-2-8-8 1zM411 724l-1 8-6-8zM406 763l0 8-7-8zM398 778l-7-9 1 8zM402 815l-8-8 2 7zM425 875l3 6-10-7zM441 898l4 5-6-1zM796 465l4-6-7-2zM727 456l5-8-8 0zM551 514l-4-7-7 5zM529 530l-3-7-7 5zM515 542l-7 6-3-8zM489 567l-6 6-4-8zM425 661l-5-9-3 8zM526 523l-7 5 0-10zM519 528l-7 6 0-11zM462 586l-1-12-6 7zM432 629l-4 8-2-12zM417 660l-4 8-6-5zM405 691l-7-5-2 8zM398 715l-2 8-6-5zM395 730l-1 8-7-5zM394 738l-1 8-7-5zM392 777l-7-5 0 8zM393 799l-7-4 1 7zM394 807l2 7-8-5zM396 814l-8-5 2 7zM396 814l1 7-7-5zM397 821l-7-5 2 7zM397 821l2 7-7-5zM401 835l-7-5 2 7zM401 835l2 7-7-5zM403 842l3 7-8-5zM406 849l3 6-8-5zM409 855l-8-5 3 7zM418 874l-8-5 4 6zM430 891l4 6-8-5zM444 907l5 5-9-4zM449 912l5 5-9-4zM833 473l0-6-6-3zM814 464l-7-2 0-7zM807 462l-7-3 0-6zM800 459l-7-2 0-6zM785 455l-7-1 0-7zM740 449l-8-1 0-7zM732 448l0-7-8 0zM683 452l1-8-8 2zM667 455l-8 2 0-8zM659 457l0-8-8 2zM642 461l1-8-8 3zM626 467l-8 3 1-9zM610 473l0-9-8 4zM845 474l-6-3 4-4zM807 455l-7-2 4-5zM785 449l-7-2 5-6zM756 443l-8-1 5-6zM700 442l-8 1 5-8zM668 447l-9 2-3-7zM586 475l-7 4-4-7zM563 488l-8 4-3-7zM512 523l-7 6-4-7zM467 567l-4-7-6 7zM392 710l-2 8-6-8zM385 764l0 8-7-7zM386 795l1 7-7-7zM390 816l2 7-8-6zM404 857l3 6-8-6zM410 869l4 6-9-6zM435 903l-9-5 4 5zM445 913l5 4-10-5zM450 917l6 5-10-5zM461 926l-10-5 6 5zM830 460l-6-4 3-4zM775 440l-7-2 4-6zM345 704l-4-6-2 7zM342 743l1 8-6-7zM347 788l1 7-6-7zM344 682l-5-8-1 8zM342 690l-4-8-2 8zM337 744l-5-8 0 8zM332 744l-5-8 0 7zM331 773l1 7-5-5zM328 676l-2 8-4-7zM332 638l-3 7-3-8zM322 677l-3-8-2 8zM319 708l-1 8-4-8zM319 739l-5-8 1 7zM324 775l-5-8 1 8zM324 645l-2 8-3-8zM304 678l-3-10-1 8zM303 717l0 7-4-9zM308 765l-4-7 2 7zM310 772l2 7-4-7zM296 692l0 7-3-8zM302 751l-4-8 2 7zM305 613l-1-9-2 8zM296 652l-1-9-2 8zM300 750l-4-9 2 7zM300 755l2 7-4-11zM288 709l1 7-3-9zM287 638l-1 8-2-6zM286 646l-2-6-1 8zM285 692l-2-6 1 8zM287 714l-1-6 1 8zM284 630l-2-5-1 8zM365 451l0-4-6 7zM289 593l1-11-2 7zM705 330l-3-2-8-2zM698 327l-4-1-7-2zM698 327l-7-2-4-1zM684 324l-4-2-7-1zM676 322l-3-1-8-1zM669 321l-4-1-8-1zM661 320l-4-1-7-1zM654 319l-4-1-8-1zM654 319l-8 0-4-2zM646 319l-8-1-4-1zM638 318l-4-1-8 0zM630 318l-4-1-8 0zM630 318l-8 0-4-1zM622 318l-4-1-8 0zM622 318l-8 1-4-2zM614 319l-4-2-8 1zM606 319l-8 1-4-1zM598 320l-4-1-8 1zM582 322l4-2-8 1zM565 326l5-3-9 1zM549 330l4-4-8 2zM541 332l4-4-8 3zM524 338l5-5-8 3zM524 338l-8 3 5-5zM516 341l5-5-8 3zM500 347l-8 4 4-5zM461 368l4-6-8 4zM461 368l-8 4 4-6zM446 377l4-6-8 5zM438 382l-7 5 4-6zM431 387l4-6-8 5zM417 398l-7 6 3-7zM410 404l3-7-7 5zM410 404l-7 5 3-7zM403 409l3-7-7 6zM389 421l4-7-7 6zM377 434l3-7-6 6zM365 447l2-7-5 6zM359 454l3-8-6 7zM359 454l-6 7 3-8zM337 482l3-8-5 7zM337 482l-5 7 3-8zM332 489l3-8-5 8zM332 489l-4 8 2-8zM328 497l2-8-5 7zM328 497l-5 7 2-8zM319 512l-4 7 1-8zM307 535l-3 7 1-8zM304 542l1-8-3 8zM297 558l1-8-3 7zM295 566l0-9-2 8zM284 605l-1 8 0-8zM283 613l0-8-2 7zM279 652l-1-9 0 8zM279 652l0 7-1-8zM279 667l-1-8 1 7zM279 667l1 7-1-8zM280 674l-1-8 0 8zM694 326l-1 0-7-2zM673 321l-2-1-7-1zM673 321l-8-1-1-1zM634 317l-1-1-8 0zM626 317l-8 0-1-1zM618 317l-8 0-1-1zM602 318l-1-1-8 0zM594 319l-1-2-9 1zM570 323l-9 1-1-1zM561 324l-8 2-1-2zM553 326l-1-2-9 3zM537 331l-2-2-8 3zM529 333l-8 3-2-2zM513 339l-2-2-8 4zM496 346l-1-2-8 4zM488 350l-1-2-8 4zM488 350l-7 3-2-1zM481 353l-8 5-2-2zM473 358l-2-2-8 4zM473 358l-8 4-2-2zM465 362l-2-2-8 4zM465 362l-8 4-2-2zM457 366l-2-2-7 5zM457 366l-7 5-2-2zM450 371l-8 5-2-2zM427 386l-7 5 5-7zM420 391l5-7-7 5zM413 397l-7 5 5-7zM406 402l5-7-7 6zM374 433l-7 7 4-8zM367 440l-5 6 3-8zM350 460l4-8-6 7zM350 460l-5 7 3-8zM345 467l3-8-5 7zM330 489l2-9-4 7zM316 511l-4 8 2-9zM309 526l-4 8 2-9zM295 557l2-8-3 7zM288 581l1-9-2 8zM288 581l-2 8 1-9zM283 605l-2 7 0-8zM281 612l0-8-1 8zM280 620l0-8-1 7zM280 620l-1 8 0-9zM279 636l0-9-1 8zM279 636l-1 7 0-8zM279 674l0-9 0 8zM279 674l1 7-1-8zM641 316l-2 0-8-1zM609 316l-2-1-8 0zM560 323l-8 1-2-1zM552 324l-9 3-1-2zM543 327l-8 2-1-2zM487 348l-2-2-7 4zM487 348l-8 4-1-2zM448 369l-1-2-8 5zM440 374l-1-2-7 5zM418 389l-1-2-7 6zM418 389l-7 6-1-2zM411 395l-7 6-1-3zM404 401l-7 6-1-3zM384 419l-1-3-7 7zM371 432l-1-3-6 7zM359 445l-1-3-5 7zM337 473l-5 7 4-10zM323 495l-4 7 3-10zM319 502l3-10-4 8zM319 502l-5 8 4-10zM310 518l-3 7 3-10zM303 533l3-10-4 7zM294 556l-3 8 2-10zM285 588l1-11-2 8zM285 588l-2 8 1-11zM281 604l1-11-1 8zM280 612l1-11-1 8zM279 627l-1 8 0-11zM278 635l0 8 0-11zM647 316l-4 0-8-1zM631 315l-4-1-7 0zM615 315l-3-1-8 0zM615 315l-8 0-3-1zM583 317l4-2-8 1zM559 321l4-2-8 1zM550 323l-8 2 4-3zM542 325l4-3-8 2zM526 330l4-3-8 2zM526 330l-8 3 4-4zM518 333l4-4-8 3zM478 350l3-5-8 4zM470 354l3-5-7 4zM462 358l-8 4 4-4zM447 367l-8 5 3-5zM410 393l-7 5 3-5zM396 404l3-5-7 6zM389 410l-6 6 3-5zM353 449l2-6-6 7zM342 463l-6 7 2-6zM310 515l1-6-4 7zM293 554l-3 8 1-7zM290 562l1-7-2 8zM651 317l-8-1-4-1zM612 314l-8 0-4 0zM604 314l-9 1-3-1zM587 315l-8 1-3 0zM538 324l-8 3 5-3zM506 335l4-3-8 3zM497 338l-8 4 5-4zM481 345l5-4-8 4zM450 362l-8 5 5-5zM392 405l4-6-7 6zM386 411l-7 6 3-6zM379 417l3-6-6 6zM361 436l2-6-6 7zM344 457l2-6-5 7zM344 457l-6 7 3-6zM338 464l-5 7 2-6zM324 486l-5 8 2-7zM319 494l2-7-4 7zM315 501l-4 8 1-7zM300 532l1-7-3 8zM291 555l1-6-2 8zM285 579l0-7-1 8zM281 595l1-7-1 8zM278 626l0 8 0-7zM616 314l-8 0-2-1zM592 314l-2 0-8 1zM592 314l-8 1-2 0zM559 318l-2 0-8 1zM551 320l-2-1-8 2zM543 322l-2-1-8 2zM518 329l-2-1-8 3zM518 329l-8 3-2-1zM502 335l-2-1-8 3zM502 335l-8 3-2-1zM486 341l-2-1-8 4zM462 353l-8 4-1-1zM447 362l-2-1-8 5zM439 367l-2-1-7 4zM431 372l-7 5 6-7zM410 387l-7 6 5-7zM382 411l5-7-6 6zM370 424l5-8-7 6zM346 451l-5 7 4-9zM341 458l4-9-5 7zM321 487l-4 7 3-8zM309 510l3-9-4 7zM301 525l-3 8 3-9zM298 533l-3 8 3-10zM287 564l-2 8 2-9zM284 580l-2 8 2-9zM281 596l1-10-1 8zM280 604l1-10-1 8zM468 348l-2-1-8 5zM453 356l5-4-7 4zM445 361l6-5-8 4zM437 366l6-6-8 5zM415 381l5-6-7 5zM408 386l5-6-7 6zM408 386l-7 6 5-6zM394 398l5-6-7 5zM387 404l-6 6 4-7zM381 410l-6 6 4-6zM362 429l4-7-6 7zM345 449l-5 7 3-6zM340 456l3-6-5 7zM340 456l-6 8 4-7zM325 478l3-7-5 8zM325 478l-5 8 3-7zM316 493l2-7-4 8zM316 493l-4 8 2-7zM301 524l2-7-3 8zM290 555l1-7-2 8zM287 563l2-7-2 8zM284 579l-2 7 1-6zM282 586l1-6-1 8zM282 586l-1 8 1-6zM281 594l-1 8 1-6zM590 314l-8 1-2-1zM574 315l-2 0-8 1zM533 323l-2 0-8 2zM508 331l-1-1-9 3zM500 334l-2-1-8 3zM500 334l-8 3-2-1zM492 337l-8 3-2 0zM333 464l0-3-5 7zM333 464l-5 7 0-3zM303 517l-3 8 3-11zM300 525l-4 8 4-11zM291 548l-2 8 3-11zM289 556l3-11-3 8zM572 315l-8 1 1 0zM556 317l-8 2 1-1zM523 325l1-1-8 2zM515 328l-8 2 1-1zM507 330l-9 3 2-1zM482 340l1-2-8 4zM466 347l1-1-7 4zM458 352l2-2-8 4zM443 360l1-2-8 5zM420 375l-7 5 1-2zM392 397l-7 6 1-2zM385 403l-6 7 1-3zM379 410l1-3-7 6zM565 316l-8 1 2 0zM557 317l2 0-8 1zM549 318l-8 2 2-1zM541 320l2-1-8 2zM524 324l2-1-8 2zM524 324l-8 2 2-1zM508 329l-8 3 2-2zM475 342l3-2-8 4zM475 342l-8 4 3-2zM407 384l2-3-7 5zM400 389l-7 6 2-3zM380 407l1-3-6 6zM367 420l2-4-6 7zM349 440l-5 7 1-4zM333 461l-5 7 2-3zM328 468l2-3-5 7zM319 483l-4 8 1-4zM307 506l-4 8 2-4zM300 522l-3 8 1-4zM297 530l1-4-2 8zM551 318l-3 1-8 1zM543 319l-8 2 5-1zM535 321l-9 2 5-1zM526 323l5-1-8 2zM502 330l5-2-8 3zM454 352l4-3-7 4zM431 365l-8 5 5-4zM416 375l-7 6 4-4zM409 381l4-4-7 5zM357 430l-6 6 3-4zM330 465l-5 7 2-5zM320 480l-4 7 2-5zM316 487l2-5-4 8zM316 487l-4 8 2-5zM308 502l2-4-3 7zM305 510l2-5-4 8zM305 510l-4 8 2-5zM523 324l3-1-9 2zM499 331l2-1-8 3zM482 337l3-1-8 3zM482 337l-8 4 3-2zM458 349l3-2-8 4zM443 357l-8 5 3-2zM378 406l-6 6 2-3zM372 412l2-3-6 6zM360 425l-6 7 2-3zM348 439l-5 7 2-4zM318 482l-4 8 2-4zM509 328l-8 2 4-1zM501 330l-8 3 4-1zM485 336l4-1-8 3zM477 339l4-1-8 3zM469 343l-8 4 4-2zM445 355l4-2-8 4zM423 369l3-2-8 5zM401 385l3-3-7 6zM394 391l3-3-7 6zM374 409l-6 6 2-3zM362 422l-6 7 2-4zM345 442l2-3-5 7zM345 442l-6 8 3-4zM449 353l2-1-7 4zM449 353l-8 4 3-1zM441 357l3-1-8 4zM426 367l-8 5 3-2zM364 419l2-2-6 6zM373 410l-7 7 6-6z"/>
<path fill="#1800ff" d="M443 790l-8-10 0 8zM443 805l-8-9 1 7zM474 892l4 6-8-2zM609 529l1-11-7 4zM593 537l2-10-8 4zM578 547l-7 5 1-11zM563 557l2-11-8 5zM536 580l0-12-6 6zM455 694l-3 8-7-7zM488 917l6 5-7 0zM755 495l-8 0 1-8zM815 500l2-7-7-2zM618 514l-8 4 3-10zM595 527l2-12-7 5zM743 479l-8 0 4-8zM646 494l3-9-8 2zM552 544l-7 6-5-7zM519 560l-1-10-7 6zM420 834l-8-4 2 7zM481 927l-10-4 6 5zM852 505l-6-4 3-5zM792 478l5-6-7-2zM754 472l-7-1 5-7zM698 473l-1-7-9 1zM837 489l6-4-7-3zM745 464l-2-8-8 0zM591 500l-8 4-2-8zM486 582l-6 7-3-9zM437 654l-5-9-4 8zM413 717l-5-9-2 8zM407 748l-6-9-1 8zM402 731l-6-8-1 7zM399 755l-6-9-1 8zM399 793l1 8-8-9zM404 822l-8-8 1 7zM404 822l2 7-9-8zM408 836l-9-8 2 7zM421 869l-9-7 3 6zM432 887l-6-1 4 5zM471 927l-6-1 5 4zM836 482l3-5-6-4zM817 472l3-5-6-3zM810 470l4-6-7-2zM796 465l-7-2 4-6zM781 461l4-6-7-1zM743 456l5-7-8 0zM727 456l-8 0 5-8zM719 456l5-8-8 1zM679 461l-9 1 5-9zM662 464l5-9-8 2zM621 477l-8 4-3-8zM597 488l-8 4-3-8zM589 492l-3-8-8 4zM574 500l-4-7-7 4zM574 500l-8 5-3-8zM566 505l-8 4-3-7zM466 594l-6 7-4-8zM455 608l-4-8-5 7zM441 630l-4-8-5 7zM441 630l-5 8-4-9zM425 661l-4 7-4-8zM578 488l-8 5 1-10zM570 493l1-10-8 5zM570 493l-7 4 0-9zM555 502l-8 5 1-10zM547 507l-7 5 0-10zM533 517l-7 6 0-11zM492 552l-7 7 0-11zM468 579l-6 7-1-12zM456 593l-1-12-5 7zM456 593l-5 7-1-12zM451 600l-5 7-1-12zM441 614l-1-12-5 8zM437 622l-5 7-2-12zM417 660l-7-5-3 8zM410 675l-6-4-3 7zM407 683l-2 8-7-5zM405 691l-3 8-6-5zM402 699l-6-5-2 8zM402 699l-2 8-6-5zM393 746l-1 8-7-5zM392 754l-7-5 0 8zM392 762l-1 7-6-5zM391 769l-6-5 0 8zM392 785l-7-5 1 7zM393 799l1 8-7-5zM403 842l-7-5 2 7zM412 862l3 6-8-5zM422 880l-8-5 4 6zM444 907l-9-4 5 5zM839 477l-6-4 0-6zM778 454l-7-2 0-7zM763 451l0-7-7-1zM748 449l-8 0 0-7zM708 449l-8 1 0-8zM692 451l-9 1 1-8zM683 452l-8 1 1-7zM659 457l-8 2 0-8zM651 459l0-8-8 2zM651 459l-9 2 1-8zM634 464l-8 3 1-9zM618 470l-8 3 0-9zM594 480l0-9-8 4zM833 467l-6-3 3-4zM778 447l-7-2 4-5zM450 588l-5 7-5-7zM418 881l4 6-9-6zM450 917l-10-5 6 5zM467 930l-10-4 6 4zM729 434l5-6-8-1zM342 690l-1 8-5-8zM329 758l1 7-5-5zM323 731l-5-7 0 7zM329 782l-5-7 1 8zM327 653l-3-8-2 8zM325 661l-3-8-2 8zM320 754l1 7-5-8zM327 790l2 6-5-7zM322 653l-3-8-2 7zM317 677l-3-9-1 8zM313 752l-5-8 1 7zM297 676l-1 8-2-8zM295 721l1 7-3-8zM297 616l-2 8-1-8zM289 663l0 7-2-7zM290 716l-2-7 1 7zM285 699l1 8-2-6zM712 332l-3-1-7-3zM549 330l-8 2 4-4zM541 332l-9 3 5-4zM516 341l-8 3 5-5zM476 359l-7 4 4-5zM377 434l-6 7 3-8zM342 475l-5 7 3-8zM323 504l2-8-4 8zM311 527l1-8-3 7zM292 574l1-9-3 8zM288 589l0-8-2 8zM279 644l0-8-1 7zM687 324l-1 0-8-2zM680 322l-2 0-7-2zM680 322l-7-1-2-1zM665 320l-1-1-8-1zM665 320l-8-1-1-1zM657 319l-7-1-2-1zM650 318l-2-1-7-1zM650 318l-8-1-1-1zM642 317l-1-1-8 0zM642 317l-8 0-1-1zM634 317l-8 0-1-1zM626 317l-1-1-8 0zM618 317l-1-1-8 0zM610 317l-1-1-8 1zM610 317l-8 1-1-1zM602 318l-8 1-1-2zM586 320l-2-2-8 1zM586 320l-8 1-2-2zM578 321l-8 2-2-2zM561 324l-1-1-8 1zM545 328l-2-1-8 2zM545 328l-8 3-2-2zM529 333l-2-1-8 2zM504 342l-1-1-8 3zM481 353l-2-1-8 4zM442 376l-2-2-7 5zM442 376l-7 5-2-2zM435 381l-8 5 6-7zM413 397l5-8-7 6zM406 402l-7 6 5-7zM399 408l5-7-7 6zM393 414l-7 6 4-7zM386 420l4-7-6 6zM380 427l4-8-6 6zM380 427l-6 6 4-8zM362 446l3-8-6 7zM362 446l-6 7 3-8zM340 474l3-8-6 7zM335 481l2-8-5 7zM325 496l-4 8 2-9zM312 519l2-9-4 8zM312 519l-3 7 1-8zM309 526l1-8-3 7zM305 534l2-9-4 8zM302 542l1-9-3 8zM302 542l-4 8 2-9zM298 550l2-9-3 8zM293 565l-3 8 1-9zM290 573l1-9-2 8zM290 573l-2 8 1-9zM286 589l1-9-2 8zM284 597l1-9-2 8zM284 597l-1 8 0-9zM283 605l0-9-2 8zM281 612l-1 8 0-8zM279 628l0-9 0 8zM278 651l0-8 0 7zM278 651l0 8 0-9zM278 659l0-9 0 8zM279 666l-1-8 1 7zM279 666l0 8 0-9zM686 324l-8-2-1 0zM678 322l-1 0-8-2zM678 322l-7-2-2 0zM671 320l-2 0-7-1zM671 320l-7-1-2 0zM664 319l-2 0-8-2zM656 318l-2-1-7-1zM656 318l-8-1-1-1zM648 317l-1-1-8 0zM633 316l-2-1-8 0zM625 316l-2-1-8 0zM617 316l-2-1-8 0zM617 316l-8 0-2-1zM601 317l-2-2-8 1zM601 317l-8 0-2-1zM593 317l-2-1-8 1zM593 317l-9 1-1-1zM584 318l-8 1-1-1zM568 321l-1-2-8 2zM560 323l-1-2-9 2zM552 324l-2-1-8 2zM535 329l-1-2-8 3zM535 329l-8 3-1-2zM527 332l-1-2-8 3zM527 332l-8 2-1-1zM519 334l-1-1-8 3zM511 337l-1-1-9 3zM503 341l-2-2-8 3zM503 341l-8 3-2-2zM495 344l-2-2-8 4zM495 344l-8 4-2-2zM479 352l-8 4-1-2zM471 356l-8 4-1-2zM455 364l-1-2-7 5zM455 364l-7 5-1-2zM440 374l-7 5-1-2zM433 379l-1-2-8 5zM425 384l-1-2-7 5zM425 384l-7 5-1-2zM411 395l-1-2-7 5zM397 407l-7 6-1-3zM390 413l-6 6-1-3zM384 419l-6 6-2-2zM378 425l-2-2-6 6zM371 432l-6 6-1-2zM343 466l4-10-5 7zM337 473l5-10-6 7zM332 480l-4 7 3-9zM328 487l3-9-4 7zM323 495l4-10-5 7zM314 510l4-10-5 7zM314 510l-4 8 3-11zM310 518l3-11-3 8zM297 549l2-11-3 8zM294 556l2-10-3 8zM287 580l1-11-2 8zM287 580l-2 8 1-11zM283 596l1-11-2 8zM281 604l-1 8 1-11zM280 612l-1 7 1-10zM279 619l1-10-1 8zM278 635l0-11 0 8zM278 643l0-11 0 8zM278 650l0-10 0 7zM278 650l0 8 0-11zM279 665l-1-10 1 7zM654 317l-3 0-8-1zM654 317l-7-1-4 0zM639 316l-4-1-8-1zM623 315l-8 0-3-1zM607 315l-3-1-9 1zM607 315l-8 0-4 0zM591 316l4-1-8 0zM583 317l-8 1 4-2zM542 325l-8 2 4-3zM534 327l4-3-8 3zM518 333l-8 3 4-4zM501 339l-8 3 4-4zM493 342l4-4-8 4zM493 342l-8 4 4-4zM485 346l4-4-8 3zM485 346l-7 4 3-5zM470 354l-8 4 4-5zM454 362l-7 5 3-5zM447 367l3-5-8 5zM432 377l3-5-7 5zM432 377l-8 5 4-5zM424 382l-7 5 3-5zM417 387l3-5-7 5zM410 393l3-6-7 6zM403 398l3-5-7 6zM396 404l-7 6 3-5zM383 416l3-5-7 6zM370 429l3-6-6 7zM364 436l-6 6 3-6zM358 442l-5 7 2-6zM347 456l2-6-5 7zM347 456l-5 7 2-6zM342 463l2-6-6 7zM336 470l2-6-5 7zM336 470l-5 8 2-7zM331 478l-4 7 1-6zM322 492l2-6-5 8zM322 492l-4 8 1-6zM318 500l1-6-4 7zM313 507l2-6-4 8zM313 507l-3 8 1-6zM310 515l-4 8 1-7zM302 530l1-6-3 8zM302 530l-3 8 1-6zM299 538l-3 8 1-6zM296 546l1-6-3 7zM290 562l-2 7 1-6zM288 569l-2 8 1-6zM286 577l1-6-2 8zM286 577l-2 8 1-6zM284 585l-2 8 1-6zM281 601l-1 8 0-6zM280 609l-1 8 0-7zM279 617l-1 7 0-6zM278 624l0-6 0 8zM278 624l0 8 0-6zM278 632l0-6 0 8zM278 632l0 8 0-6zM643 316l-4-1-7 0zM643 316l-8-1-3 0zM635 315l-8-1-3 0zM627 314l-3 0-8 0zM627 314l-7 0-4 0zM620 314l-4 0-8 0zM620 314l-8 0-4 0zM587 315l-3 0-8 1zM571 317l-8 2-4-1zM563 319l-8 1 4-2zM555 320l-9 2 5-2zM538 324l5-2-8 2zM530 327l-8 2 5-3zM522 329l5-3-9 3zM514 332l-8 3 4-3zM497 338l5-3-8 3zM473 349l5-4-8 4zM473 349l-7 4 4-4zM466 353l4-4-8 4zM466 353l-8 5 4-5zM458 358l4-5-8 4zM442 367l-7 5 4-5zM435 372l4-5-8 5zM435 372l-7 5 3-5zM420 382l-7 5 4-5zM413 387l-7 6 4-6zM399 399l4-6-7 6zM399 399l-7 6 4-6zM373 423l3-6-6 7zM367 430l3-6-7 6zM361 436l-6 7 2-6zM355 443l2-6-5 7zM349 450l-5 7 2-6zM333 471l-5 8 2-7zM328 479l2-7-4 8zM328 479l-4 7 2-6zM324 486l2-6-5 7zM315 501l2-7-5 8zM311 509l1-7-3 8zM311 509l-4 7 2-6zM307 516l2-6-4 7zM307 516l-4 8 2-7zM297 540l1-7-3 8zM297 540l-3 7 1-6zM294 547l1-6-3 8zM294 547l-3 8 1-6zM291 555l-2 8 1-6zM289 563l1-6-3 7zM287 571l0-7-2 8zM287 571l-2 8 0-7zM283 587l-2 8 1-7zM281 595l-1 8 1-7zM280 603l1-7-1 8zM279 610l1-6-1 8zM279 610l-1 8 1-6zM632 315l-8-1-3 0zM624 314l-3 0-7 0zM624 314l-8 0-2 0zM608 314l-8 0-2 0zM600 314l-2 0-8 0zM600 314l-8 0-2 0zM584 315l-2 0-8 0zM584 315l-8 1-2-1zM576 316l-2-1-9 1zM568 317l-9 1-2 0zM551 320l-8 2-2-1zM535 324l-2-1-8 3zM535 324l-8 2-2 0zM527 326l-2 0-9 2zM527 326l-9 3-2-1zM510 332l-2-1-8 3zM510 332l-8 3-2-1zM494 338l-8 3-2-1zM478 345l-2-1-8 4zM470 349l-2-1-8 4zM462 353l-2-1-7 4zM454 357l-1-1-8 5zM454 357l-7 5-2-1zM447 362l-8 5-2-1zM439 367l-8 5-1-2zM424 377l-7 5 5-6zM417 382l5-6-7 5zM410 387l5-6-7 5zM403 393l5-7-7 6zM389 405l5-7-7 6zM363 430l-6 7 5-8zM357 437l5-8-6 7zM352 444l-6 7 5-9zM335 465l5-9-6 8zM330 472l-4 8 4-9zM326 480l-5 7 4-9zM321 487l4-9-5 8zM317 494l3-8-4 7zM317 494l-5 8 4-9zM312 502l4-9-4 8zM309 510l-4 7 3-9zM305 517l3-9-4 8zM301 525l3-9-3 8zM298 533l3-9-3 7zM295 541l-3 8 3-10zM292 549l-2 8 2-10zM290 557l2-10-2 8zM290 557l-3 7 3-9zM287 564l3-9-3 8zM285 572l2-9-2 8zM284 580l1-9-1 8zM282 588l2-9-2 7zM282 588l-1 8 1-10zM281 596l-1 8 1-10zM279 612l1-10-1 8zM484 340l-2 0-8 4zM484 340l-8 4-2 0zM476 344l-2 0-8 3zM476 344l-8 4-2-1zM445 361l-8 5 6-6zM437 366l-7 4 5-5zM422 376l-7 5 5-6zM415 381l-7 5 5-6zM401 392l5-6-7 6zM401 392l-7 6 5-6zM387 404l5-7-7 6zM381 410l4-7-6 7zM375 416l4-6-7 6zM368 422l-6 7 4-7zM362 429l-6 7 4-7zM356 436l-5 6 3-6zM351 442l-6 7 3-6zM345 449l3-6-5 7zM334 464l4-7-5 7zM334 464l-4 7 3-7zM330 471l3-7-5 7zM330 471l-5 7 3-7zM320 486l3-7-5 7zM320 486l-4 7 2-7zM312 501l2-7-4 7zM312 501l-4 7 2-7zM308 508l-4 8 2-7zM304 516l-3 8 2-7zM301 524l-3 7 2-6zM298 531l2-6-4 8zM295 539l1-6-2 7zM292 547l2-7-3 8zM292 547l-2 8 1-7zM290 555l-3 8 2-7zM285 571l-1 8 1-7zM614 314l-8-1-2 1zM606 313l-2 1-8 0zM606 313l-8 1-2 0zM598 314l-8 0-2 0zM590 314l-2 0-8 0zM582 315l-2-1-8 1zM582 315l-8 0-2 0zM565 316l-1 0-8 1zM565 316l-8 2-1-1zM557 318l-1-1-8 2zM549 319l-1 0-9 2zM549 319l-8 2-2 0zM541 321l-8 2-2 0zM525 326l-2-1-8 3zM516 328l-1 0-8 2zM492 337l-2-1-8 4zM343 450l1-3-6 7zM343 450l-5 7 0-3zM338 457l0-3-5 7zM338 457l-5 7 0-3zM328 471l0-3-4 8zM323 479l1-3-5 7zM323 479l-5 7 1-3zM318 486l-4 8 1-3zM314 494l1-3-4 8zM314 494l-4 7 1-2zM310 501l1-2-4 7zM294 540l3-10-3 7zM289 556l-2 8 2-11zM285 572l2-11-1 8zM588 314l-8 0 1 0zM580 314l-8 1 1 0zM572 315l1 0-8 1zM564 316l-8 1 1 0zM556 317l1 0-8 1zM548 319l1-1-8 2zM548 319l-9 2 2-1zM539 321l2-1-9 2zM539 321l-8 2 1-1zM531 323l1-1-8 2zM523 325l-8 3 1-2zM507 330l1-1-8 3zM498 333l2-1-9 3zM498 333l-8 3 1-1zM490 336l1-1-8 3zM490 336l-8 4 1-2zM482 340l-8 4 1-2zM474 344l1-2-8 4zM474 344l-8 3 1-1zM466 347l-8 5 2-2zM458 352l-7 4 1-2zM443 360l-8 5 1-2zM435 365l1-2-7 5zM420 375l1-2-7 5zM413 380l1-2-7 6zM413 380l-7 6 1-2zM406 386l1-2-7 5zM406 386l-7 6 1-3zM399 392l-7 5 1-2zM392 397l1-2-7 6zM385 403l1-2-6 6zM372 416l-6 6 1-2zM366 422l1-2-6 6zM366 422l-6 7 1-3zM360 429l-6 7 1-3zM354 436l1-3-6 7zM348 443l-5 7 1-3zM573 315l-8 1 2 0zM557 317l-8 1 2 0zM532 322l-8 2 2-1zM516 326l-8 3 2-1zM500 332l2-2-8 3zM491 335l3-2-8 4zM491 335l-8 3 3-1zM483 338l-8 4 3-2zM467 346l-7 4 2-3zM460 350l-8 4 2-2zM452 354l2-2-8 4zM452 354l-8 4 2-2zM444 358l2-2-8 4zM444 358l-8 5 2-3zM421 373l-7 5 2-3zM414 378l2-3-7 6zM393 395l2-3-7 6zM386 401l2-3-7 6zM386 401l-6 6 1-3zM373 413l2-3-6 6zM367 420l-6 6 2-3zM361 426l2-3-6 7zM361 426l-6 7 2-3zM355 433l2-3-6 6zM349 440l2-4-6 7zM344 447l1-4-5 7zM344 447l-6 7 2-4zM338 454l2-4-5 8zM333 461l2-3-5 7zM328 468l-4 8 1-4zM324 476l-5 7 1-3zM319 483l1-3-4 7zM307 506l1-4-3 8zM303 514l-3 8 1-4zM300 522l1-4-3 8zM297 530l-3 7 2-3zM294 537l2-3-3 7zM292 545l-3 8 2-4zM559 317l-8 1-3 1zM551 318l-8 1-3 1zM526 323l-8 2 5-1zM518 325l5-1-8 2zM518 325l-8 3 5-2zM510 328l-8 2 5-2zM494 333l5-2-9 3zM486 337l4-3-8 3zM478 340l4-3-8 4zM470 344l4-3-8 4zM470 344l-8 3 4-2zM462 347l-8 5 4-3zM454 352l-8 4 5-3zM446 356l5-3-8 4zM438 360l-7 5 4-3zM431 365l4-3-7 4zM423 370l5-4-8 6zM423 370l-7 5 4-3zM416 375l4-3-7 5zM402 386l4-4-7 6zM395 392l-7 6 4-4zM388 398l4-4-7 6zM388 398l-7 6 4-4zM375 410l3-4-6 6zM369 416l3-4-6 6zM369 416l-6 7 3-5zM363 423l-6 7 3-5zM357 430l3-5-6 7zM351 436l3-4-6 7zM351 436l-6 7 3-4zM345 443l-5 7 3-4zM335 458l-5 7 2-5zM330 465l2-5-5 7zM325 472l2-5-4 8zM325 472l-5 8 3-5zM312 495l2-5-4 8zM301 518l2-5-3 8zM301 518l-3 8 2-5zM298 526l-2 8 1-5zM296 534l-3 7 2-4zM531 322l-8 2 3-1zM523 324l-8 2 2-1zM507 328l2 0-8 2zM490 334l3-1-8 3zM490 334l-8 3 3-1zM474 341l3-2-8 4zM466 345l3-2-8 4zM435 362l3-2-8 4zM435 362l-7 4 2-2zM428 366l2-2-7 5zM428 366l-8 6 3-3zM420 372l3-3-8 5zM420 372l-7 5 2-3zM413 377l2-3-7 6zM413 377l-7 5 2-2zM406 382l2-2-7 5zM406 382l-7 6 2-3zM399 388l2-3-7 6zM392 394l-7 6 2-3zM385 400l2-3-7 6zM378 406l2-3-6 6zM366 418l2-3-6 7zM354 432l2-3-6 7zM354 432l-6 7 2-3zM343 446l2-4-6 8zM337 453l-5 7 2-3zM332 460l2-3-5 7zM332 460l-5 7 2-3zM323 475l2-4-5 8zM318 482l2-3-4 7zM310 498l2-4-3 8zM310 498l-3 7 2-3zM307 505l-4 8 2-3zM493 333l-8 3 4-1zM485 336l-8 3 4-1zM469 343l4-2-8 4zM461 347l4-2-8 4zM453 351l4-2-8 4zM415 374l-7 6 3-3zM401 385l-7 6 3-3zM387 397l3-3-7 6zM380 403l3-3-6 6zM368 415l-6 7 2-3zM362 422l2-3-6 6zM356 429l2-4-5 7zM356 429l-6 7 3-4zM350 436l3-4-6 7zM339 450l3-4-6 7zM334 457l2-4-4 8zM334 457l-5 7 3-3zM329 464l3-3-5 7zM320 479l2-4-4 8zM473 341l-8 4 2-1zM465 345l-8 4 2-1zM457 349l2-1-8 4zM457 349l-8 4 2-1zM441 357l-8 5 3-2zM426 367l2-2-7 5zM418 372l-7 5 3-2zM411 377l-7 5 2-2zM397 388l2-2-7 6zM383 400l-6 6 2-2zM370 412l3-2-7 7zM370 412l-6 7 2-2zM364 419l-6 6 2-2zM358 425l2-2-6 7zM353 432l1-2-5 7zM353 432l-6 7 2-2zM347 439l2-2-6 7zM347 439l-5 7 1-2zM342 446l1-2-5 7zM342 446l-6 7 2-2zM336 453l-4 8 1-3zM428 365l-7 5 7-4zM421 370l-7 5 6-4zM414 375l-8 5 7-4zM406 380l-7 6 6-5zM392 392l-6 6 6-5zM366 417l-6 6 6-5z"/>
<path fill="#2000ff" d="M675 521l0-9-8 2zM786 507l7-6-8-2zM708 505l-1-8-9 1zM466 689l-4-11-4 8zM448 834l2 7-8-2zM739 495l1-8-8 0zM466 671l-7-7-3 8zM436 765l0 8-8-7zM435 780l0 8-7-7zM474 902l5 5-11-5zM800 503l1-8-7-2zM779 490l3-7-8-1zM756 487l3-7-8-1zM732 487l3-8-8 0zM700 490l-8 1 3-9zM603 522l-8 5 2-12zM587 531l3-11-8 4zM452 680l-6-7-4 8zM433 734l-6-6-2 8zM428 804l-7-6 0 7zM493 926l5 4-11-3zM436 696l-3 8-6-7zM482 922l-12-4 6 4zM782 483l-8-1 3-7zM703 481l-8 1 3-9zM590 520l-8 4 3-11zM547 537l-7 6-1-10zM482 599l-5 7-2-10zM472 613l-3-10-5 7zM433 681l-3 8-4-12zM427 697l-2 8-5-12zM465 913l-9-4 5 5zM487 931l6 4-10-3zM447 899l4 5-10-6zM456 909l5 5-11-5zM471 923l-11-5 6 5zM855 500l5-3-6-4zM849 496l5-3-5-4zM811 477l-7-3-1-7zM752 464l-7 0-2-8zM737 463l-2-7-8 0zM721 464l-2-8-8 0zM672 470l-2-8-8 2zM664 472l-2-8-8 2zM647 477l-1-8-8 2zM639 479l-8 3-2-8zM591 500l-2-8-8 4zM568 513l-2-8-8 4zM561 518l-3-9-7 5zM518 550l-3-8-7 6zM464 610l-5 7-4-9zM426 677l-3 8-5-9zM408 740l-1 8-6-9zM416 844l-8-8 2 7zM427 870l-9-7 3 6zM442 893l-10-6 4 6zM410 700l-2 8-6-9zM406 716l-6-9-2 8zM406 716l-2 8-6-9zM404 724l-6-9-2 8zM404 724l-2 7-6-8zM401 739l-1 8-6-9zM400 747l-6-9-1 8zM399 763l-7-9 0 8zM399 786l0 7-7-8zM400 801l1 7-8-9zM401 808l-8-9 1 8zM402 815l2 7-8-8zM406 829l-9-8 2 7zM408 836l2 7-9-8zM418 863l3 6-9-7zM421 869l4 6-10-7zM432 887l4 6-6-2zM450 909l-6-2 5 5zM455 913l-6-1 5 5zM466 923l5 4-6-1zM477 931l-7-1 6 4zM854 493l-5-4 2-4zM849 489l2-4-5-4zM843 485l-7-3 3-5zM836 482l-6-4 3-5zM830 478l-7-3 4-5zM823 475l-6-3 3-5zM803 467l-7-2 4-6zM751 457l-8-1 5-7zM719 456l-8 0 5-7zM711 456l5-7-8 0zM703 457l5-8-8 1zM695 458l-8 1 5-8zM670 462l-8 2 5-9zM662 464l-3-7-8 2zM662 464l-8 2-3-7zM654 466l-8 3-4-8zM646 469l-4-8-8 3zM621 477l-3-7-8 3zM613 481l-3-8-8 4zM605 484l-3-7-8 3zM597 488l-3-8-8 4zM558 509l-3-7-8 5zM558 509l-7 5-4-7zM522 536l-3-8-7 6zM522 536l-7 6-3-8zM515 542l-3-8-7 6zM502 554l-4-8-6 6zM495 560l-6 7-4-8zM483 573l-4-8-6 7zM471 587l-3-8-6 7zM421 668l-4-8-4 8zM418 676l-5-8-3 7zM412 692l-5-9-2 8zM432 629l-2-12-4 8zM407 683l-6-5-3 8zM396 723l-6-5-2 8zM396 723l-1 7-7-4zM399 828l-7-5 2 7zM426 886l-8-5 4 6zM430 891l-8-4 4 5zM454 917l5 4-9-4zM833 473l-6-3 0-6zM827 470l-7-3 0-6zM785 455l0-6-7-2zM414 647l-5-7-4 7zM329 758l-5-5 1 7zM330 765l-5-5 1 8zM321 685l-1 8-4-8zM316 753l1 7-4-8zM320 775l2 7-5-8zM317 677l-1 8-3-9zM309 675l-1 8-4-5zM302 661l-1 7-2-7zM296 699l-3-8 0 8zM294 676l-1 7-2-9zM291 674l-2-11 0 7zM289 701l-3-7 1 7zM396 415l3-7-6 6zM280 629l0-9-1 8zM687 324l-7-2-2 0zM594 319l-8 1-2-2zM553 326l-8 2-2-1zM537 331l-8 2-2-1zM521 336l-2-2-8 3zM521 336l-8 3-2-2zM513 339l-9 3-1-1zM504 342l-8 4-1-2zM496 346l-8 4-1-2zM450 371l-2-2-8 5zM420 391l-7 6 5-8zM367 440l4-8-6 6zM345 467l-5 7 3-8zM340 474l-5 7 2-8zM330 489l-5 7 3-9zM321 504l-5 7 3-9zM316 511l3-9-5 8zM305 534l-3 8 1-9zM298 550l-3 7 2-8zM286 589l-2 8 1-9zM278 659l1 7-1-8zM648 317l-7-1-2 0zM641 316l-8 0-2-1zM625 316l-8 0-2-1zM609 316l-8 1-2-2zM519 334l-8 3-1-1zM511 337l-8 4-2-2zM471 356l-1-2-8 4zM463 360l-1-2-8 4zM433 379l-8 5-1-2zM404 401l-1-3-7 6zM397 407l-1-3-7 6zM390 413l-1-3-6 6zM378 425l-7 7-1-3zM365 438l-1-2-6 6zM365 438l-6 7-1-3zM359 445l-5 7-1-3zM354 452l-6 7 5-10zM348 459l5-10-6 7zM348 459l-5 7 4-10zM332 480l4-10-5 8zM307 525l3-10-4 8zM300 541l2-11-3 8zM300 541l-3 8 2-11zM297 549l-3 7 2-10zM291 564l2-10-3 8zM283 596l-2 8 1-11zM279 627l0-10-1 7zM278 643l0 7 0-10zM669 320l-7-1-4-1zM662 319l-8-2-3 0zM639 316l-8-1-4-1zM631 315l-8 0-3-1zM599 315l-8 1 4-1zM591 316l-8 1 4-2zM575 318l4-2-8 1zM575 318l-8 1 4-2zM567 319l4-2-8 2zM567 319l-8 2 4-2zM559 321l-9 2 5-3zM550 323l5-3-9 2zM510 336l4-4-8 3zM501 339l5-4-9 3zM478 350l-8 4 3-5zM462 358l4-5-8 5zM439 372l3-5-7 5zM439 372l-7 5 3-5zM424 382l4-5-8 5zM417 387l-7 6 3-6zM383 416l-7 7 3-6zM376 423l-6 6 3-6zM358 442l3-6-6 7zM353 449l-6 7 2-6zM327 485l-5 7 2-6zM306 523l1-7-4 8zM299 538l1-6-3 8zM296 546l-3 8 1-7zM293 554l1-7-3 8zM288 569l1-6-2 8zM284 585l1-6-2 8zM282 593l1-6-2 8zM282 593l-1 8 0-6zM281 601l0-6-1 8zM280 609l0-6-1 7zM278 640l0 7 0-6zM604 314l-4 0-8 0zM579 316l-3 0-8 1zM579 316l-8 1-3 0zM571 317l-3 0-9 1zM546 322l5-2-8 2zM546 322l-8 2 5-2zM522 329l-8 3 4-3zM514 332l4-3-8 3zM506 335l-9 3 5-3zM489 342l-8 3 5-4zM450 362l4-5-7 5zM442 367l5-5-8 5zM428 377l3-5-7 5zM420 382l4-5-7 5zM413 387l4-5-7 5zM406 393l4-6-7 6zM392 405l-6 6 3-6zM379 417l-6 6 3-6zM367 430l-6 6 2-6zM355 443l-6 7 3-6zM349 450l3-6-6 7zM338 464l3-6-6 7zM333 471l2-6-5 7zM319 494l-4 7 2-7zM303 524l2-7-4 8zM289 563l-2 8 0-7zM283 587l1-7-2 8zM280 603l-1 7 1-6zM278 618l0 8 0-7zM486 341l-8 4-2-1zM478 345l-8 4-2-1zM417 382l-7 5 5-6zM403 393l-7 6 5-7zM396 399l5-7-7 6zM396 399l-7 6 5-7zM389 405l-7 6 5-7zM382 411l-6 6 5-7zM376 417l5-7-6 6zM370 424l-7 6 5-8zM363 430l5-8-6 7zM357 437l-5 7 4-8zM326 480l4-9-5 7zM295 541l3-10-3 8zM292 549l3-10-3 8zM285 572l-1 8 1-9zM279 612l-1 7 1-9zM460 352l-7 4 5-4zM453 356l-8 5 6-5zM430 370l-8 6 6-6zM422 376l6-6-8 5zM394 398l-7 6 5-7zM375 416l-7 6 4-6zM368 422l4-6-6 6zM356 436l4-7-6 7zM308 508l2-7-4 8zM298 531l-3 8 1-6zM287 563l-2 8 2-7zM574 315l-9 1-1 0zM557 318l-8 1-1 0zM525 326l-9 2-1 0zM516 328l-8 3-1-1zM508 331l-8 3-2-1zM328 471l-5 8 1-3zM318 486l1-3-4 8zM310 501l-4 8 1-3zM306 509l-3 8 4-11zM303 517l4-11-4 8zM300 525l3-11-3 8zM296 533l4-11-3 8zM294 540l-3 8 3-11zM287 564l2-11-2 8zM287 564l-2 8 2-11zM285 572l-2 8 3-11zM596 314l-8 0 1 0zM588 314l1 0-8 0zM580 314l1 0-8 1zM451 356l1-2-8 4zM428 370l1-2-8 5zM428 370l-8 5 1-2zM399 392l1-3-7 6zM360 429l1-3-6 7zM354 436l-6 7 1-3zM348 443l1-3-5 7zM565 316l2 0-8 1zM549 318l2 0-8 1zM541 320l-9 2 3-1zM516 326l2-1-8 3zM508 329l2-1-8 2zM483 338l3-1-8 3zM467 346l3-2-8 3zM460 350l2-3-8 5zM436 363l-7 5 2-3zM429 368l2-3-8 5zM421 373l2-3-7 5zM414 378l-7 6 2-3zM407 384l-7 5 2-3zM400 389l2-3-7 6zM393 395l-7 6 2-3zM380 407l-7 6 2-3zM373 413l-6 7 2-4zM338 454l-5 7 2-3zM324 476l1-4-5 8zM311 499l1-4-4 7zM311 499l-4 7 1-4zM303 514l2-4-4 8zM294 537l-2 8 1-4zM289 553l-2 8 2-4zM494 333l-8 4 4-3zM478 340l-8 4 4-3zM446 356l-8 4 5-3zM409 381l-7 5 4-4zM395 392l4-4-7 6zM381 404l4-4-7 6zM375 410l-6 6 3-4zM363 423l3-5-6 7zM345 443l3-4-5 7zM340 450l3-4-6 7zM298 526l2-5-3 8zM515 326l2-1-8 3zM515 326l-8 2 2 0zM458 349l-7 4 2-2zM451 353l2-2-8 4zM451 353l-8 4 2-2zM443 357l2-2-7 5zM399 388l-7 6 2-3zM385 400l-7 6 2-3zM372 412l-6 6 2-3zM366 418l-6 7 2-3zM348 439l2-3-5 6zM343 446l-6 7 2-3zM337 453l2-3-5 7zM327 467l2-3-4 7zM327 467l-4 8 2-4zM323 475l-5 7 2-3zM314 490l2-4-4 8zM314 490l-4 8 2-4zM493 333l4-1-8 3zM445 355l-7 5 3-3zM438 360l3-3-8 5zM438 360l-8 4 3-2zM430 364l3-2-7 5zM423 369l-8 5 3-2zM415 374l3-2-7 5zM408 380l-7 5 3-3zM387 397l-7 6 3-3zM374 409l3-3-7 6zM350 436l-5 6 2-3zM339 450l-5 7 2-4zM329 464l-4 7 2-3zM325 471l2-3-5 7zM325 471l-5 8 2-4zM320 479l-4 7 2-3zM316 486l-4 8 2-3zM433 362l3-2-8 5zM433 362l-7 5 2-2zM411 377l3-2-8 5zM404 382l-7 6 2-2zM397 388l-7 6 2-2zM390 394l-7 6 3-2zM383 400l3-2-7 6zM377 406l2-2-6 6zM358 425l-5 7 1-2zM386 398l-7 6 6-5zM379 404l-6 6 5-5z"/>
<path fill="#2800ff" d="M619 543l-8 4 0-10zM581 566l-8 5 0-10zM451 787l-8-5 0 8zM476 885l-10-4 4 5zM474 673l-4 8-4-10zM443 790l0 8-8-10zM445 820l-8-2 2 7zM470 886l4 6-8-1zM502 923l5 4-8-1zM674 503l1-9-8 3zM625 521l1-10-8 3zM549 568l1-12-7 6zM483 641l-4 7-6-6zM462 885l-10-6 3 6zM466 891l-11-6 4 6zM771 489l3-7-7-1zM523 580l-5-7-7 7zM517 586l-6-6-6 6zM482 627l-5 7-5-6zM482 917l5 5-11-4zM425 736l-2 8-6-8zM421 798l0 7-8-7zM446 880l3 6-10-6zM751 479l3-7-7-1zM703 481l3-9-8 1zM538 555l-5-7-7 6zM555 532l-2-9-7 5zM506 573l-1-10-7 6zM440 666l-3-12-4 8zM422 713l-7-4-2 8zM420 721l-7-4-2 7zM420 721l-2 7-7-4zM415 744l-7-4-1 8zM427 855l-8-5 2 7zM487 931l-10-3 6 4zM827 490l-7-3 4-5zM813 485l-7-3 5-5zM837 489l-6-3 5-4zM831 486l5-4-6-4zM831 486l-7-4 6-4zM818 480l-7-3-1-7zM797 472l-1-7-7-2zM783 469l-2-8-7-1zM775 467l-1-7-8-2zM768 466l-2-8-7-1zM760 465l-1-8-8 0zM752 464l-1-7-8-1zM631 482l-8 3-2-8zM568 513l-7 5-3-9zM525 545l-7 5-3-8zM511 556l-6 7-3-9zM498 569l-6 6-3-8zM480 589l-5 7-4-9zM464 610l-4-9-5 7zM445 639l-4 8-5-9zM441 647l-5-9-4 7zM437 654l-4 8-5-9zM426 677l-5-9-3 8zM423 685l-5-9-3 8zM420 693l-5-9-3 8zM415 709l-5-9-2 8zM410 732l-6-8-2 7zM406 786l0 8-7-8zM412 830l-8-8 2 7zM416 844l3 6-9-7zM421 857l3 6-9-7zM400 747l-1 8-6-9zM412 850l3 6-9-7zM428 881l4 6-10-7zM436 893l5 5-7-1zM817 472l-7-2 4-6zM810 470l-7-3 4-5zM789 463l4-6-8-2zM781 461l-7-1 4-6zM774 460l-8-2 5-6zM766 458l-7-1 4-6zM759 457l4-6-8-1zM759 457l-8 0 4-7zM743 456l-8 0 5-7zM735 456l5-7-8-1zM589 492l-8 4-3-8zM502 554l-7 6-3-8zM483 573l-6 7-4-8zM455 608l-5 7-4-8zM436 638l-4-9-4 8zM436 638l-4 7-4-8zM428 653l-4-9-4 8zM428 653l-3 8-5-9zM563 497l-8 5 0-10zM512 534l0-11-7 6zM473 572l0-11-6 6zM700 450l-8 1 0-8zM586 484l0-9-7 4zM579 479l-8 4-4-7zM555 492l-7 5-4-7zM404 671l-3 7-5-7zM310 699l-3-9-1 8zM310 722l0 8-4-9zM306 698l-3-4 0 7zM300 676l0 8-3-8zM298 668l-1 8-3-8zM657 319l-1-1-8-1zM576 319l-1-1-8 1zM448 369l-8 5-1-2zM328 487l-5 8 4-10zM303 533l-3 8 2-11zM279 619l0 8 0-10zM647 316l-8 0-4-1zM403 398l-7 6 3-5zM376 423l3-6-6 6zM370 429l-6 7 3-6zM331 478l2-7-5 8zM279 617l0-7-1 8zM278 640l0-6 0 7zM595 315l-8 0-3 0zM530 327l5-3-8 2zM489 342l5-4-8 3zM458 358l-8 4 4-5zM386 411l3-6-7 6zM373 423l-6 7 3-6zM278 618l1-6-1 7zM278 626l0-7 0 8zM568 317l-3-1-8 2zM424 377l6-7-8 6zM376 417l-6 7 5-8zM346 451l5-9-6 7zM330 472l4-8-4 7zM280 604l-1 8 1-10zM531 323l-8 2 1-1zM515 328l1-2-8 3zM532 322l3-1-9 2zM486 337l-8 3 4-3zM340 450l-5 8 2-5zM335 458l2-5-5 7zM312 495l-4 7 2-4zM308 502l-3 8 2-5zM499 331l-9 3 3-1zM418 372l3-2-7 5zM399 386l-7 6 6-5z"/>
<path fill="#3000ff" d="M507 914l-10-2 5 5zM815 523l7-5-7-3zM683 519l-8 2 0-9zM477 686l-3 7-8-4zM513 926l-11-3 5 4zM841 527l-6-3 5-5zM588 551l-2-9-8 5zM525 602l-2-9-7 6zM435 788l-7-7 0 8zM435 796l-7-7 0 7zM827 513l-6-3 0-7zM835 509l2-6-6-4zM821 503l3-7-7-3zM756 487l-8 0 3-8zM708 488l-8 2 3-9zM659 499l-8 3 3-10zM610 518l3-10-8 3zM435 727l-6-7-2 8zM433 833l2 7-9-6zM472 907l5 5-11-4zM439 688l-6-7-3 8zM420 782l-7-7 0 8zM421 805l1 7-8-6zM422 812l1 8-8-7zM423 820l2 7-9-7zM425 827l-9-7 2 7zM439 867l3 7-9-6zM767 481l-8-1 3-8zM735 479l-8 0 4-8zM662 489l3-9-8 2zM582 524l-5-7-8 5zM450 665l-6-7-4 8zM540 543l-1-10-7 6zM540 543l-7 5-1-9zM526 554l-1-9-7 5zM513 566l-2-10-6 7zM500 579l-2-10-6 6zM494 586l-2-11-6 7zM488 592l-6 7-2-10zM477 606l-5 7-3-10zM472 613l-6 8-2-11zM448 650l-4 8-3-11zM444 658l-3-11-4 7zM437 673l-4-11-4 8zM425 705l-5-12-2 8zM425 705l-7-4-3 8zM417 736l-2 8-7-4zM414 752l-7-4-1 8zM414 760l-8-4 0 7zM413 775l-7-4-1 8zM413 775l0 8-8-4zM413 798l-7-4 1 7zM413 798l1 8-7-5zM416 820l-7-4 1 7zM418 827l-8-4 2 7zM420 834l2 7-8-4zM430 861l-9-4 3 6zM430 861l3 7-9-5zM433 868l3 6-9-4zM436 874l-9-4 4 6zM447 892l-9-4 4 5zM451 897l-9-4 5 6zM460 908l-9-4 5 5zM465 913l5 5-9-4zM470 918l6 4-10-3zM481 927l6 4-10-3zM839 497l4-5-6-3zM833 494l4-5-6-3zM827 490l4-4-7-4zM806 482l5-5-7-3zM806 482l-7-2 5-6zM799 480l-7-2 5-6zM785 476l5-6-7-1zM770 473l5-6-7-1zM747 471l-2-7-8-1zM739 471l-2-8-8 0zM715 472l-2-8-8 1zM706 472l-1-7-8 1zM698 473l-8 2-2-8zM690 475l-2-8-8 1zM682 476l-2-8-8 2zM674 478l-2-8-8 2zM665 480l-8 2-1-8zM657 482l-1-8-9 3zM608 501l-1-9-8 4zM451 904l5 5-11-6zM461 914l-11-5 5 4zM471 923l6 5-11-5zM477 928l-11-5 5 4zM483 932l-12-5 6 4zM855 500l-6-4 5-3zM843 492l6-3-6-4zM824 482l6-4-7-3zM824 482l-1-7-6-3zM824 482l-6-2-1-8zM811 477l-1-7-7-3zM804 474l-7-2-1-7zM790 470l-1-7-8-2zM790 470l-7-1-2-8zM775 467l-7-1-2-8zM768 466l-8-1-1-8zM737 463l-8 0-2-7zM713 464l-8 1-2-8zM697 466l-9 1-1-8zM688 467l-8 1-1-7zM680 468l-1-7-9 1zM680 468l-8 2-2-8zM656 474l-9 3-1-8zM615 489l-2-8-8 3zM607 492l-8 4-2-8zM583 504l-2-8-7 4zM553 523l-2-9-8 6zM553 523l-7 5-3-8zM546 528l-7 5-3-8zM532 539l-3-9-7 6zM511 556l-3-8-6 6zM492 575l-6 7-3-9zM475 596l-6 7-3-9zM449 632l-4 7-4-9zM429 670l-4-9-4 7zM429 670l-3 7-5-9zM413 717l-2 7-5-8zM410 732l-2 8-6-9zM408 740l-6-9-1 8zM406 756l-6-9-1 8zM406 771l-7-8-1 7zM406 771l-1 8-7-9zM405 779l-7-9 0 8zM406 794l-7-8 0 7zM409 816l-8-8 1 7zM412 830l2 7-8-8zM419 850l2 7-9-7zM424 863l3 7-9-7zM427 870l4 6-10-7zM431 876l3 6-9-7zM434 882l-9-7 3 6zM438 888l-10-7 4 6zM438 888l4 5-10-6zM410 843l2 7-9-8zM466 923l-7-2 6 5zM854 493l3-4-6-4zM789 463l-8-2 4-6zM638 471l-9 3-3-7zM543 520l-7 5-3-8zM495 560l-3-8-7 7zM477 580l-4-8-5 7zM432 645l-4-8-4 7zM418 676l-3 8-5-9zM526 523l0-11-7 6zM392 762l-7-5 0 7zM510 336l-9 3 5-4zM576 316l-8 1-3-1zM377 406l-7 6 3-2z"/>
<path fill="#3800ff" d="M489 681l-4 8-4-11zM459 805l-8-3 1 8zM675 521l-8 2 0-9zM627 539l-1-9-8 3zM566 577l-7 6-1-11zM507 921l6 5-11-3zM808 513l6-6-7-2zM756 503l-8 0-1-8zM748 503l-8 0-1-8zM642 523l-8 3-1-9zM580 556l-2-9-7 5zM457 712l-3 8-5-10zM457 862l-8-2 3 6zM466 671l-4 7-6-6zM440 741l-7-7-1 8zM505 930l-7 0 6 4zM858 531l-6-4 1-7zM840 519l1-7-6-3zM785 499l-7-1 1-8zM770 496l1-7-7-1zM847 516l-6-4 2-6zM794 493l2-7-7-1zM643 504l-9 4 3-11zM464 657l-5 7-5-6zM452 680l-4 7-6-6zM437 847l3 7-9-6zM445 867l-9-6 3 6zM472 907l-10-4 4 5zM498 930l6 4-11-3zM442 681l-5-8-4 8zM433 704l-6-7-2 8zM429 720l-7-7-2 8zM421 767l-7-7-1 8zM423 820l-8-7 1 7zM442 874l4 6-10-6zM449 886l-10-6 4 6zM453 892l-10-6 4 6zM482 922l5 5-11-5zM487 927l-11-5 5 5zM487 927l6 4-12-4zM493 931l-12-4 6 4zM493 931l5 4-11-4zM810 491l3-6-7-3zM803 489l-7-3 3-6zM774 482l3-7-7-2zM727 479l-8 0 4-8zM711 480l4-8-9 0zM646 494l-9 3 4-10zM637 497l-8 4 4-11zM511 580l-5-7-6 6zM499 593l-5-7-6 6zM477 621l-5-8-6 8zM462 642l-4 8-6-7zM458 650l-4 8-6-8zM569 522l-1-9-7 5zM562 527l-7 5-2-9zM533 548l-1-9-7 6zM488 592l-2-10-6 7zM466 621l-2-11-5 7zM466 621l-4 7-3-11zM457 635l-5 8-3-11zM452 643l-4 7-3-11zM440 666l-3 7-4-11zM433 681l-4-11-3 7zM425 705l-3 8-7-4zM418 728l-7-4-1 8zM417 736l-7-4-2 8zM414 760l-1 8-7-5zM413 783l0 8-7-5zM413 791l0 7-7-4zM414 806l1 7-7-4zM424 848l3 7-8-5zM427 855l3 6-9-4zM433 868l-9-5 3 7zM447 892l4 5-9-4zM451 897l5 6-9-4zM456 903l4 5-9-4zM476 922l-10-3 5 4zM476 922l5 5-10-4zM820 487l4-5-6-2zM799 480l5-6-7-2zM777 475l-7-2 5-6zM762 472l6-6-8-1zM754 472l6-7-8-1zM747 471l-8 0-2-8zM739 471l-8 0-2-8zM715 472l-9 0-1-7zM706 472l-8 1-1-7zM690 475l-8 1-2-8zM682 476l-8 2-2-8zM665 480l-1-8-8 2zM649 485l-2-8-8 2zM641 487l-2-8-8 3zM447 899l-11-6 5 5zM477 928l6 4-12-5zM818 480l-1-8-7-2zM783 469l-8-2-1-7zM760 465l-8-1-1-7zM745 464l-8-1-2-7zM729 463l-2-7-8 0zM729 463l-8 1-2-8zM664 472l-8 2-2-8zM623 485l-2-8-8 4zM623 485l-8 4-2-8zM599 496l-8 4-2-8zM480 589l-3-9-6 7zM469 603l-5 7-4-9zM449 632l-4-9-4 7zM441 647l-4 7-5-9zM433 662l-5-9-3 8zM406 763l-7-8 0 8zM407 801l1 8-8-8zM419 850l-9-7 2 7zM398 778l1 8-7-9zM406 829l2 7-9-8zM687 459l-8 2 4-9zM646 469l-8 2-4-7zM638 471l-4-7-8 3zM566 505l-3-8-8 5z"/>
<path fill="#4000ff" d="M488 881l4 6-11-6zM835 548l-6-3 1-7zM675 539l2-10-8 3zM541 624l-5-7-6 6zM481 881l-9-2 4 6zM493 899l4 5-9-2zM855 553l-6-5 4-5zM774 521l5-7-7-1zM758 520l-8-1 6-8zM710 522l-2-8-8 1zM702 523l-8 2-2-8zM669 532l-8 2-2-8zM653 537l-8 4-2-9zM605 561l-2-9-7 4zM530 623l-6 7-3-10zM470 728l-6-11-2 8zM779 514l0-8-8-1zM635 535l-8 4-1-9zM559 583l-1-11-6 6zM546 594l-1-11-7 7zM494 656l-2-12-5 7zM485 670l-4 8-7-5zM461 853l-9-5 2 7zM466 866l-9-4 3 6zM469 872l-9-4 3 6zM786 507l-1-8-7-1zM700 506l-2-8-8 2zM482 658l-3-10-5 8zM497 918l5 5-8-1zM665 506l-8 2 2-9zM542 574l-6 6 0-12zM510 606l-5 6-6-6zM505 612l-6-6-6 7zM436 811l1 7-8-7zM458 879l-10-6 4 6zM846 523l1-7-6-4zM841 512l2-6-6-3zM779 490l-8-1 3-7zM740 487l-8 0 3-8zM667 497l3-10-8 2zM610 518l-7 4 2-11zM579 536l3-12-8 5zM557 551l2-12-7 5zM530 574l-6-7-6 6zM499 606l-6 7-5-7zM459 664l-3 8-6-7zM442 703l-6-7-3 8zM440 711l-7-7-2 8zM435 727l-2 7-6-6zM430 819l2 7-9-6zM433 833l-8-6 1 7zM452 879l-10-5 4 6zM442 681l-3 7-6-7zM431 712l-2 8-7-7zM427 728l-7-7-2 7zM423 744l-6-8-2 8zM423 744l-1 7-7-7zM422 751l-1 8-7-7zM421 759l0 8-7-7zM422 812l-8-6 1 7zM425 827l1 7-8-7zM426 834l-8-7 2 7zM428 841l3 7-9-7zM431 848l2 6-9-6zM436 861l-9-6 3 6zM446 880l-10-6 3 6zM449 886l4 6-10-6zM457 897l-10-5 4 5zM466 908l-10-5 4 5zM471 913l5 5-11-5zM849 510l3-5-6-4zM849 510l-6-4 3-5zM843 506l-6-3 2-6zM831 499l-7-3 3-6zM817 493l-7-2 3-6zM796 486l3-6-7-2zM789 485l-7-2 3-7zM774 482l-7-1 3-8zM743 479l4-8-8 0zM719 479l-8 1 4-8zM695 482l-8 2 3-9zM678 485l4-9-8 2zM670 487l-8 2 3-9zM662 489l-8 3 3-10zM654 492l3-10-8 3zM621 504l-8 4 3-11zM605 511l-8 4 3-11zM597 515l3-11-7 4zM590 520l3-12-8 5zM567 534l-5-7-7 5zM545 550l-5-7-7 5zM545 550l-7 5-5-7zM531 561l-5-7-7 6zM524 567l-5-7-6 6zM493 600l-5 6-6-7zM488 606l-6-7-5 7zM482 613l-5-7-5 7zM477 621l-5 7-6-7zM472 628l-5 7-5-7zM454 658l-6-8-4 8zM533 548l-7 6-1-9zM513 566l-7 7-1-10zM494 586l-6 6-2-10zM462 628l-3-11-5 7zM457 635l-3-11-5 8zM448 650l-3-11-4 8zM444 658l-4 8-3-12zM430 689l-4-12-3 8zM413 768l-7-5 0 8zM413 768l0 7-7-4zM414 806l-7-5 1 8zM416 820l2 7-8-4zM422 841l-8-4 2 7zM422 841l2 7-8-4zM424 848l-8-4 3 6zM470 918l-9-4 5 5zM852 505l3-5-6-4zM846 501l3-5-6-4zM839 497l-6-3 4-5zM833 494l-6-4 4-4zM820 487l-7-2 5-5zM770 473l-8-1 6-6zM762 472l-8 0 6-7zM731 471l-2-8-8 1zM731 471l-8 0-2-7zM723 471l-8 1-2-8zM649 485l-8 2-2-8zM641 487l-8 3-2-8zM633 490l-8 3-2-8zM616 497l-1-8-8 3zM616 497l-8 4-1-9zM600 504l-7 4-2-8zM593 508l-2-8-8 4zM593 508l-8 5-2-9zM585 513l-2-9-7 4zM585 513l-8 4-1-9zM577 517l-1-9-8 5zM577 517l-8 5-1-9zM466 919l5 4-11-5zM843 492l-6-3 6-4zM688 467l-1-8-8 2zM599 496l-2-8-8 4zM583 504l-7 4-2-8zM539 533l-3-8-7 5zM492 575l-3-8-6 6zM454 624l-4-9-5 8zM406 786l-8-8 1 8zM421 857l-9-7 3 6zM445 903l5 6-6-2zM679 461l4-9-8 1zM605 484l-8 4-3-8zM410 700l-5-9-3 8z"/>
<path fill="#4800ff" d="M740 528l-8 0 2-9zM683 537l2-10-8 2zM675 539l-8 3 2-10zM596 577l-8 5 2-12zM574 593l-7 6-5-7zM507 914l5 5-10-2zM758 520l6-8-8-1zM548 604l-6 6-3-9zM459 805l1 8-8-3zM463 835l2 7-9-3zM748 511l-8 0 0-8zM740 511l0-8-8 0zM651 529l0-9-9 3zM611 547l-8 5 0-10zM490 663l-5 7-3-12zM453 825l2 7-9-5zM456 839l2 7-8-5zM502 917l5 4-10-3zM732 503l-1-8-8 0zM513 615l-3-9-5 6zM487 651l-4-10-4 7zM452 728l-6-10-2 7zM444 767l-7-10-1 8zM487 908l-8-1 4 5zM731 495l1-8-8 0zM715 496l-8 1 1-9zM649 511l2-9-8 2zM641 514l2-10-9 4zM536 580l-7 6 1-12zM529 586l1-12-7 6zM483 641l-6-7-4 8zM470 663l-4 8-7-7zM437 818l2 7-9-6zM439 825l1 7-8-6zM440 832l-8-6 1 7zM446 853l-9-6 3 7zM449 860l-9-6 2 6zM455 873l-10-6 3 6zM505 930l6 4-7 0zM807 505l-7-2 1-8zM793 501l-8-2 1-7zM853 520l2-6-6-4zM853 520l-6-4 2-6zM847 516l2-6-6-4zM841 512l-6-3 2-6zM828 506l3-7-7-3zM801 495l-7-2 2-7zM764 488l3-7-8-1zM764 488l-8-1 3-7zM748 487l3-8-8 0zM748 487l-8 0 3-8zM740 487l3-8-8 0zM724 487l-8 1 3-9zM716 488l3-9-8 1zM692 491l-9 2 4-9zM683 493l4-9-9 1zM634 508l3-11-8 4zM572 541l2-12-7 5zM572 541l-7 5 2-12zM565 546l2-12-8 5zM543 562l-7 6-5-7zM493 613l-5 7-6-7zM488 620l-6-7-5 8zM488 620l-6 7-5-6zM482 627l-5-6-5 7zM459 664l-5-6-4 7zM448 687l-6-6-3 7zM445 695l-6-7-3 8zM437 719l-6-7-2 8zM432 742l-7-6-2 8zM430 750l-7-6-1 7zM430 750l-1 8-7-7zM428 774l-7-7-1 8zM428 781l0 8-8-7zM428 789l0 7-8-6zM428 796l0 8-7-6zM428 804l1 7-8-6zM440 854l-9-6 2 6zM455 885l-9-5 3 6zM463 897l-10-5 4 5zM482 917l-11-4 5 5zM487 922l6 4-11-4zM493 926l-11-4 5 5zM498 930l-11-3 6 4zM439 688l-3 8-6-7zM429 720l-2 8-7-7zM427 728l-2 8-7-8zM422 751l-7-7-1 8zM420 790l1 8-8-7zM421 805l-8-7 1 8zM433 854l-9-6 3 7zM442 874l-9-6 3 6zM453 892l4 5-10-5zM457 897l5 6-11-6zM462 903l-11-6 5 6zM466 908l5 5-11-5zM471 913l-11-5 5 5zM476 918l6 4-12-4zM843 506l3-5-7-4zM837 503l2-6-6-3zM831 499l2-5-6-4zM817 493l3-6-7-2zM803 489l3-7-7-2zM789 485l3-7-7-2zM767 481l3-8-8-1zM759 480l3-8-8 0zM759 480l-8-1 3-7zM751 479l-8 0 4-8zM678 485l-8 2 4-9zM670 487l4-9-9 2zM629 501l-8 3 4-11zM605 511l3-10-8 3zM597 515l-7 5 3-12zM582 524l-8 5-5-7zM574 529l-7 5-5-7zM559 539l-7 5-5-7zM552 544l-5-7-7 6zM518 573l-5-7-7 7zM518 573l-7 7-5-7zM505 586l-5-7-6 7zM505 586l-6 7-5-7zM493 600l-5-8-6 7zM488 606l-6 7-5-7zM482 613l-5 8-5-8zM458 650l-6-7-4 7zM519 560l-6 6-2-10zM462 628l-5 7-3-11zM452 643l-3-11-4 7zM427 697l-4-12-3 8zM414 752l0 8-8-4zM413 783l-8-4 1 7zM443 886l-9-4 4 6zM657 482l-8 3-2-8zM697 466l-2-8-8 1zM607 492l-2-8-8 4zM405 779l1 7-8-8zM434 882l4 6-10-7zM471 927l6 4-7-1zM485 559l-6 6 0-11z"/>
<path fill="#5000ff" d="M627 568l-1-9-7 4zM549 628l-1-11-7 7zM476 786l-9-4 0 8zM471 758l-8-7-1 8zM467 797l-8-7 0 8zM500 898l-11-5 4 6zM530 927l-7 1 6 4zM650 548l-8 3 3-10zM789 524l5-7-7-2zM621 552l-2-9-8 4zM498 666l-4-10-4 7zM485 689l-3 7-5-10zM459 790l0 8-8-3zM453 764l-8-5-1 8zM469 872l3 7-9-5zM497 912l5 5-10-3zM748 503l-1-8-8 0zM566 566l-3-9-7 6zM558 572l-2-9-7 5zM558 572l-6 6-3-10zM519 609l-3-10-6 7zM492 644l-4-10-5 7zM463 696l-5-10-3 8zM448 743l-6-10-2 8zM443 782l0 8-8-10zM446 827l-7-2 1 7zM454 855l-8-2 3 7zM457 862l3 6-8-2zM492 914l-9-2 5 5zM723 495l1-8-8 1zM723 495l-8 1 1-8zM715 496l1-8-8 0zM698 498l-8 2 2-9zM682 501l1-8-8 1zM674 503l-9 3 2-9zM641 514l-8 3 1-9zM586 542l1-11-8 5zM571 552l1-11-7 5zM563 557l-7 6 1-12zM523 593l-7 6-5-6zM505 612l-6 7-6-6zM499 619l-5 7-6-6zM494 626l-6-6-6 7zM479 648l-5 8-6-7zM462 678l-4 8-6-6zM458 686l-6-6-4 7zM455 694l-7-7-3 8zM449 710l-7-7-2 8zM442 733l-7-6-2 7zM442 733l-2 8-7-7zM439 749l-2 8-7-7zM437 757l-1 8-7-7zM435 780l-7-6 0 7zM442 839l-9-6 2 7zM452 866l3 7-10-6zM455 873l3 6-10-6zM466 891l4 5-11-5zM499 926l-6 0 5 4zM852 527l1-7-6-4zM852 527l-6-4 1-7zM846 523l-6-4 1-7zM834 516l1-7-7-3zM821 510l0-7-6-3zM821 510l-7-3 1-7zM785 499l1-7-7-2zM755 495l1-8-8 0zM859 524l-6-4 2-6zM835 509l-7-3 3-7zM821 503l-6-3 2-7zM808 497l-7-2 2-6zM794 493l-8-1 3-7zM771 489l-7-1 3-7zM716 488l-8 0 3-8zM692 491l3-9-8 2zM675 494l-8 3 3-10zM643 504l3-10-9 3zM603 522l2-11-8 4zM565 546l-8 5 2-12zM557 551l-5-7-7 6zM557 551l-7 5-5-6zM550 556l-5-6-7 5zM536 568l-5-7-7 6zM517 586l-6 7-6-7zM493 613l-5-7-6 7zM477 634l-5-6-5 7zM473 642l-5 7-6-7zM464 657l-6-7-4 8zM445 695l-3 8-6-7zM429 758l-1 8-7-7zM428 766l0 8-7-7zM428 796l-8-6 1 8zM429 811l-8-6 1 7zM435 840l2 7-9-6zM440 854l2 6-9-6zM442 860l3 7-9-6zM448 873l4 6-10-5zM455 885l4 6-10-5zM459 891l4 6-10-5zM468 902l-11-5 5 6zM477 912l-11-4 5 5zM477 912l5 5-11-4zM446 673l-4 8-5-8zM426 834l2 7-8-7zM433 854l3 7-9-6zM476 918l-11-5 5 5zM855 514l2-5-5-4zM837 503l-6-4 2-5zM824 496l3-6-7-3zM824 496l-7-3 3-6zM735 479l4-8-8 0zM654 492l-8 2 3-9zM621 504l4-11-9 4zM567 534l-8 5-4-7zM559 539l-4-7-8 5zM538 555l-7 6-5-7zM462 642l-5-7-5 8zM454 658l-4 7-6-7zM450 665l-4 8-6-7zM555 532l-8 5-1-9zM482 599l-2-10-5 7zM413 791l-7-5 0 8zM672 470l-8 2-2-8z"/>
<path fill="#5800ff" d="M640 572l-8 4 3-12zM484 787l-8-9 0 8zM794 541l7-6-7-2zM692 543l-1-9-8 3zM627 568l-8 5 0-10zM499 700l-7-4-4 7zM513 658l-4 8-6-7zM504 673l-4 7-6-7zM467 782l-7-7-1 7zM467 782l0 8-8-8zM504 904l-7 0 5 5zM808 537l2-7-7-3zM596 577l2-12-8 5zM843 545l4-6-6-3zM781 522l-7-1 5-7zM583 575l-2-9-8 5zM513 644l-5 7-4-10zM467 735l-5-10-3 8zM835 532l6-5-6-3zM588 561l-7 5-1-10zM566 577l0-11-8 6zM546 594l-7 7-1-11zM464 717l-2 8-8-5zM454 756l-8-5-1 8zM454 756l-1 8-8-5zM452 817l-8-4 1 7zM492 907l-10-4 5 5zM859 539l-6-4 5-4zM847 531l5-4-6-4zM828 521l6-5-7-3zM822 518l5-5-6-3zM808 513l-7-2 6-6zM801 511l-7-2 6-6zM794 509l6-6-7-2zM740 503l-8 0-1-8zM716 504l-1-8-8 1zM700 506l-9 2-1-8zM667 514l-8 3-2-9zM626 530l-1-9-8 4zM611 537l-2-8-8 4zM603 542l-8 4-2-9zM538 590l-6 6-3-10zM508 622l-6 7-3-10zM492 644l-5 7-4-10zM482 658l-4 8-4-10zM474 673l-4-10-4 8zM470 681l-4-10-4 7zM470 681l-4 8-4-11zM450 736l-6-11-2 8zM446 751l-6-10-1 8zM444 775l-8-10 0 8zM444 775l-1 7-7-9zM443 798l-8-10 0 8zM444 813l1 7-8-2zM454 855l3 7-8-2zM463 874l-8-1 3 6zM470 886l-8-1 4 6zM474 892l-8-1 4 5zM482 903l-8-1 5 5zM747 495l-8 0 1-8zM731 495l-8 0 1-8zM698 498l2-8-8 1zM690 500l2-9-9 2zM690 500l-8 1 1-8zM682 501l-8 2 1-9zM665 506l2-9-8 2zM657 508l2-9-8 3zM657 508l-8 3 2-9zM633 517l1-9-8 3zM633 517l-8 4 1-10zM625 521l-8 4 1-11zM617 525l1-11-8 4zM617 525l-8 4 1-11zM593 537l-7 5 1-11zM556 563l1-12-7 5zM549 568l-7 6 1-12zM523 593l-6-7-6 7zM479 648l-6-6-5 7zM474 656l-6-7-4 8zM474 656l-4 7-6-6zM458 686l-3 8-7-7zM452 702l-7-7-3 8zM446 718l-6-7-3 8zM444 725l-2 8-7-6zM439 749l-7-7-2 8zM436 765l-7-7-1 8zM436 773l-8-7 0 8zM436 773l-1 7-7-6zM435 788l0 8-7-7zM442 839l2 7-9-6zM444 846l-9-6 2 7zM446 853l3 7-9-6zM462 885l4 6-11-6zM470 896l-11-5 4 6zM470 896l4 6-11-5zM474 902l-11-5 5 5zM483 912l5 5-11-5zM488 917l-6 0 5 5zM494 922l5 4-6 0zM499 926l6 4-7 0zM827 513l1-7-7-3zM814 507l-7-2 1-8zM800 503l-7-2 1-8zM793 501l1-8-8-1zM778 498l1-8-8-1zM770 496l-7 0 1-8zM828 506l-7-3 3-7zM786 492l-7-2 3-7zM732 487l-8 0 3-8zM708 488l3-8-8 1zM700 490l3-9-8 1zM626 511l3-10-8 3zM626 511l-8 3 3-10zM618 514l3-10-8 4zM595 527l-8 4 3-11zM587 531l-8 5 3-12zM550 556l-7 6-5-7zM530 574l-7 6-5-7zM523 580l-6 6-6-6zM511 593l-6-7-6 7zM468 649l-6-7-4 8zM442 703l-2 8-7-7zM428 789l-8-7 0 8zM437 847l-9-6 3 7zM442 860l-9-6 3 7zM445 867l3 6-9-6zM448 873l-9-6 3 7zM452 879l3 6-9-5zM459 891l-10-5 4 6zM468 902l4 5-10-4zM504 934l-11-3 5 4zM425 736l-7-8-1 8zM420 775l0 7-7-7zM421 798l-8-7 0 7zM436 861l3 6-9-6zM855 514l-6-4 3-5zM582 524l3-11-8 4zM499 593l-6 7-5-8zM526 554l-7 6-1-10zM506 573l-6 6-2-10zM674 478l-9 2-1-8zM461 914l5 5-11-6zM408 809l1 7-8-8zM409 816l1 7-8-8z"/>
<path fill="#6000ff" d="M737 545l-8 1 3-9zM587 606l-5-8-7 6zM587 606l-7 5-5-7zM841 560l6-4-6-4zM716 538l-8 2 0-9zM575 604l-6 5-2-10zM476 816l1 8-9-4zM481 845l2 7-9-4zM488 703l-3 8-7-7zM472 750l-7-7-2 8zM472 750l-1 8-8-7zM469 766l-1 8-7-7zM748 528l-8 0 2-9zM619 563l-8 4 2-11zM469 856l3 6-9-3zM497 904l-9-2 4 5zM718 521l-2-8-8 1zM524 630l-6 7-3-10zM503 659l-4-11-5 8zM503 659l-5 7-4-10zM494 673l-4-10-5 7zM847 539l6-4-6-4zM847 539l-6-3 6-5zM835 532l-6-3 6-5zM829 529l6-5-7-3zM808 521l7-6-7-2zM667 523l0-9-8 3zM651 529l-8 3-1-9zM635 535l-1-9-8 4zM573 571l-7 6 0-11zM552 588l-6 6-1-11zM515 627l-2-12-5 7zM504 641l-2-12-5 7zM499 648l-2-12-5 8zM467 709l-7-5-3 8zM462 725l-8-5-2 8zM453 764l-1 8-8-5zM452 817l1 8-8-5zM472 879l-9-5 3 7zM492 907l5 5-10-4zM497 912l-10-4 5 6zM502 917l-10-3 5 4zM513 926l6 4-12-3zM853 535l5-4-6-4zM853 535l-6-4 5-4zM835 524l5-5-6-3zM779 506l-1-8-8-2zM779 506l-8-1-1-9zM764 504l-8-1-1-8zM732 503l-8 0-1-8zM724 503l-8 1-1-8zM716 504l-8 1-1-8zM691 508l-1-8-8 1zM659 517l-2-9-8 3zM651 520l-2-9-8 3zM651 520l-9 3-1-9zM634 526l-1-9-8 4zM626 530l-8 3-1-8zM618 533l-7 4-2-8zM603 542l-2-9-8 4zM595 546l-2-9-7 5zM580 556l-7 5-2-9zM573 561l-2-9-8 5zM566 566l-8 6-2-9zM545 583l-3-9-6 6zM538 590l-2-10-7 6zM519 609l-6 6-3-9zM513 615l-5 7-3-10zM497 636l-3-10-6 8zM497 636l-5 8-4-10zM478 666l-4 7-4-10zM466 689l-3 7-5-10zM457 712l-5-10-3 8zM454 720l-5-10-3 8zM454 720l-2 8-6-10zM452 728l-2 8-6-11zM446 751l-1 8-6-10zM443 805l-7-2 0 8zM444 813l-8-2 1 7zM445 820l1 7-7-2zM450 841l-8-2 2 7zM452 848l-8-2 2 7zM460 868l3 6-8-1zM463 874l3 7-8-2zM466 881l-8-2 4 6zM466 881l4 5-8-1zM478 898l-8-2 4 6zM478 898l4 5-8-1zM482 903l5 5-8-1zM487 908l5 6-9-2zM502 923l-8-1 5 4zM507 927l6 4-8-1zM513 931l-8-1 6 4zM747 495l1-8-8 0zM739 495l-8 0 1-8zM707 497l1-9-8 2zM649 511l-8 3 2-10zM609 529l-8 4 2-11zM601 533l2-11-8 5zM601 533l-8 4 2-10zM556 563l-7 5 1-12zM529 586l-6-6-6 6zM529 586l-6 7-6-7zM516 599l-6 7-5-7zM488 634l-5 7-6-7zM470 663l-6-6-5 7zM452 702l-3 8-7-7zM446 718l-2 7-7-6zM444 725l-7-6-2 8zM435 796l1 7-8-7zM436 803l-8-7 0 8zM436 803l0 8-8-7zM439 825l-9-6 2 7zM440 832l2 7-9-6zM452 866l-10-6 3 7zM479 907l-11-5 4 5zM840 519l-6-3 1-7zM834 516l-7-3 1-7zM814 507l1-7-7-3zM807 505l1-8-7-2zM763 496l1-8-8-1zM763 496l-8-1 1-8zM815 500l-7-3 2-6zM801 495l2-6-7-3zM659 499l3-10-8 3zM651 502l-8 2 3-10zM511 593l-6 6-6-6zM505 599l-6-6-6 7zM505 599l-6 7-6-6zM468 649l-4 8-6-7zM456 672l-4 8-6-7zM446 673l-6-7-3 7zM428 841l-8-7 2 7zM431 848l-9-7 2 7zM462 903l4 5-10-5zM719 479l4-8-8 1z"/>
<path fill="#6800ff" d="M773 563l-8-1 7-8zM692 571l-8 2-1-9zM503 770l-7-5-2 8zM500 809l-8-5 0 8zM780 555l4-7-7-2zM780 555l-8-1 5-8zM584 620l-4-9-7 6zM531 680l-5 8-5-10zM522 695l-4 8-5-9zM514 710l-5-9-4 8zM813 555l2-7-6-3zM680 556l3-10-8 2zM616 585l-7 5-5-8zM519 651l-6-7-5 7zM476 735l-6-7-3 7zM468 820l-8-7 1 7zM479 862l-10-6 3 6zM492 887l4 6-11-6zM732 528l2-9-8 1zM716 530l2-9-8 1zM554 611l-6-7-6 6zM485 887l4 6-9-3zM489 893l-9-3 4 6zM523 928l6 4-10-2zM849 548l4-5-6-4zM830 538l5-6-6-3zM830 538l-6-3 5-6zM810 530l5-7-7-2zM789 524l-8-2 6-7zM742 519l-8 0 6-8zM685 527l-8 2-2-8zM645 541l-2-9-8 3zM590 570l-2-9-7 5zM583 575l-7 6-3-10zM576 581l-3-10-7 6zM569 586l-3-9-7 6zM536 617l-6 6-3-9zM524 630l-3-10-6 7zM518 637l-5 7-3-10zM508 651l-4-10-5 7zM494 673l-5 8-4-11zM478 704l-4-11-4 8zM465 743l-2 8-6-11zM461 820l1 8-9-3zM462 828l-9-3 2 7zM463 835l-8-3 1 7zM841 536l6-5-6-4zM822 526l-7-3 7-5zM764 512l0-8-8-1zM764 512l-8-1 0-8zM756 511l0-8-8 0zM740 511l-8 0 0-8zM732 511l0-8-8 0zM692 517l-9 2 0-9zM667 523l-8 3 0-9zM659 526l0-9-8 3zM659 526l-8 3 0-9zM643 532l-1-9-8 3zM643 532l-8 3-1-9zM619 543l-1-10-7 4zM611 547l0-10-8 5zM603 552l0-10-8 4zM603 552l-7 4-1-10zM588 561l0-10-8 5zM581 566l-1-10-7 5zM539 601l-1-11-6 6zM521 620l-6 7-2-12zM515 627l-5 7-2-12zM510 634l-2-12-6 7zM510 634l-6 7-2-12zM494 656l-4 7-3-12zM485 670l-7-4-4 7zM481 678l-7-5-4 8zM481 678l-4 8-7-5zM477 686l-7-5-4 8zM470 701l-7-5-3 8zM467 709l-3 8-7-5zM459 733l-7-5-2 8zM452 772l-1 8-7-5zM451 780l-7-5-1 7zM452 810l0 7-8-4zM455 832l-9-5 2 7zM472 879l4 6-10-4zM480 890l4 6-10-4zM484 896l-10-4 4 6zM488 902l-10-4 4 5zM488 902l4 5-10-4zM507 921l-10-3 5 5zM847 531l-6-4 5-4zM841 527l5-4-6-4zM835 524l-7-3 6-5zM828 521l-6-3 5-5zM822 518l-7-3 6-5zM815 515l6-5-7-3zM801 511l6-6-7-2zM794 509l-8-2 7-6zM756 503l-1-8-8 0zM724 503l-1-8-8 1zM691 508l-8 2-1-9zM683 510l-8 2-1-9zM675 512l-8 2-2-8zM659 517l-8 3-2-9zM634 526l-8 4-1-9zM611 537l-8 5-2-9zM595 546l-7 5-2-9zM573 561l-7 5-3-9zM552 578l-3-10-7 6zM552 578l-7 5-3-9zM525 602l-6 7-3-10zM508 622l-3-10-6 7zM502 629l-3-10-5 7zM502 629l-5 7-3-10zM463 696l-3 8-5-10zM460 704l-5-10-3 8zM460 704l-3 8-5-10zM450 736l-2 7-6-10zM448 743l-2 8-6-10zM445 759l-6-10-2 8zM445 759l-1 8-7-10zM444 767l0 8-8-10zM443 782l-7-9-1 7zM443 798l0 7-8-9zM443 805l1 8-8-2zM452 848l2 7-8-2zM460 868l-8-2 3 7zM492 914l5 4-9-1zM497 918l-9-1 6 5zM507 927l-8-1 6 4zM586 542l-8 5 1-11zM578 547l1-11-7 5zM571 552l-8 5 2-11zM516 599l-5-6-6 6zM462 678l-6-6-4 8zM458 879l4 6-10-6zM778 498l-8-2 1-7zM683 493l-8 1 3-9zM667 497l-8 2 3-10zM437 719l-2 8-6-7zM428 781l-8-6 0 7zM430 819l-8-7 1 8zM432 826l-9-6 2 7zM487 922l-11-4 6 4zM810 491l-7-2 3-7zM695 482l3-9-8 2zM687 484l-9 1 4-9zM467 635l-5-7-5 7z"/>
<path fill="#7000ff" d="M554 663l-5 7-3-11zM538 685l-2-12-5 7zM558 645l-4-9-6 7zM552 652l-4-9-6 7zM697 551l-9 2 4-10zM484 818l-8-2 1 8zM490 847l2 7-9-2zM779 538l0-8-8-1zM740 536l-8 1 0-9zM597 587l-1-10-8 5zM543 635l-2-11-6 6zM499 700l-3 8-8-5zM479 838l-8-4 1 7zM520 911l5 5-11-2zM500 680l-6-7-5 8zM485 711l-7-7-3 8zM468 820l1 7-8-7zM472 841l-9-6 2 7zM488 881l-10-6 3 6zM822 542l2-7-7-3zM815 539l-7-2 2-7zM779 530l2-8-7-1zM748 528l2-9-8 0zM716 530l-8 1 2-9zM708 531l2-9-8 1zM603 572l-7 5 2-12zM561 605l-6-7-7 6zM548 617l-6-7-6 7zM472 862l-9-3 3 7zM478 875l-9-3 3 7zM481 881l4 6-9-2zM493 899l-9-3 4 6zM497 904l5 5-10-2zM502 909l5 5-10-2zM517 923l6 5-10-2zM849 548l-6-3 4-6zM843 545l-6-4 4-5zM824 535l-7-3 5-6zM781 522l6-7-8-1zM734 519l-8 1 6-9zM718 521l-8 1-2-8zM661 534l-8 3-2-8zM637 544l-2-9-8 4zM629 548l-2-9-8 4zM629 548l-8 4-2-9zM621 552l-8 4-2-9zM548 604l-2-10-7 7zM536 617l-3-10-6 7zM513 644l-3-10-6 7zM498 666l-4 7-4-10zM489 681l-4-11-4 8zM482 696l-5-10-3 7zM482 696l-4 8-4-11zM472 720l-5-11-3 8zM472 720l-2 8-6-11zM465 743l-6-10-2 7zM463 751l-1 8-7-11zM461 767l-8-3-1 8zM462 828l1 7-8-3zM465 842l-9-3 2 7zM467 849l-9-3 3 7zM841 536l-6-4 6-5zM829 529l-7-3 6-5zM822 526l6-5-6-3zM808 521l0-8-7-2zM808 521l-7-2 0-8zM801 519l-7-2 0-8zM794 517l-7-2-1-8zM787 515l-1-8-7-1zM787 515l-8-1 0-8zM772 513l-1-8-7-1zM772 513l-8-1 0-8zM756 511l-8 0 0-8zM748 511l0-8-8 0zM732 511l-8 1 0-9zM724 512l0-9-8 1zM716 513l0-9-8 1zM708 514l0-9-8 1zM700 515l0-9-9 2zM700 515l-8 2-1-9zM692 517l-1-9-8 2zM573 571l0-10-7 5zM559 583l-7 5 0-10zM539 601l-6 6-1-11zM527 614l-6 6-2-11zM485 670l-3-12-4 8zM474 693l-8-4-3 7zM464 717l-7-5-3 8zM459 733l-2 7-7-4zM457 740l-2 8-7-5zM455 748l-7-5-2 8zM452 772l-8-5 0 8zM451 787l0 8-8-5zM451 802l-8-4 0 7zM451 802l1 8-9-5zM452 810l-9-5 1 8zM458 846l-8-5 2 7zM463 859l3 7-9-4zM476 885l4 5-10-4zM519 930l-12-3 6 4zM519 930l5 4-11-3zM771 505l-1-9-7 0zM771 505l-7-1-1-8zM764 504l-1-8-8-1zM740 503l-1-8-8 0zM642 523l-1-9-8 3zM618 533l-1-8-8 4zM545 583l-7 7-2-10zM532 596l-7 6-2-9zM487 651l-5 7-3-10zM446 827l2 7-8-2zM448 834l-8-2 2 7zM440 741l-1 8-7-7zM579 536l-7 5 2-12zM536 568l-6 6-6-7zM477 634l-4 8-6-7zM429 758l-7-7-1 8zM428 774l0 7-8-6zM429 811l1 8-8-7zM421 767l-1 8-7-7z"/>
<path fill="#7800ff" d="M747 571l3-9-8 0zM534 692l-3-12-5 8zM534 692l-5 8-7-5zM540 906l-12-3 5 5zM518 703l-4 7-5-9zM769 546l-8-1 3-8zM560 630l-4-8-7 6zM847 564l6-4-6-4zM835 557l6-5-6-4zM829 554l-7-3 7-6zM815 548l7-6-7-3zM764 537l0-9-8 0zM692 543l-9 3 0-9zM683 546l0-9-8 2zM675 548l-8 3 0-9zM612 577l-1-10-8 5zM604 582l-7 5-1-10zM484 739l-8-4-2 8zM480 755l-8-5-1 8zM475 809l1 7-8-4zM486 859l-9-4 2 7zM488 865l-9-3 3 6zM510 901l5 5-11-2zM535 630l-5-7-6 7zM535 630l-5 7-6-7zM530 637l-6-7-6 7zM524 644l-6-7-5 7zM519 651l-6 7-5-7zM513 658l-5-7-5 8zM509 666l-5 7-6-7zM482 719l-3 8-7-7zM468 774l-7-7-1 8zM467 805l-8-7 0 7zM468 812l0 8-8-7zM469 827l-8-7 1 8zM469 827l2 7-9-6zM474 848l3 7-10-6zM477 855l-10-6 2 7zM485 875l3 6-10-6zM509 909l5 5-7 0zM514 914l5 4-7 1zM525 923l5 4-7 1zM847 556l-6-4 2-7zM841 552l-6-4 2-7zM815 539l2-7-7-2zM801 535l2-8-7-2zM801 535l-7-2 2-8zM787 531l2-7-8-2zM771 529l3-8-8-1zM756 528l2-8-8-1zM732 528l-8 1 2-9zM699 533l-8 1 3-9zM642 551l3-10-8 3zM642 551l-8 4 3-11zM634 555l3-11-8 4zM626 559l3-11-8 4zM626 559l-7 4 2-11zM619 563l2-11-8 4zM611 567l2-11-8 5zM603 572l2-11-7 4zM588 582l-7 6 2-13zM548 617l-7 7-5-7zM469 856l-8-3 2 6zM474 869l4 6-9-3zM478 875l3 6-9-2zM485 887l-9-2 4 5zM489 893l4 6-9-3zM502 909l-10-2 5 5zM512 919l-10-2 5 4zM512 919l5 4-10-2zM517 923l-10-2 6 5zM523 928l-10-2 6 4zM837 541l-7-3 5-6zM824 535l5-6-7-3zM817 532l5-6-7-3zM803 527l-7-2 5-6zM796 525l-7-1 5-7zM774 521l-8-1 6-7zM766 520l6-7-8-1zM750 519l6-8-8 0zM750 519l-8 0 6-8zM734 519l6-8-8 0zM726 520l6-9-8 1zM726 520l-2-8-8 1zM694 525l-9 2-2-8zM677 529l-2-8-8 2zM669 532l-2-9-8 3zM653 537l-2-8-8 3zM645 541l-8 3-2-9zM637 544l-8 4-2-9zM613 556l-2-9-8 5zM598 565l-8 5-2-9zM569 586l-7 6-3-9zM562 592l-3-9-7 5zM542 610l-3-9-6 6zM542 610l-6 7-3-10zM530 623l-3-9-6 6zM508 651l-5 8-4-11zM485 689l-4-11-4 8zM475 712l-3 8-5-11zM470 728l-3 7-5-10zM463 751l-6-11-2 8zM462 759l-7-11-1 8zM460 775l-8-3-1 8zM460 775l-1 7-8-2zM459 782l-8-2 0 7zM459 790l-8-3 0 8zM459 798l-8-3 0 7zM460 813l1 7-9-3zM461 820l-9-3 1 8zM853 543l-6-4 6-4zM815 523l-7-2 7-6zM724 512l-8 1 0-9zM596 556l-1-10-7 5zM552 588l0-10-7 5zM533 607l-1-11-7 6zM533 607l-6 7-2-12zM490 663l-3-12-5 7zM474 693l-4 8-7-5zM457 740l-7-4-2 7zM455 748l-1 8-8-5zM451 780l0 7-8-5zM458 846l3 7-9-5zM461 853l2 6-9-4zM484 896l4 6-10-4zM675 512l-1-9-9 3zM667 514l-2-8-8 2zM437 757l-7-7-1 8zM483 912l-11-5 5 5zM858 531l1-7-6-4z"/>
<path fill="#8000ff" d="M518 796l-9-4 0 8zM555 677l-5 7-7-6zM550 684l-5 7-7-6zM514 844l2 7-10-5zM706 576l-8 2 3-10zM758 562l-2-9-8 0zM500 809l1 8-9-5zM540 906l5 5-12-3zM700 560l5-11-8 2zM627 589l-3-9-8 5zM620 593l-8 5-3-8zM577 626l-7 6-3-9zM493 819l-9-9 0 8zM494 826l1 8-9-1zM500 855l3 6-9-1zM520 892l-9-1 4 6zM520 892l4 6-9-1zM524 908l-9-2 5 5zM851 576l2-8-6-4zM833 564l-6-3 2-7zM827 561l2-7-7-3zM806 553l-7-2 3-8zM784 548l3-8-8-2zM769 546l3-9-8 0zM754 545l-8 0 2-9zM737 545l3-9-8 1zM713 548l3-10-8 2zM640 572l3-11-8 3zM594 600l-5-8-7 6zM580 611l-5-7-6 5zM531 664l-5-9-5 8zM531 664l-5 7-5-8zM495 732l-2 8-6-9zM487 764l-1 8-8-9zM847 564l-6-4 6-4zM829 554l6-6-6-3zM748 536l0-8-8 0zM748 536l-8 0 0-8zM732 537l0-9-8 1zM732 537l-8 0 0-8zM708 540l0-9-9 2zM675 548l0-9-8 3zM651 557l-1-9-8 3zM635 564l-1-9-8 4zM604 582l-1-10-7 5zM575 604l-1-11-7 6zM562 616l-1-11-7 6zM562 616l-6 6-2-11zM549 628l-6 7-2-11zM532 648l-2-11-6 7zM521 663l-2-12-6 7zM521 663l-5 7-3-12zM512 677l-3-11-5 7zM512 677l-5 8-3-12zM499 700l-4-12-3 8zM496 708l-4 7-7-4zM489 723l-2 8-8-4zM478 763l-7-5-2 8zM477 770l-1 8-8-4zM476 778l-8-4-1 8zM477 824l1 7-9-4zM478 831l-9-4 2 7zM481 845l-9-4 2 7zM483 852l3 7-9-4zM502 890l-10-3 4 6zM506 896l-10-3 4 5zM510 901l-10-3 4 6zM515 906l-11-2 5 5zM525 916l5 5-11-3zM536 925l5 4-11-2zM530 637l-6 7-6-7zM509 666l-6-7-5 7zM504 673l-6-7-4 7zM495 688l-3 8-7-7zM482 719l-7-7-3 8zM476 735l-2 8-7-8zM474 743l-2 7-7-7zM467 790l-8-8 0 8zM472 841l2 7-9-6zM474 848l-9-6 2 7zM482 868l-10-6 2 7zM482 868l3 7-11-6zM492 887l-11-6 4 6zM519 918l-7 1 5 4zM841 552l2-7-6-4zM835 548l2-7-7-3zM829 545l-7-3 2-7zM808 537l-7-2 2-8zM794 533l2-8-7-1zM794 533l-7-2 2-7zM724 529l-8 1 2-9zM699 533l3-10-8 2zM691 534l3-9-9 2zM667 542l-9 3 3-11zM658 545l3-11-8 3zM611 567l-8 5 2-11zM588 582l2-12-7 5zM581 588l2-13-7 6zM567 599l-6 6-6-7zM554 611l-6 6-6-7zM472 862l2 7-8-3zM837 541l4-5-6-4zM817 532l-7-2 5-7zM803 527l5-6-7-2zM796 525l5-6-7-2zM766 520l-8 0 6-8zM726 520l-8 1-2-8zM710 522l-8 1-2-8zM694 525l-2-8-9 2zM661 534l-2-8-8 3zM613 556l-8 5-2-9zM598 565l-2-9-8 5zM590 570l-7 5-2-9zM555 598l-3-10-6 6zM478 704l-3 8-5-11zM467 735l-2 8-6-10zM462 759l-8-3-1 8zM461 767l-1 8-8-3zM459 782l0 8-8-3zM460 813l-8-3 0 7zM465 842l2 7-9-3zM467 849l2 7-8-3zM801 519l0-8-7-2zM779 514l-7-1-1-8zM716 513l-8 1 0-9zM708 514l-8 1 0-9zM627 539l-8 4-1-10zM499 648l-5 8-2-12zM462 725l-3 8-7-5zM451 795l-8-5 0 8zM463 859l-9-4 3 7zM815 515l-7-2 6-6zM786 507l-7-1-1-8zM683 510l-1-9-8 2zM532 596l-3-10-6 7zM450 841l2 7-8-2zM542 574l1-12-7 6zM510 606l-5-7-6 7zM494 626l-6 8-6-7zM488 634l-6-7-5 7zM449 710l-3 8-6-7zM437 818l-8-7 1 8zM479 907l4 5-11-5zM473 642l-6-7-5 7zM432 826l1 7-8-6z"/>
<path fill="#8700ff" d="M535 755l-8-6-2 7zM676 595l-8 3-2-8zM607 636l-7 5-2-10zM600 641l-2-10-7 6zM593 647l-2-10-7 7zM612 620l1-12-7 6zM543 900l5 5-13-4zM793 575l3-8-8-1zM698 578l-8 3 2-10zM817 574l5-6-6-3zM725 564l-1-9-8 1zM509 746l-2 8-8-5zM503 831l1 8-9-5zM504 839l2 7-10-5zM513 866l-10-5 3 7zM651 576l-3-8-8 4zM605 603l-7 6-4-9zM598 609l-4-9-7 6zM591 614l-7 6-4-9zM564 639l-4-9-6 6zM502 742l-3 7-6-9zM499 749l-2 8-6-9zM497 757l-1 8-7-9zM496 765l-7-9-2 8zM516 886l-9 0 4 5zM847 582l4-6-6-4zM534 917l6 5-10-1zM845 572l2-8-6-4zM839 568l2-8-6-3zM799 551l3-8-8-2zM777 546l2-8-7-1zM761 545l-7 0 2-9zM746 545l2-9-8 0zM729 546l-8 1 3-10zM721 547l-8 1 3-10zM697 551l3-10-8 2zM672 558l3-10-8 3zM664 561l3-10-8 3zM648 568l-8 4 3-11zM624 580l-5-7-7 4zM609 590l-5-8-7 5zM573 617l-6 6-5-7zM554 636l-5-8-6 7zM554 636l-6 7-5-8zM548 643l-6 7-5-8zM537 657l-6 7-5-9zM517 686l-5-9-5 8zM509 701l-6-9-4 8zM505 709l-4 8-5-9zM498 724l-3 8-6-9zM495 732l-6-9-2 8zM491 748l-2 8-7-9zM487 764l-7-9-2 8zM484 795l-8-9-1 8zM484 795l-1 8-8-9zM483 803l-8-9 0 7zM483 803l-8-2 0 8zM483 803l1 7-9-1zM484 810l-9-1 1 7zM488 840l-9-2 2 7zM490 847l-9-2 2 7zM494 860l-8-1 2 6zM500 873l-9-1 4 6zM500 873l3 7-8-2zM507 886l4 5-9-1zM853 568l-6-4 6-4zM815 548l-6-3 6-6zM809 545l-7-2 6-6zM794 541l0-8-7-2zM779 538l-7-1-1-8zM772 537l-1-8-7-1zM772 537l-8 0 0-9zM764 537l-8-1 0-8zM724 537l0-8-8 1zM716 538l0-8-8 1zM700 541l-1-8-8 1zM700 541l-8 2-1-9zM667 551l0-9-9 3zM643 561l-8 3-1-9zM635 564l-8 4-1-9zM612 577l-8 5-1-10zM582 598l-1-10-7 5zM582 598l-7 6-1-11zM569 609l-2-10-6 6zM556 622l-7 6-1-11zM543 635l-6 7-2-12zM526 655l-2-11-5 7zM516 670l-3-12-4 8zM507 685l-3-12-4 7zM503 692l-3-12-5 8zM503 692l-4 8-4-12zM489 723l-7-4-3 8zM487 731l-3 8-8-4zM484 739l-2 8-8-4zM482 747l-2 8-8-5zM478 763l-1 7-8-4zM477 770l-8-4-1 8zM476 786l-1 8-8-4zM475 794l0 7-8-4zM475 809l-8-4 1 7zM476 816l-8-4 0 8zM478 831l1 7-8-4zM483 852l-9-4 3 7zM488 865l3 7-9-4zM491 872l-9-4 3 7zM491 872l4 6-10-3zM498 884l-10-3 4 6zM502 890l4 6-10-3zM515 906l5 5-11-2zM520 911l-11-2 5 5zM525 916l-11-2 5 4zM530 921l-11-3 6 5zM536 925l-11-2 5 4zM541 929l-11-2 6 4zM524 644l-5 7-6-7zM500 680l-5 8-6-7zM495 688l-6-7-4 8zM492 696l-7-7-3 7zM488 703l-6-7-4 8zM485 711l-3 8-7-7zM479 727l-7-7-2 8zM479 727l-3 8-6-7zM474 743l-7-8-2 8zM471 758l-2 8-7-7zM469 766l-7-7-1 8zM467 790l0 7-8-7zM467 797l0 8-8-7zM471 834l-9-6 1 7zM471 834l1 7-9-6zM477 855l2 7-10-6zM496 893l-11-6 4 6zM496 893l4 5-11-5zM500 898l-7 1 4 5zM504 904l5 5-7 0zM509 909l-7 0 5 5zM514 914l-7 0 5 5zM519 918l6 5-8 0zM853 560l2-7-6-5zM853 560l-6-4 2-8zM847 556l2-8-6-3zM829 545l1-7-6-3zM787 531l-8-1 2-8zM779 530l-8-1 3-8zM771 529l-7-1 2-8zM764 528l2-8-8 0zM764 528l-8 0 2-8zM756 528l-8 0 2-9zM740 528l2-9-8 0zM708 531l-9 2 3-10zM658 545l-8 3 3-11zM581 588l-7 5 2-12zM574 593l2-12-7 5zM574 593l-5-7-7 6zM567 599l-5-7-7 6zM474 869l-8-3 3 6zM810 530l-7-3 5-6zM702 523l-2-8-8 2zM475 712l-5-11-3 8zM462 759l-1 8-8-3zM453 825l-8-5 1 7zM455 832l1 7-8-5zM466 866l3 6-9-4zM708 505l-8 1-2-8zM588 551l-8 5-2-9zM478 666l-4-10-4 7zM707 497l-9 1 2-8zM449 860l3 6-10-6z"/>
<path fill="#8f05fa" d="M724 591l-8 1 1-9zM576 679l-7-5-6 7zM547 723l-3 8-7-6zM835 601l5-6-6-4zM581 660l-6 7-3-11zM521 772l-8-3-2 7zM578 650l-6-7-6 7zM536 706l-7-6-4 7zM536 706l-4 8-7-7zM658 593l-8 4 2-11zM628 599l-7 4-1-10zM599 619l-1-10-7 5zM578 637l-6 6-2-11zM521 715l-7-5-4 8zM521 715l-3 8-8-5zM501 794l-9-5 0 7zM506 846l-10-5 2 7zM519 879l4 6-11-5zM527 890l-11-4 4 6zM535 901l-11-3 4 5zM556 920l-7 2 6 4zM787 557l-7-2 4-7zM740 554l6-9-9 0zM724 555l-8 1 5-9zM716 556l5-9-8 1zM675 567l-8 3-3-9zM667 570l-3-9-8 4zM643 580l-8 4-3-8zM612 598l-3-8-8 5zM612 598l-7 5-4-8zM598 609l-7 5-4-8zM564 639l-6 6-4-9zM552 652l-6 7-4-9zM536 673l-5-9-5 7zM536 673l-5 7-5-9zM531 680l-5-9-5 7zM526 688l-5-10-4 8zM526 688l-4 7-5-9zM518 703l-5-9-4 7zM514 710l-4 8-5-9zM504 734l-2 8-7-10zM499 749l-6-9-2 8zM494 773l-7-9-1 8zM493 781l-7-9-1 8zM493 781l-1 8-7-9zM492 804l-8-9-1 8zM496 841l-8-1 2 7zM498 848l-8-1 2 7zM498 848l2 7-8-1zM506 868l-9-1 3 6zM509 874l3 6-9 0zM528 903l-8-1 4 6zM538 913l5 4-9 0zM543 917l-9 0 6 5zM816 565l4-7-7-3zM511 891l4 6-9-1zM515 897l-9-1 4 5zM515 897l5 5-10-1zM520 902l4 6-9-2zM529 913l-9-2 5 5zM534 917l-9-1 5 5zM540 922l-10-1 6 4zM540 922l6 4-10-1zM546 926l-10-1 5 4zM845 572l-6-4 2-8zM839 568l-6-4 2-7zM820 558l2-7-7-3zM792 549l2-8-7-1zM754 545l2-9-8 0zM729 546l3-9-8 0zM713 548l-8 1 3-9zM705 549l3-9-8 1zM688 553l-8 3 3-10zM672 558l-8 3 3-10zM664 561l-8 4 3-11zM648 568l3-11-8 4zM632 576l3-12-8 4zM609 590l-8 5-4-8zM601 595l-7 5-5-8zM594 600l-7 6-5-8zM573 617l-4-8-7 7zM560 630l-6 6-5-8zM548 643l-5-8-6 7zM542 650l-5-8-5 6zM542 650l-5 7-5-9zM526 671l-5-8-5 7zM521 678l-5-8-4 7zM517 686l-4 8-6-9zM509 701l-4 8-6-9zM501 717l-5-9-4 7zM501 717l-3 7-6-9zM498 724l-6-9-3 8zM491 748l-7-9-2 8zM489 756l-2 8-7-9zM486 772l-8-9-1 7zM486 772l-1 8-8-10zM485 780l-8-10-1 8zM485 780l-1 7-8-9zM484 810l0 8-8-2zM486 833l-8-2 1 7zM492 854l-9-2 3 7zM492 854l2 6-8-1zM497 867l-9-2 3 7zM497 867l3 6-9-1zM835 557l-6-3 6-6zM822 551l7-6-7-3zM809 545l6-6-7-2zM802 543l6-6-7-2zM787 540l0-9-8-1zM787 540l-8-2 0-8zM756 536l0-8-8 0zM740 536l0-8-8 0zM708 540l-8 1-1-8zM683 546l-8 2 0-9zM659 554l-1-9-8 3zM643 561l-1-10-8 4zM619 573l0-10-8 4zM619 573l-7 4-1-10zM597 587l-8 5-1-10zM569 609l-7 7-1-11zM556 622l-2-11-6 6zM537 642l-2-12-5 7zM537 642l-5 6-2-11zM526 655l-5 8-2-12zM516 670l-4 7-3-11zM492 715l-7-4-3 8zM482 747l-8-4-2 7zM480 755l-2 8-7-5zM475 801l-8-4 0 8zM475 801l0 8-8-4zM477 824l-9-4 1 7zM479 838l2 7-9-4zM495 878l-10-3 3 6zM495 878l3 6-10-3zM498 884l4 6-10-3zM506 896l4 5-10-3zM530 921l6 4-11-2zM492 696l-4 7-6-7zM525 923l-8 0 6 5zM683 537l-8 2 2-10zM667 542l2-10-8 2zM742 519l6-8-8 0zM685 527l-2-8-8 2zM605 561l-7 4-2-9zM518 637l-3-10-5 7zM853 543l6-4-6-4zM794 517l0-8-8-2zM596 556l-8 5 0-10zM521 620l-2-11-6 6zM504 641l-5 7-2-12zM470 701l-3 8-7-5zM480 890l-10-4 4 6z"/>
<path fill="#970af5" d="M757 597l-8 0 7-9zM676 614l-1-9-8 4zM651 617l1-11-8 4zM544 731l-4 8-7-6zM567 905l-8 2 5 4zM749 580l6-9-8 0zM741 580l6-9-8 0zM545 891l4 6-11-3zM612 620l-7 6 1-12zM598 631l-7 6 1-12zM591 637l-7 7-6-7zM540 699l-4 7-7-6zM525 729l-7-6-3 8zM519 745l-7-6-3 7zM512 837l-9-6 1 8zM516 851l2 7-10-5zM521 864l-11-5 3 7zM527 877l3 6-11-4zM530 883l-11-4 4 6zM534 889l-11-4 4 5zM538 894l-11-4 4 6zM563 918l-7 2 6 4zM814 582l3-8-7-3zM800 577l3-8-7-2zM771 572l-8-1 2-9zM698 578l3-10-9 3zM658 593l2-11-8 4zM642 601l2-11-8 4zM823 577l-6-3 5-6zM810 571l6-6-7-3zM788 566l7-8-8-1zM781 564l6-7-7-2zM750 562l-2-9-8 1zM717 565l-1-9-8 2zM701 568l-1-8-9 2zM684 573l-1-9-8 3zM660 582l-8 4-1-10zM644 590l-1-10-8 4zM636 594l-1-10-8 5zM578 637l-1-11-7 6zM572 643l-2-11-6 7zM560 657l-2-12-6 7zM554 663l-2-11-6 7zM543 678l-2-12-5 7zM529 700l-7-5-4 8zM525 707l-7-4-4 7zM518 723l-8-5-3 8zM512 739l-3 7-7-4zM505 762l-8-5-1 8zM503 770l-1 8-8-5zM502 778l-8-5-1 8zM500 801l0 8-8-5zM503 831l-9-5 1 8zM504 839l-9-5 1 7zM523 885l4 5-11-4zM527 890l4 6-11-4zM545 911l-12-3 5 5zM772 554l5-8-8 0zM772 554l-8 0 5-8zM764 554l5-8-8-1zM756 553l-8 0 6-8zM748 553l6-8-8 0zM748 553l-8 1 6-9zM732 554l5-9-8 1zM716 556l-8 2 5-10zM683 564l-3-8-8 2zM683 564l-8 3-3-9zM584 620l-7 6-4-9zM577 626l-4-9-6 6zM570 632l-3-9-7 7zM546 659l-5 7-4-9zM541 666l-4-9-6 7zM522 695l-5-9-4 8zM510 718l-5-9-4 8zM507 726l-3 8-6-10zM502 742l-7-10-2 8zM497 757l-6-9-2 8zM494 773l-1 8-7-9zM492 789l0 7-8-9zM492 796l-8-9 0 8zM492 804l0 8-9-9zM492 812l1 7-9-9zM493 819l-9-1 1 7zM494 826l-9-1 1 8zM495 834l-9-1 2 7zM524 898l-9-1 5 5zM528 903l5 5-9 0zM533 908l5 5-9 0zM543 917l6 5-9 0zM549 922l-9 0 6 4zM847 582l-6-4 4-6zM841 578l4-6-6-4zM835 574l4-6-6-4zM829 571l-7-3 5-7zM802 560l4-7-7-2zM795 558l4-7-7-2zM787 557l5-8-8-1zM511 891l-9-1 4 6zM529 913l5 4-9-1zM827 561l-7-3 2-7zM813 555l-7-2 3-8zM806 553l3-8-7-2zM799 551l-7-2 2-8zM792 549l-8-1 3-8zM746 545l-9 0 3-9zM721 547l3-10-8 1zM705 549l-8 2 3-10zM688 553l4-10-9 3zM656 565l-8 3 3-11zM632 576l-8 4 3-12zM616 585l-4-8-8 5zM580 611l-7 6-4-8zM567 623l-7 7-4-8zM537 657l-5-9-6 7zM513 694l-6-9-4 7zM513 694l-4 7-6-9zM505 709l-6-9-3 8zM489 756l-7-9-2 8zM484 787l0 8-8-9zM485 825l-8-1 1 7zM485 825l1 8-8-2zM486 833l2 7-9-2zM488 840l2 7-9-2zM494 860l3 7-9-2zM507 886l-9-2 4 6zM802 543l-8-2 7-6zM794 541l-7-1 0-9zM659 554l-8 3-1-9zM651 557l-8 4-1-10zM532 648l-6 7-2-11zM507 685l-4 7-3-12zM496 708l-8-5-3 8zM475 794l-8-4 0 7zM468 774l-1 8-7-7zM467 805l1 7-9-7zM468 812l-9-7 1 8zM485 875l-11-6 4 6zM500 898l4 6-7 0zM530 927l6 4-7 1zM822 542l-7-3 2-7zM691 534l-8 3 2-10zM650 548l3-11-8 4zM541 624l-6 6-5-7zM677 529l-8 3-2-9zM562 592l-7 6-3-10zM683 519l0-9-8 2z"/>
<path fill="#9f0ff0" d="M543 856l-10-3 3 7zM552 876l-10-4 3 6zM564 893l-11-3 4 5zM780 590l-8-1 1-8zM527 794l-8-6-1 8zM545 878l4 6-8 2zM765 580l6-8-8-1zM708 585l-8 2-2-9zM652 606l-8 4-2-9zM621 625l-2-10-7 5zM614 630l-7 6-2-10zM544 710l-4-11-4 7zM523 764l-2 8-8-3zM519 826l1 7-9-3zM521 840l-9-3 2 7zM525 854l3 7-10-3zM528 861l-10-3 3 6zM537 880l-10-3 3 6zM627 610l-8 5 2-12zM591 637l-6-6-7 6zM566 663l-6 7-6-7zM555 677l-6-7-6 8zM532 714l-4 8-7-7zM528 722l-7-7-3 8zM519 745l-2 8-8-7zM517 753l-8-7-2 8zM517 753l-2 8-8-7zM511 776l-8-6-1 8zM510 784l-8-6-1 8zM511 830l1 7-9-6zM516 851l-10-5 2 7zM527 877l-11-5 3 7zM538 894l5 6-12-4zM548 905l-13-4 5 5zM553 910l-8 1 6 5zM558 914l5 4-7 2zM846 599l2-8-6-4zM846 599l-6-4 2-8zM840 595l-6-4 2-7zM814 582l-6-3 2-8zM786 574l-8-1 3-9zM763 571l2-9-7 0zM755 571l3-9-8 0zM723 573l2-9-8 1zM715 574l-9 2 3-9zM650 597l-8 4 2-11zM842 587l5-5-6-4zM836 584l-6-4 5-6zM796 567l-8-1 7-8zM788 566l-7-2 6-7zM765 562l-7 0 6-8zM758 562l6-8-8-1zM733 563l-8 1-1-9zM701 568l-9 3-1-9zM692 571l-1-9-8 2zM676 576l-1-9-8 3zM668 579l-1-9-8 3zM652 586l-1-10-8 4zM644 590l-8 4-1-10zM628 599l-1-10-7 4zM613 608l-1-10-7 5zM613 608l-7 6-1-11zM599 619l-7 6-1-11zM549 670l-3-11-5 7zM549 670l-6 8-2-12zM518 723l-3 8-8-5zM509 746l-7-4-3 7zM507 754l-8-5-2 8zM502 778l-1 8-8-5zM501 786l0 8-9-5zM500 801l-8-5 0 8zM501 817l-9-5 1 7zM502 824l-9-5 1 7zM508 853l-10-5 2 7zM508 853l2 6-10-4zM510 859l3 7-10-5zM519 879l-10-5 3 6zM531 896l4 5-11-3zM545 911l-7 2 5 4zM551 916l5 4-7 2zM756 553l5-8-7 0zM740 554l-8 0 5-9zM724 555l5-9-8 1zM708 558l-8 2 5-11zM700 560l-9 2 6-11zM691 562l6-11-9 2zM691 562l-8 2 5-11zM683 564l5-11-8 3zM675 567l-3-9-8 3zM667 570l-8 3-3-8zM643 580l-3-8-8 4zM635 584l-3-8-8 4zM635 584l-8 5-3-9zM620 593l-4-8-7 5zM605 603l-4-8-7 5zM591 614l-4-8-7 5zM541 666l-5 7-5-9zM504 734l-6-10-3 8zM496 765l-2 8-7-9zM492 796l0 8-8-9zM495 834l1 7-8-1zM496 841l2 7-8-1zM500 855l-8-1 2 6zM503 861l3 7-9-1zM506 868l3 6-9-1zM512 880l-9 0 4 6zM512 880l4 6-9 0zM516 886l4 6-9-1zM549 922l6 4-9 0zM835 574l-6-3 4-7zM829 571l4-7-6-3zM822 568l-6-3 4-7zM816 565l-7-3 4-7zM809 562l-7-2 4-7zM802 560l-7-2 4-7zM520 902l-10-1 5 5zM833 564l2-7-6-3zM820 558l-7-3 2-7zM761 545l3-8-8-1zM680 556l-8 2 3-10zM624 580l3-12-8 5zM601 595l-4-8-8 5zM526 671l-5 7-5-8zM484 818l1 7-8-1zM822 551l-7-3 7-6zM589 592l-7 6-1-10zM476 778l0 8-9-4zM486 859l2 6-9-3zM634 555l-8 4 3-11zM576 581l-7 5-3-9zM459 798l0 7-8-3zM451 795l0 7-8-4zM456 839l-8-5 2 7z"/>
<path fill="#a714eb" d="M672 626l-8 4 4-12zM641 644l-4-8-7 5zM616 652l-7 6-2-11zM602 664l-6 6-2-11zM578 691l-2-12-6 7zM579 907l-12-2 5 5zM781 599l6-7-7-2zM781 599l-8-1 7-8zM822 603l-7-3 8-6zM809 598l-7-3 7-6zM795 593l0-8-7-2zM772 589l1-8-8-1zM740 589l1-9-8 1zM699 597l-8 2 1-10zM683 602l1-10-8 3zM628 631l1-11-8 5zM614 641l-7 6 0-11zM528 786l-1 8-8-6zM538 866l4 6-12-5zM545 878l-8 2 4 6zM553 890l-8 1 4 6zM835 601l-6-3 5-7zM829 598l5-7-6-3zM829 598l-6-4 5-6zM823 594l5-6-7-3zM823 594l-7-2 5-7zM816 592l-7-3 5-7zM795 585l5-8-7-2zM788 583l5-8-7-1zM780 582l6-8-8-1zM765 580l-8 0 6-9zM749 580l-8 0 6-9zM733 581l6-10-8 1zM725 582l-2-9-8 1zM717 583l-9 2-2-9zM700 587l-2-9-8 3zM700 587l-8 2-2-8zM684 592l-8 3-2-9zM668 598l-2-8-8 3zM660 602l-2-9-8 4zM652 606l-2-9-8 4zM644 610l-8 5-2-9zM614 630l-2-10-7 6zM600 641l-7 6-2-10zM581 660l-3-10-6 6zM569 674l-3-11-6 7zM569 674l-6 7-3-11zM563 681l-5 7-3-11zM558 688l-3-11-5 7zM553 695l-3-11-5 7zM537 725l-5-11-4 8zM520 780l-9-4-1 8zM523 847l-9-3 2 7zM541 886l4 5-11-2zM549 897l5 5-11-2zM559 907l5 4-11-1zM570 916l-12-2 5 4zM570 916l6 4-13-2zM634 606l-7 4 1-11zM627 610l1-11-7 4zM619 615l2-12-8 5zM619 615l-7 5 1-12zM605 626l1-12-7 5zM584 644l-6-7-6 6zM584 644l-6 6-6-7zM578 650l-6 6-6-6zM560 670l-6-7-5 7zM550 684l-7-6-5 7zM532 714l-7-7-4 8zM528 722l-3 7-7-6zM515 761l-2 8-8-7zM513 769l-8-7-2 8zM511 776l-1 8-8-6zM509 800l0 7-9-6zM509 807l-9-6 0 8zM512 837l2 7-10-5zM514 844l-10-5 2 7zM518 858l-10-5 2 6zM521 864l2 7-10-5zM523 871l-10-5 3 6zM523 871l4 6-11-5zM530 883l4 6-11-4zM534 889l4 5-11-4zM543 900l-12-4 4 5zM553 910l5 4-7 2zM840 595l2-8-6-3zM834 591l-6-3 2-8zM828 588l2-8-7-3zM828 588l-7-3 2-8zM808 579l-8-2 3-8zM778 573l3-9-8-1zM778 573l-7-1 2-9zM771 572l2-9-8-1zM747 571l-8 0 3-9zM739 571l3-9-9 1zM739 571l-8 1 2-9zM731 572l2-9-8 1zM723 573l-8 1 2-9zM715 574l2-9-8 2zM682 583l2-10-8 3zM682 583l-8 3 2-10zM674 586l-8 4 2-11zM666 590l2-11-8 3zM666 590l-8 3 2-11zM848 591l-6-4 5-5zM836 584l5-6-6-4zM830 580l5-6-6-3zM830 580l-7-3 6-6zM810 571l-7-2 6-7zM803 569l6-7-7-2zM803 569l-7-2 6-7zM796 567l6-7-7-2zM781 564l-8-1 7-8zM773 563l7-8-8-1zM765 562l7-8-8 0zM742 562l-2-8-8 0zM742 562l-9 1-1-9zM733 563l-1-9-8 1zM725 564l-8 1-1-9zM709 567l-1-9-8 2zM709 567l-8 1-1-8zM684 573l-8 3-1-9zM668 579l-8 3-1-9zM621 603l-8 5-1-10zM606 614l-1-11-7 6zM572 643l-6 7-2-11zM566 650l-6 7-2-12zM560 657l-6 6-2-11zM534 692l-8-4-4 7zM515 731l-3 8-8-5zM512 739l-8-5-2 8zM507 754l-2 8-8-5zM505 762l-2 8-7-5zM501 786l-8-5-1 8zM501 794l-1 7-8-5zM506 846l2 7-10-5zM513 866l3 6-10-4zM516 872l-10-4 3 6zM516 872l3 7-10-5zM523 885l-11-5 4 6zM535 901l5 5-12-3zM545 911l6 5-8 1zM556 920l6 4-7 2zM764 554l-8-1 5-8zM732 554l-8 1 5-9zM651 576l-8 4-3-8zM627 589l-7 4-4-8zM558 645l-6 7-4-9zM546 659l-4-9-5 7zM510 718l-3 8-6-9zM492 789l-7-9-1 7zM492 812l-9-9 1 7zM533 908l-9 0 5 5zM538 913l-9 0 5 4zM822 568l5-7-7-3zM809 562l4-7-7-2zM795 558l-8-1 5-8zM524 908l5 5-9-2zM851 576l-6-4 2-8zM567 623l-5-7-6 6zM493 740l-2 8-7-9zM503 880l-8-2 3 6zM724 537l-8 1 0-8zM589 592l-1-10-7 6zM487 731l-8-4-3 8zM555 598l-7 6-2-10zM527 614l-2-12-6 7z"/>
<path fill="#af19e6" d="M553 821l1 7-10-6zM550 768l-2 7-7-8zM544 822l1 7-9-1zM652 626l-1-9-8 4zM596 670l-2-11-6 7zM573 698l-3-12-5 7zM559 720l-8-4-4 7zM543 759l-2 8-9-5zM541 767l-9-5-2 8zM541 767l-2 8-9-5zM539 775l-2 7-8-4zM537 782l-8-4-1 8zM536 828l1 8-9-4zM537 836l2 7-10-4zM546 863l-10-3 2 6zM556 882l4 5-11-3zM569 898l5 5-12-3zM579 907l6 4-7 3zM829 616l6-6-7-3zM795 602l-7-1 7-8zM788 601l-7-2 6-7zM725 600l-8 1-1-9zM684 611l-8 3-1-9zM772 589l-8 0 1-9zM756 588l-8 1 1-9zM740 589l-8 1 1-9zM716 592l1-9-9 2zM675 605l1-10-8 3zM667 609l-8 3 1-10zM636 626l0-11-7 5zM614 641l0-11-7 6zM594 659l-6 7-1-12zM588 666l-1-12-6 6zM588 666l-6 7-1-13zM582 673l-1-13-6 7zM582 673l-6 6-7-5zM576 679l-6 7-7-5zM565 693l-7-5-5 7zM565 693l-5 8-7-6zM556 708l-5 8-7-6zM551 716l-4 7-7-6zM547 723l-7-6-3 8zM537 747l-7-6-3 8zM532 762l-7-6-2 8zM527 817l0 7-9-6zM527 824l-9-6 1 8zM529 839l2 7-10-6zM538 866l-10-5 2 6zM542 872l-12-5 4 7zM549 884l-8 2 4 5zM549 884l4 6-8 1zM557 895l-8 2 5 5zM557 895l5 5-8 2zM562 900l-8 2 5 5zM562 900l5 5-8 2zM578 914l-8 2 6 4zM841 605l-6-4 5-6zM809 589l5-7-6-3zM773 581l5-8-7-1zM757 580l-8 0 6-9zM741 580l-8 1 6-10zM733 581l-8 1 6-10zM684 592l-2-9-8 3zM636 615l-2-9-7 4zM629 620l-2-10-8 5zM575 667l-3-11-6 7zM575 667l-6 7-3-11zM558 688l-5 7-3-11zM553 695l-4 7-4-11zM549 702l-4-11-5 8zM540 717l-3 8-5-11zM537 725l-4 8-5-11zM533 733l-5-11-3 7zM533 733l-8-4-3 8zM530 741l-8-4-3 8zM530 741l-3 8-8-4zM527 749l-8-4-2 8zM527 749l-2 7-8-3zM523 764l-8-3-2 8zM519 788l-9-4-1 8zM519 788l-1 8-9-4zM518 796l0 7-9-3zM518 803l-9-3 0 7zM518 811l0 7-9-3zM519 826l-9-4 1 8zM520 833l-9-3 1 7zM520 833l1 7-9-3zM525 854l-9-3 2 7zM530 867l-9-3 2 7zM530 867l4 7-11-3zM545 891l-11-2 4 5zM549 897l-11-3 5 6zM559 907l-11-2 5 5zM564 911l-11-1 5 4zM564 911l6 5-12-2zM605 626l-7 5 1-12zM598 631l1-12-7 6zM591 637l1-12-7 6zM572 656l-6 7-6-6zM545 691l-7-6-4 7zM540 699l-6-7-5 8zM522 737l-3 8-7-6zM515 761l-8-7-2 8zM513 769l-2 7-8-6zM510 784l-1 8-8-6zM509 792l-8-6 0 8zM509 792l0 8-8-6zM509 807l0 8-9-6zM509 815l1 7-9-5zM511 830l-9-6 1 7zM548 905l-8 1 5 5zM558 914l-7 2 5 4zM834 591l2-7-6-4zM786 574l2-8-7-2zM755 571l-8 0 3-9zM690 581l2-10-8 2zM650 597l2-11-8 4zM634 606l2-12-8 5zM758 562l-8 0-2-9zM676 576l-8 3-1-9zM652 586l-8 4-1-10zM606 614l-7 5-1-10zM592 625l-1-11-7 6zM585 631l-1-11-7 6zM585 631l-7 6-1-11zM529 700l-4 7-7-4zM525 707l-4 8-7-5zM510 859l-10-4 3 6zM551 916l-8 1 6 5zM659 573l-3-8-8 3zM570 632l-6 7-4-9zM507 726l-6-9-3 7zM493 819l1 7-9-1zM509 874l-9-1 3 7zM841 578l-6-4 4-6zM777 546l-8 0 3-9zM656 565l3-11-8 3zM493 740l-6-9-3 8zM841 560l-6-3 6-5zM724 529l2-9-8 1zM561 605l-7 6-6-7z"/>
<path fill="#b71fe0" d="M676 664l-8 5-2-9zM705 642l-8 3 1-10zM811 626l8-5-6-3zM752 615l1-9-8 1zM719 619l-8 2 2-9zM655 645l1-11-7 5zM562 758l-3 8-7-6zM553 805l-9-6 0 8zM553 821l-9-7 0 8zM567 869l3 6-8 1zM832 628l-6-4 3-8zM826 624l3-8-6-3zM813 618l3-8-7-3zM784 609l4-8-7-2zM777 608l4-9-8-1zM753 606l-8 1 4-10zM737 607l4-9-8 1zM649 639l-4-8-8 5zM558 744l-3 8-7-9zM552 760l-7-9-2 8zM546 783l-7-8-2 7zM545 791l-8-9-1 8zM550 850l-9 0 2 6zM562 876l-10 0 4 6zM570 888l-10-1 4 6zM570 888l4 5-10 0zM574 893l5 5-10 0zM579 898l-10 0 5 5zM584 903l-10 0 5 4zM590 907l6 4-11 0zM668 618l-1-9-8 3zM668 618l-8 4-1-10zM652 626l-7 5-2-10zM630 641l-2-10-7 5zM609 658l-2-11-7 6zM590 677l-2-11-6 7zM590 677l-6 7-2-11zM584 684l-2-11-6 6zM573 698l-5 7-3-12zM564 712l-5 8-3-12zM555 728l-3 7-8-4zM552 735l-4 8-8-4zM548 743l-8-4-3 8zM535 798l-8-4-1 8zM535 798l0 8-9-4zM535 806l-9-4 0 7zM535 813l-9-4 1 8zM539 843l-10-4 2 7zM541 850l-10-4 2 7zM546 863l3 6-11-3zM556 882l-11-4 4 6zM560 887l-11-3 4 6zM564 893l5 5-12-3zM569 898l-12-3 5 5zM809 607l-6-2 6-7zM803 605l6-7-7-3zM803 605l-8-3 7-7zM765 598l-8-1 7-8zM749 597l-8 1-1-9zM733 599l-8 1-1-9zM717 601l-8 2-1-9zM709 603l-1-9-9 3zM700 606l-8 2-1-9zM692 608l-1-9-8 3zM684 611l-1-9-8 3zM809 598l7-6-7-3zM795 593l7-6-7-2zM780 590l0-8-7-1zM764 589l-8-1 1-8zM756 588l1-8-8 0zM732 590l1-9-8 1zM732 590l-8 1 1-9zM708 594l0-9-8 2zM691 599l1-10-8 3zM691 599l-8 3 1-10zM675 605l-8 4 1-11zM659 612l-8 5 1-11zM636 626l-8 5 1-11zM621 636l0-11-7 5zM594 659l-1-12-6 7zM570 686l-7-5-5 7zM560 701l-4 7-7-6zM556 708l-7-6-5 8zM551 716l-7-6-4 7zM544 731l-7-6-4 8zM535 755l-3 7-7-6zM532 762l-2 8-7-6zM530 770l-7-6-2 8zM530 770l-1 8-8-6zM529 778l-8-6-1 8zM529 778l-1 8-8-6zM526 802l-8-6 0 7zM526 809l-8-6 0 8zM527 817l-9-6 0 7zM527 824l1 8-9-6zM528 832l1 7-9-6zM531 846l-10-6 2 7zM533 853l3 7-11-6zM536 860l2 6-10-5zM542 872l3 6-11-4zM553 890l4 5-8 2zM567 905l5 5-8 1zM572 910l-8 1 6 5zM840 614l-5-4 6-5zM828 607l7-6-6-3zM828 607l-6-4 7-5zM809 589l-7-2 6-8zM802 587l6-8-8-2zM802 587l-7-2 5-8zM788 583l-8-1 6-8zM757 580l6-9-8 0zM725 582l6-10-8 1zM725 582l-8 1-2-9zM717 583l-2-9-9 2zM708 585l-2-9-8 2zM676 595l-2-9-8 4zM668 598l-8 4-2-9zM660 602l-8 4-2-9zM644 610l-2-9-8 5zM636 615l-7 5-2-10zM629 620l-8 5-2-10zM607 636l-2-10-7 5zM587 654l-3-10-6 6zM587 654l-6 6-3-10zM549 702l-5 8-4-11zM540 717l-4-11-4 8zM533 733l-3 8-8-4zM525 756l-2 8-8-3zM520 780l-1 8-9-4zM518 803l0 8-9-4zM521 840l2 7-9-3zM528 861l2 6-9-3zM534 874l-11-3 4 6zM541 886l-11-3 4 6zM554 902l-11-2 5 5zM566 663l-6-6-6 6zM560 670l-5 7-6-7zM545 691l-5 8-6-7zM525 729l-3 8-7-6zM509 815l-9-6 1 8zM821 585l2-8-6-3zM821 585l-7-3 3-8zM808 579l2-8-7-2zM800 577l-7-2 3-8zM793 575l-7-1 2-8zM731 572l-8 1 2-9zM706 576l3-9-8 1zM842 587l-6-3 5-6zM592 625l-7 6-1-11zM566 650l-2-11-6 6zM659 573l-8 3-3-8zM784 548l-7-2 2-8zM624 580l-8 5-4-8zM521 678l-4 8-5-9zM756 536l-8 0 0-8zM667 551l-8 3-1-9zM492 715l-3 8-7-4zM479 862l3 6-10-6z"/>
<path fill="#bf24db" d="M740 652l-8 1 0-9zM588 813l1 8-9-6zM595 849l3 7-9 1zM614 890l-11 0 5 5zM596 870l-10-1 3 6zM588 743l-8-5-4 8zM588 743l-4 8-8-5zM658 665l-7 5-1-11zM814 637l3-8-6-3zM778 626l5-8-8-2zM771 625l4-9-8 0zM674 645l-3-8-8 4zM666 650l-3-9-8 4zM573 754l-5-11-3 8zM562 824l-9-3 1 7zM569 852l2 7-10-3zM578 872l-11-3 3 6zM586 883l4 5-12-2zM830 636l7-4-5-4zM830 636l-6-3 8-5zM817 629l9-5-7-3zM811 626l2-8-7-3zM804 623l-7-2 2-8zM797 621l2-8-7-2zM790 619l2-8-8-2zM744 616l1-9-8 0zM735 617l2-10-8 1zM727 618l-8 1 2-9zM719 619l2-9-8 2zM695 626l1-10-8 3zM687 630l-8 3 1-11zM679 633l1-11-8 4zM626 666l1-12-7 6zM619 672l1-12-7 6zM619 672l-6-6-6 6zM607 685l-6 7-7-7zM580 720l-7-6-4 7zM580 720l-4 8-7-7zM565 751l-7-7-3 8zM562 758l-7-6-3 8zM557 774l-7-6-2 7zM555 782l-1 8-8-7zM553 798l0 7-9-6zM557 842l1 7-10-5zM558 849l3 7-11-6zM561 856l-9 1 3 7zM564 862l-9 2 3 6zM564 862l3 7-9 1zM570 875l-8 1 4 6zM588 896l5 5-9 2zM832 628l3-8-6-4zM819 621l-6-3 3-8zM813 618l-7-3 3-8zM806 615l3-8-6-2zM799 613l-7-2 3-9zM792 611l-8-2 4-8zM777 608l-8-1 4-9zM753 606l4-9-8 0zM745 607l4-10-8 1zM737 607l-8 1 4-9zM729 608l-8 2 4-10zM721 610l-8 2 4-11zM713 612l4-11-8 2zM705 614l-9 2 4-10zM696 616l4-10-8 2zM680 622l4-11-8 3zM649 639l-8 5-4-8zM641 644l-7 5-4-8zM634 649l-4-8-7 5zM634 649l-7 5-4-8zM620 660l-7 6-4-8zM613 666l-6 6-5-8zM600 679l-4-9-6 7zM589 692l-5-8-6 7zM569 721l-4 8-6-9zM561 736l-6-8-3 7zM561 736l-3 8-6-9zM558 744l-6-9-4 8zM555 752l-7-9-3 8zM555 752l-3 8-7-9zM552 760l-2 8-7-9zM544 799l-8-9-1 8zM544 799l0 8-9-9zM544 807l0 7-9-1zM544 814l-9-1 1 8zM548 844l-9-1 2 7zM552 857l-9-1 3 7zM552 857l3 7-9-1zM558 870l-9-1 3 7zM558 870l4 6-10 0zM566 882l-10 0 4 5zM590 907l-11 0 6 4zM660 622l-8 4-1-9zM637 636l-1-10-8 5zM623 646l-2-10-7 5zM616 652l-2-11-7 6zM602 664l-2-11-6 6zM578 691l-5 7-3-12zM559 720l-3-12-5 8zM543 759l-8-4-3 7zM539 775l-9-5-1 8zM537 782l-1 8-8-4zM536 790l-8-4-1 8zM535 806l0 7-9-4zM535 813l1 8-9-4zM536 821l0 7-9-4zM536 828l-9-4 1 8zM539 843l2 7-10-4zM541 850l2 6-10-3zM543 856l3 7-10-3zM549 869l3 7-10-4zM552 876l4 6-11-4zM823 613l5-6-6-4zM823 613l-7-3 6-7zM795 602l7-7-7-2zM773 598l7-8-8-1zM773 598l-8 0 7-9zM765 598l7-9-8 0zM749 597l-1-8-8 0zM741 598l-8 1-1-9zM733 599l-1-9-8 1zM725 600l-1-9-8 1zM717 601l-1-9-8 2zM709 603l-9 3-1-9zM692 608l-8 3-1-9zM676 614l-8 4-1-9zM764 589l1-9-8 0zM748 589l-8 0 1-9zM716 592l-8 2 0-9zM683 602l-8 3 1-10zM607 647l-7 6 0-12zM600 653l0-12-7 6zM600 653l-6 6-1-12zM582 673l-7-6-6 7zM560 701l-7-6-4 7zM540 739l-7-6-3 8zM540 739l-3 8-7-6zM527 794l-1 8-8-6zM526 802l0 7-8-6zM526 809l1 8-9-6zM835 610l6-5-6-4zM816 592l5-7-7-3zM773 581l-8-1 6-8zM692 589l-8 3-2-9zM621 625l-7 5-2-10zM593 647l-6 7-3-10zM525 756l-8-3-2 8zM518 811l-9-4 0 8zM518 818l1 8-9-4zM534 874l3 6-10-3zM554 902l5 5-11-2zM510 822l-9-5 1 7zM518 858l3 6-11-5zM817 574l-7-3 6-6zM660 582l-1-9-8 3zM538 685l-4 7-3-12zM501 817l1 7-9-5zM708 558l5-10-8 1zM524 898l4 5-8-1zM503 880l4 6-9-2z"/>
<path fill="#c729d6" d="M654 713l-4-9-6 6zM606 768l-3 8-6-10zM612 864l-11-2 4 6zM724 655l0-9-8 2zM591 790l-2 8-8-6zM814 656l5-6-6-4zM814 656l-6-3 5-7zM787 646l5-8-7-2zM724 646l6-10-8 1zM684 660l-3-9-8 5zM684 660l-8 4-3-8zM633 696l-3-9-7 6zM601 738l-4 7-5-9zM574 782l-2 8-8-5zM571 821l-9-5 0 8zM571 821l1 7-10-4zM573 836l-10-5 2 7zM573 836l2 7-10-5zM589 875l-11-3 4 5zM603 890l5 5-7 3zM813 646l-7-3 8-6zM806 643l8-6-7-3zM806 643l-7-3 8-6zM770 634l-8-1 1-9zM730 636l1-10-9 2zM658 665l0-11-8 5zM651 670l-1-11-7 5zM617 700l-6 7-1-12zM826 644l-6-4 4-7zM807 634l-7-3 4-8zM800 631l4-8-7-2zM793 629l4-8-7-2zM793 629l-7-2 4-8zM786 627l-8-1 5-8zM763 624l-8 0 5-9zM747 625l5-10-8 1zM722 628l5-10-8 1zM714 630l-8 2 5-11zM616 688l-6 7-3-10zM584 731l-4 7-4-10zM580 738l-4-10-4 7zM576 746l-3 8-5-11zM566 777l-9-3-2 8zM562 801l-9-3 0 7zM562 801l0 8-9-4zM566 846l3 6-11-3zM574 865l-10-3 3 7zM574 865l4 7-11-3zM824 633l-7-4 9-5zM804 623l2-8-7-2zM775 616l-8 0 2-9zM760 615l1-9-8 0zM735 617l-8 1 2-10zM727 618l2-10-8 2zM711 621l-8 3 2-10zM703 624l2-10-9 2zM695 626l-8 4 1-11zM679 633l-8 4 1-11zM671 637l1-11-8 4zM663 641l1-11-8 4zM626 666l-7 6 1-12zM613 679l-6-7-7 7zM613 679l-6 6-7-6zM601 692l-7-7-5 7zM595 698l-6-6-6 7zM585 713l-7-7-5 8zM585 713l-5 7-7-6zM576 728l-7-7-4 8zM568 743l-7-7-3 8zM565 751l-3 7-7-6zM555 782l-7-7-2 8zM554 790l-1 8-8-7zM553 798l-8-7-1 8zM553 805l0 8-9-6zM553 813l-9-6 0 7zM558 849l-10-5 2 6zM570 875l4 6-8 1zM578 886l-8 2 4 5zM583 891l-9 2 5 5zM583 891l5 5-9 2zM588 896l-9 2 5 5zM837 632l-5-4 3-8zM826 624l-7-3 4-8zM819 621l4-8-7-3zM806 615l-7-2 4-8zM784 609l-7-1 4-9zM745 607l-8 0 4-9zM721 610l4-10-8 1zM705 614l4-11-9 3zM696 616l-8 3 4-11zM688 619l-8 3 4-11zM672 626l4-12-8 4zM664 630l-4-8-8 4zM664 630l-8 4-4-8zM656 634l-4-8-7 5zM656 634l-7 5-4-8zM627 654l-7 6-4-8zM613 666l-4-8-7 6zM607 672l-5-8-6 6zM594 685l-4-8-6 7zM594 685l-5 7-5-8zM589 692l-6 7-5-8zM583 699l-5 7-5-8zM578 706l-5-8-5 7zM578 706l-5 8-5-9zM573 714l-5-9-4 7zM573 714l-4 7-5-9zM565 729l-6-9-4 8zM550 768l-7-9-2 8zM548 775l-7-8-2 8zM548 775l-2 8-7-8zM545 791l-1 8-8-9zM544 807l-9-9 0 8zM544 807l-9-1 0 7zM544 814l0 8-8-1zM544 822l-8-1 0 7zM545 829l-9-1 1 8zM546 836l2 8-9-1zM562 876l4 6-10 0zM574 893l-10 0 5 5zM637 636l-7 5-2-10zM630 641l-7 5-2-10zM609 658l-7 6-2-11zM596 670l-6 7-2-11zM584 684l-6 7-2-12zM568 705l-4 7-4-11zM559 720l-4 8-8-5zM552 735l-8-4-4 8zM545 751l-8-4-2 8zM536 790l-1 8-8-4zM536 821l-9-4 0 7zM560 887l4 6-11-3zM579 907l-7 3 6 4zM835 620l5-6-5-4zM835 620l-6-4 6-6zM829 616l-6-3 5-6zM816 610l6-7-7-3zM816 610l-7-3 6-7zM757 597l7-8-8-1zM749 597l7-9-8 1zM741 598l-1-9-8 1zM700 606l-1-9-8 2zM815 600l8-6-7-2zM802 595l-7-2 7-6zM787 592l1-9-8-1zM787 592l-7-2 0-8zM748 589l1-9-8 0zM643 621l1-11-8 5zM643 621l-7 5 0-11zM628 631l-7 5 0-11zM537 747l-2 8-8-6zM528 786l-8-6-1 8zM528 832l-9-6 1 7zM572 910l6 4-8 2zM795 585l-7-2 5-8zM563 681l-3-11-5 7zM544 710l-4 7-4-11zM523 847l2 7-9-3zM509 800l-8-6-1 7zM763 571l-8 0 3-9zM717 565l-8 2-1-9zM621 603l-1-10-8 5zM515 731l-8-5-3 8zM502 824l1 7-9-5zM503 861l-9-1 3 7z"/>
<path fill="#cf2ed1" d="M684 721l-4-8-7 5zM702 690l3-11-8 4zM746 670l-8 1 6-10zM641 726l-3-9-6 6zM762 669l6-8-8-1zM783 663l4-8-7-2zM664 692l-3-8-7 6zM599 830l1 7-9-2zM668 679l0-10-7 5zM597 766l-7-5-3 8zM597 766l-3 8-7-5zM624 888l-10 2 6 5zM604 881l-10-1 4 6zM801 650l-7-2 5-8zM794 648l5-8-7-2zM794 648l-7-2 5-8zM764 642l-8 0 6-9zM756 642l-8 0 6-9zM692 656l-3-8-8 3zM610 723l-5 7-4-9zM584 776l-6-9-2 7zM583 784l-9-2-2 8zM580 800l-9-2 0 8zM581 830l-9-2 1 8zM582 837l-9-1 2 7zM584 844l-9-1 2 7zM586 851l-9-1 2 6zM589 857l3 7-10-1zM592 864l-10-1 4 6zM592 864l4 6-10-1zM592 736l-4 7-8-5zM579 856l3 7-11-4zM582 863l-11-4 3 6zM586 869l3 6-11-3zM598 886l5 4-8 3zM608 895l-7 3 5 4zM799 640l-7-2 8-7zM792 638l8-7-7-2zM792 638l-7-2 8-7zM778 635l-8-1 1-9zM754 633l-8 1 1-9zM730 636l-8 1 0-9zM705 642l1-10-8 3zM689 648l1-10-9 3zM673 656l-7 4 0-10zM666 660l0-10-8 4zM666 660l-8 5 0-11zM651 670l-8 5 0-11zM636 681l-6 6-1-11zM630 687l-1-11-7 6zM611 707l-1-12-6 6zM826 644l4-8-6-3zM820 640l4-7-7-4zM786 627l4-8-7-1zM778 626l-7-1 4-9zM771 625l-8-1 4-8zM763 624l4-8-7-1zM755 624l-8 1 5-10zM747 625l-8 0 5-9zM731 626l4-9-8 1zM714 630l5-11-8 2zM690 638l-3-8-8 3zM674 645l-8 5-3-9zM636 670l-7 6-3-10zM622 682l-3-10-6 7zM622 682l-6 6-3-9zM610 695l-6 6-3-9zM599 708l-4-10-5 8zM599 708l-6 8-3-10zM593 716l-3-10-5 7zM589 723l-4-10-5 7zM589 723l-5 8-4-11zM573 754l-3 8-8-4zM570 762l-8-4-3 8zM570 762l-2 7-9-3zM568 769l-9-3-2 8zM568 769l-2 8-9-3zM564 785l-9-3-1 8zM564 785l-1 8-9-3zM563 793l-9-3-1 8zM562 809l-9-4 0 8zM562 816l0 8-9-3zM563 831l-9-3 1 7zM565 838l-10-3 2 7zM565 838l1 8-9-4zM566 846l-9-4 1 7zM571 859l-10-3 3 6zM582 877l-12-2 4 6zM582 877l4 6-12-2zM590 888l-12-2 5 5zM590 888l5 5-12-2zM595 893l-7 3 5 5zM811 626l-7-3 2-8zM790 619l-7-1 1-9zM783 618l1-9-7-1zM783 618l-8-2 2-8zM775 616l2-8-8-1zM767 616l-7-1 1-9zM760 615l-8 0 1-9zM744 616l-9 1 2-10zM711 621l2-9-8 2zM687 630l1-11-8 3zM663 641l-8 4 1-11zM655 645l-7 5 1-11zM648 650l1-11-8 5zM648 650l-8 5 1-11zM640 655l1-11-7 5zM633 661l-7 5 1-12zM619 672l-6 7-6-7zM607 685l-7-6-6 6zM590 706l-7-7-5 7zM590 706l-5 7-7-7zM572 735l-7-6-4 7zM572 735l-4 8-7-7zM559 766l-7-6-2 8zM559 766l-2 8-7-6zM557 774l-2 8-7-7zM554 828l-10-6 1 7zM555 835l-10-6 1 7zM555 835l2 7-11-6zM561 856l3 6-9 2zM574 881l-8 1 4 6zM593 901l6 4-9 2zM599 905l-9 2 6 4zM799 613l4-8-8-3zM769 607l4-9-8 0zM769 607l-8-1 4-8zM761 606l4-8-8-1zM729 608l4-9-8 1zM713 612l-8 2 4-11zM688 619l4-11-8 3zM680 622l-8 4 4-12zM664 630l4-12-8 4zM546 783l-1 8-8-9zM545 829l1 7-9 0zM546 836l-9 0 2 7zM548 844l2 6-9 0zM660 622l-1-10-8 5zM645 631l-8 5-1-10zM548 743l-3 8-8-4zM545 751l-2 8-8-4zM537 836l-9-4 1 7zM795 593l-8-1 1-9zM651 617l-8 4 1-11zM621 636l-7 5 0-11zM607 647l0-11-7 5zM529 839l-9-6 1 7zM536 860l-11-6 3 7zM841 605l5-6-6-4zM537 880l4 6-11-3zM522 737l-7-6-3 8zM510 822l1 8-9-6zM548 905l5 5-8 1zM690 581l-8 2 2-10zM674 586l2-10-8 3zM823 577l6-6-7-3zM636 594l-8 5-1-10zM543 678l-5 7-2-12zM531 896l-11-4 4 6z"/>
<path fill="#d733cc" d="M742 714l4-9-8 1zM702 729l-4-8-8 5zM636 792l-9-2-1 8zM802 701l5-7-6-4zM633 848l-11-2 3 6zM665 714l-5-7-6 6zM652 727l-5-8-6 7zM722 674l-2-9-9 3zM714 676l-9 3-2-8zM667 701l-7 6-3-9zM618 858l-10-1 4 7zM626 869l-10 0 4 6zM777 671l6-8-7-1zM810 674l-6-3 3-8zM804 671l3-8-6-3zM744 661l5-10-9 1zM703 671l5-11-8 3zM703 671l-8 3 5-11zM687 678l-8 5-3-9zM664 692l-7 6-3-8zM603 776l-6-10-3 8zM599 792l-1 8-9-2zM598 823l1 7-9-2zM602 844l3 7-10-2zM605 851l3 6-10-1zM616 869l-11-1 4 6zM620 875l-11-1 4 5zM814 666l6-6-6-4zM814 666l-7-3 7-7zM780 653l7-7-7-2zM772 652l-8 0 8-9zM757 651l7-9-8 0zM740 652l0-9-8 1zM724 655l-8 2 0-9zM716 657l-8 3 0-10zM668 679l-7 5 0-10zM634 708l-1-12-6 7zM628 714l-7-5-6 7zM622 721l-5 7-7-5zM612 736l-4 7-7-5zM608 743l-7-5-4 7zM608 743l-4 8-7-6zM600 759l-7-6-3 8zM589 798l-8-6-1 8zM588 813l-8-5 0 7zM589 821l1 7-10-5zM598 856l-9 1 3 7zM605 868l-9 2 4 5zM618 884l-9 2 5 4zM600 875l4 6-10-1zM609 886l5 4-11 0zM614 890l6 5-12 0zM820 660l-6-4 5-6zM808 653l5-7-7-3zM801 650l5-7-7-3zM780 644l-8-1 6-8zM772 643l6-8-8-1zM756 642l6-9-8 0zM748 642l6-9-8 1zM732 644l6-10-8 2zM724 646l-8 2 6-11zM716 648l6-11-8 2zM708 650l-8 3-3-8zM668 669l-2-9-8 5zM668 669l-7 5-3-9zM661 674l-3-9-7 5zM653 679l-2-9-8 5zM627 703l-6 6-4-9zM610 723l-4-9-5 7zM605 730l-4-9-5 7zM590 761l-6-10-3 8zM587 769l-6-10-3 8zM580 808l0 7-9-2zM580 815l-9-2 0 8zM580 815l0 8-9-2zM581 830l1 7-9-1zM589 857l-10-1 3 7zM581 759l-8-5-3 8zM578 767l-2 7-8-5zM572 790l-1 8-8-5zM571 798l-8-5-1 8zM571 813l0 8-9-5zM575 843l2 7-11-4zM577 850l2 6-10-4zM582 863l4 6-12-4zM594 880l-12-3 4 6zM594 880l4 6-8 2zM825 653l7-5-6-4zM825 653l-6-3 7-6zM819 650l-6-4 7-6zM813 646l7-6-6-3zM785 636l8-7-7-2zM778 635l8-8-8-1zM778 635l0-9-7-1zM762 633l1-9-8 0zM754 633l1-9-8 1zM746 634l-8 0 1-9zM738 634l-8 2 1-10zM722 637l0-9-8 2zM697 645l-8 3 1-10zM681 651l-8 5 1-11zM643 675l-7 6 0-11zM623 693l-6 7-1-12zM611 707l-5 7-2-13zM832 648l-6-4 4-8zM820 640l-6-3 3-8zM814 637l-7-3 4-8zM755 624l5-9-8 0zM739 625l-8 1 4-9zM731 626l-9 2 5-10zM722 628l-8 2 5-11zM706 632l5-11-8 3zM698 635l5-11-8 2zM681 641l-2-8-8 4zM681 641l-7 4-3-8zM666 650l-8 4-3-9zM658 654l-8 5-2-9zM650 659l-2-9-8 5zM650 659l-7 5-3-9zM643 664l-3-9-7 6zM636 670l-3-9-7 5zM584 731l-4-11-4 8zM573 754l-8-3-3 7zM566 777l-2 8-9-3zM563 793l-1 8-9-3zM563 831l2 7-10-3zM569 852l-11-3 3 7zM578 872l4 5-12-2zM586 883l-12-2 4 5zM595 893l-12-2 5 5zM595 893l6 5-8 3zM817 629l-6-3 8-5zM797 621l-7-2 2-8zM767 616l2-9-8-1zM752 615l-8 1 1-9zM703 624l-8 2 1-10zM671 637l-8 4 1-11zM633 661l1-12-7 5zM601 692l-6 6-6-6zM595 698l-5 8-7-7zM576 728l-4 7-7-6zM557 842l-11-6 2 8zM567 869l-9 1 4 6zM578 886l5 5-9 2zM792 611l3-9-7-1zM623 646l-7 6-2-11zM555 728l-8-5-3 8zM659 612l1-10-8 4zM545 878l-11-4 3 6zM835 610l-7-3 7-6zM822 603l7-5-6-4zM521 772l-1 8-9-4zM572 656l-6-6-6 7zM642 601l-8 5 2-12z"/>
<path fill="#df38c7" d="M715 740l0-9-8 4zM634 807l-9-1-1 7zM796 697l5-7-6-3zM736 689l7-10-8 1zM736 689l-1-9-9 2zM626 798l-9-4-1 8zM686 699l4-12-8 4zM646 734l-5 7-5-8zM617 794l-7-8-2 8zM615 810l-8-1 0 8zM632 864l-10 0 4 5zM730 672l6-10-8 1zM667 701l-3-9-7 6zM647 719l-6 7-3-9zM610 786l-7-10-2 8zM608 794l-1 7-9-1zM607 801l-9-1 0 8zM607 817l-10-2 1 8zM610 838l-10-1 2 7zM612 845l-10-1 3 7zM622 864l4 5-10 0zM636 879l-11 1 5 4zM642 883l-12 1 6 4zM811 685l-6-4 5-7zM805 681l5-7-6-3zM754 669l-8 1 6-10zM790 665l4-8-7-2zM752 660l5-9-8 0zM744 661l-8 1 4-10zM736 662l-8 1 4-10zM728 663l4-10-8 2zM679 683l-3-9-8 5zM672 687l-8 5-3-8zM657 698l-7 6-3-9zM650 704l-3-9-7 6zM638 717l-6 6-4-9zM626 730l-4-9-5 7zM626 730l-5 8-4-10zM617 745l-5-9-4 7zM609 761l-5-10-4 8zM606 768l-6-9-3 7zM598 800l0 8-9-2zM598 808l-9-2-1 7zM600 837l2 7-9-1zM608 857l4 7-11-2zM625 880l-12-1 5 5zM630 884l-12 0 6 4zM820 670l-6-4 6-6zM807 663l7-7-6-3zM807 663l-6-3 7-7zM801 660l-7-3 7-7zM794 657l-7-2 7-7zM787 655l7-7-7-2zM780 653l-8-1 8-8zM764 652l8-9-8-1zM764 652l-7-1 7-9zM749 651l-9 1 0-9zM732 653l-8 2 0-9zM708 660l0-10-8 3zM700 663l0-10-8 3zM700 663l-8 3 0-10zM692 666l-8 4 0-10zM684 670l0-10-8 4zM676 674l0-10-8 5zM661 684l0-10-8 5zM647 695l-1-11-6 6zM634 708l-6 6-1-11zM617 728l-5 8-7-6zM612 736l-7-6-4 8zM604 751l-4 8-7-6zM600 759l-3 7-7-5zM594 774l-7-5-3 7zM592 782l-1 8-8-6zM589 806l-1 7-8-5zM590 828l1 7-10-5zM593 843l-11-6 2 7zM593 843l-9 1 2 7zM593 843l2 6-9 2zM598 856l3 6-9 2zM605 868l4 6-9 1zM613 879l5 5-9 2zM596 870l4 5-11 0zM600 875l-11 0 5 5zM620 895l-12 0 6 4zM787 646l-7-2 5-8zM780 644l5-8-7-1zM764 642l6-8-8-1zM748 642l-8 1 6-9zM740 643l-8 1 6-10zM732 644l-8 2 6-10zM708 650l-3-8-8 3zM700 653l-3-8-8 3zM692 656l-8 4-3-9zM661 674l-8 5-2-9zM653 679l-7 5-3-9zM646 684l-6 6-4-9zM640 690l-4-9-6 6zM633 696l-6 7-4-10zM621 709l-4-9-6 7zM615 716l-5 7-4-9zM605 730l-4 8-5-10zM601 738l-5-10-4 8zM597 745l-5-9-4 7zM587 769l-3 7-6-9zM584 776l-1 8-9-2zM581 792l-9-2-1 8zM580 800l0 8-9-2zM580 808l-9-2 0 7zM601 721l-5 7-7-5zM596 728l-4 8-8-5zM584 751l-8-5-3 8zM581 759l-3 8-8-5zM576 774l-2 8-8-5zM574 782l-8-5-2 8zM572 790l-8-5-1 8zM571 798l0 8-9-5zM571 813l-9-4 0 7zM577 850l-11-4 3 6zM579 856l-10-4 2 7zM586 869l-12-4 4 7zM594 880l-8 3 4 5zM598 886l-8 2 5 5zM603 890l-8 3 6 5zM608 895l6 4-8 3zM819 650l7-6-6-4zM799 640l8-6-7-3zM746 634l1-9-8 0zM738 634l1-9-8 1zM722 637l-8 2 0-9zM714 639l-9 3 1-10zM697 645l1-10-8 3zM681 651l0-10-7 4zM673 656l1-11-8 5zM643 675l0-11-7 6zM623 693l-1-11-6 6zM606 714l-2-13-5 7zM606 714l-7-6-6 8zM698 635l-3-9-8 4zM698 635l-8 3-3-8zM690 638l-9 3-2-8zM629 676l-3-10-7 6zM629 676l-7 6-3-10zM616 688l-3-9-6 6zM604 701l-3-9-6 6zM580 738l-4 8-4-11zM576 746l-4-11-4 8zM562 824l1 7-9-3zM601 898l-8 3 6 4zM601 898l5 4-7 3zM824 633l8-5-6-4zM568 743l-3 8-7-7zM607 672l-7 7-4-9zM555 864l-9-1 3 6zM555 864l3 6-9-1zM568 705l-3-12-5 8zM564 712l-4-11-4 7zM574 903l-12-3 5 5zM802 595l7-6-7-2zM724 591l1-9-8 1zM708 594l-9 3 1-10zM533 853l-10-6 2 7zM692 589l-2-8-8 2zM750 562l-8 0-2-8z"/>
<path fill="#e73dc2" d="M756 740l-8 0 7-9zM679 795l-8-2-1 7zM677 836l-9 3 5 6zM664 789l-3 8-7-7zM678 850l5 4-10 3zM680 759l-5-7-6 7zM666 781l-6-7-3 8zM780 719l-7-2 4-9zM796 718l-6-4 8-6zM646 834l-9 3 3 6zM649 841l-9 2 3 6zM644 768l-3 8-6-9zM641 776l-6-9-3 7zM640 843l-10-1 3 6zM652 860l-12 0 5 5zM798 708l4-7-6-4zM670 733l-6 6-4-8zM789 694l6-7-7-3zM789 694l-7-3 6-7zM775 689l-7-1 6-8zM736 689l-8 2-2-9zM728 691l-2-9-8 2zM688 708l-2-9-7 4zM649 744l-3-10-5 7zM635 767l-3 7-8-3zM626 798l-1 8-9-4zM626 828l-10-3 2 7zM640 860l-8 4 5 5zM645 865l5 5-8 4zM801 690l10-5-6-4zM801 690l-6-3 10-6zM788 684l3-9-6-2zM781 682l4-9-8-2zM743 679l-8 1 3-9zM735 680l3-9-8 1zM710 687l4-11-9 3zM702 690l-8 4 3-11zM665 714l-7 6-4-7zM658 720l-6 7-5-8zM641 741l-5-8-5 7zM636 748l-5-8-5 7zM624 771l-6-9-3 8zM624 771l-3 8-6-9zM621 779l-6-9-3 8zM619 786l-7-8-2 8zM616 802l-1 8-8-1zM616 825l-9-1 1 7zM616 825l2 7-10-1zM618 832l-10-1 2 7zM619 839l3 7-10-1zM622 846l-10-1 3 7zM625 852l-10 0 3 6zM625 852l3 6-10 0zM628 858l-10 0 4 6zM632 864l5 5-11 0zM642 874l-11 0 5 5zM642 874l6 4-12 1zM648 878l-12 1 6 4zM730 672l-8 2 6-11zM722 674l-8 2-3-8zM690 687l-3-9-8 5zM690 687l-8 4-3-8zM682 691l-3-8-7 4zM626 747l-4 8-5-10zM615 770l-3 8-6-10zM607 824l-9-1 1 7zM615 852l3 6-10-1zM618 858l4 6-10 0zM622 864l-10 0 4 5zM631 874l5 5-11 1zM811 685l5-7-6-4zM791 675l-6-2 5-8zM785 673l5-8-7-2zM770 670l6-8-8-1zM770 670l-8-1 6-8zM746 670l6-10-8 1zM816 678l4-8-6-4zM810 674l4-8-7-3zM797 668l4-8-7-3zM790 665l-7-2 4-8zM783 663l-7-1 4-9zM776 662l4-9-8-1zM776 662l-8-1 4-9zM768 661l4-9-8 0zM768 661l-8-1 4-8zM752 660l-8 1 5-10zM720 665l4-10-8 2zM720 665l-9 3 5-11zM695 674l-8 4-3-8zM687 678l-3-8-8 4zM679 683l-7 4-4-8zM672 687l-4-8-7 5zM657 698l-3-8-7 5zM644 710l-6 7-4-9zM638 717l-4-9-6 6zM632 723l-6 7-4-9zM617 745l-4 8-5-10zM609 761l-3 7-6-9zM603 776l-9-2-2 8zM603 776l-2 8-9-2zM601 784l-9-2-1 8zM601 784l-2 8-8-2zM599 792l-8-2-2 8zM597 815l-9-2 1 8zM598 823l-9-2 1 7zM600 837l-9-2 2 8zM608 857l-10-1 3 6zM612 864l4 5-11-1zM620 875l5 5-12-1zM625 880l5 4-12 0zM801 660l7-7-7-3zM794 657l7-7-7-2zM787 655l-7-2 7-7zM757 651l-1-9-8 0zM732 653l0-9-8 2zM716 657l0-9-8 2zM708 660l-8 3 0-10zM692 666l0-10-8 4zM676 674l-8 5 0-10zM661 684l-7 6-1-11zM654 690l-1-11-7 5zM617 728l-7-5-5 7zM591 790l-8-6-2 8zM589 798l0 8-9-6zM589 806l-9-6 0 8zM589 821l-9-6 0 8zM595 849l-9 2 3 6zM601 862l-9 2 4 6zM624 888l5 5-9 2zM820 660l5-7-6-3zM808 653l-7-3 5-7zM772 643l-8-1 6-8zM700 653l-8 3-3-8zM646 684l-3-9-7 6zM640 690l-7 6-3-9zM621 709l-6 7-4-9zM593 753l-5-10-4 8zM593 753l-3 8-6-10zM590 761l-3 8-6-10zM584 776l-8-2-2 8zM583 784l-2 8-9-2zM581 792l-1 8-9-2zM580 823l-9-2 1 7zM580 823l1 7-9-2zM596 728l-7-5-5 8zM592 736l-8-5-4 7zM578 767l-8-5-2 7zM571 806l-9-5 0 8zM589 875l5 5-12-3zM785 636l-7-1 8-8zM762 633l-8 0 1-9zM714 639l0-9-8 2zM689 648l-8 3 0-10zM630 687l-7 6-1-11zM706 632l-8 3 5-11zM604 701l-5 7-4-10zM562 816l-9-3 0 8zM554 790l-8-7-1 8zM561 856l-11-6 2 7zM761 606l-8 0 4-9zM627 654l-4-8-7 6zM583 699l-5-8-5 7zM569 721l-5-9-5 8zM574 903l5 4-12-2zM815 600l-6-2 7-6zM699 597l1-10-8 2zM667 609l1-11-8 4zM531 846l2 7-10-6zM780 582l-7-1 5-8zM518 818l-9-3 1 7z"/>
<path fill="#ef42bd" d="M734 791l1-9-7 5zM748 774l3-8-7-1zM748 757l6-8-8-1zM722 755l-8 4 2-10zM692 785l-3 8-7-6zM716 749l-7 4-2-8zM755 731l8-8-8-1zM660 812l-9-6 0 7zM783 731l-6-3 9-6zM709 725l-3-8-8 4zM694 734l-4-8-7 6zM669 759l-4-8-6 7zM652 821l2 7-10-1zM654 828l-10-1 2 7zM659 841l-10 0 3 6zM746 705l-8 1 1-9zM722 710l1-9-9 3zM690 726l-7 6 1-11zM683 732l-6 6 0-11zM655 766l-4 8-7-6zM651 774l-3 7-7-5zM643 820l1 7-10-5zM652 847l-9 2 4 6zM652 847l4 6-9 2zM641 776l-3 8-6-10zM638 784l-6-10-3 8zM636 792l-2 8-8-2zM634 800l-8-2-1 8zM634 807l-1 8-9-2zM634 822l1 8-9-2zM637 837l3 6-10-1zM647 855l5 5-12 0zM771 697l4-8-7-1zM763 696l-8 0 5-9zM755 696l5-9-8 0zM747 696l-8 1 5-9zM714 704l-3-8-8 3zM706 707l-3-8-8 4zM691 716l-3-8-8 5zM802 701l-6-4 5-7zM796 697l-7-3 6-7zM782 691l6-7-7-2zM775 689l6-7-7-2zM768 688l6-8-8-1zM744 688l7-10-8 1zM728 691l-9 2-1-9zM719 693l-1-9-8 3zM703 699l-8 4-1-9zM680 713l-1-10-7 6zM667 724l-2-10-7 6zM654 737l-2-10-6 7zM654 737l-5 7-3-10zM639 759l-4 8-8-4zM629 782l-8-3-2 7zM625 806l-1 7-9-3zM633 848l3 7-11-3zM636 855l4 5-8 4zM640 860l5 5-8 4zM650 870l-8 4 6 4zM807 694l-6-4 10-5zM795 687l-7-3 3-9zM781 682l-7-2 3-9zM774 680l3-9-7-1zM759 678l-8 0 3-9zM743 679l3-9-8 1zM735 680l-9 2 4-10zM726 682l-8 2 4-10zM718 684l4-10-8 2zM694 694l3-11-7 4zM694 694l-8 5 4-12zM686 699l-7 4-5-7zM679 703l-5-7-7 5zM658 720l-4-7-7 6zM636 748l-5 7-5-8zM631 755l-4 8-5-8zM627 763l-3 8-6-9zM621 779l-2 7-7-8zM616 802l-9-1 0 8zM618 832l1 7-9-1zM622 846l3 6-10 0zM637 869l-11 0 5 5zM637 869l5 5-11 0zM738 671l6-10-8 1zM738 671l-8 1 6-10zM714 676l-3-8-8 3zM697 683l-2-9-8 4zM682 691l-8 5-2-9zM674 696l-7 5-3-9zM660 707l-3-9-7 6zM654 713l-7 6-3-9zM641 726l-5 7-4-10zM631 740l-5 7-5-9zM618 762l-3 8-6-9zM612 778l-6-10-3 8zM610 786l-9-2-2 8zM610 786l-2 8-9-2zM607 809l-9-1-1 7zM607 809l0 8-10-2zM607 817l0 7-9-1zM608 831l2 7-10-1zM610 838l2 7-10-1zM615 852l-10-1 3 6zM626 869l5 5-11 1zM631 874l-11 1 5 5zM791 675l6-7-7-3zM816 678l-6-4 4-8zM797 668l-7-3 4-8zM760 660l-8 0 5-9zM695 674l5-11-8 3zM650 704l-6 6-4-9zM621 738l-4 7-5-9zM613 753l-5-10-4 8zM598 808l-1 7-9-2zM599 830l-9-2 1 7zM602 844l-9-1 2 6zM772 652l8-8-8-1zM757 651l-8 0-1-9zM749 651l-1-9-8 1zM654 690l-7 5-1-11zM647 695l-7 6 0-11zM590 828l-10-5 1 7zM591 835l2 8-11-6zM609 874l4 5-9 2zM609 886l-11 0 5 4zM740 643l6-9-8 0zM716 648l-2-9-9 3zM584 844l2 7-9-1zM586 851l3 6-10-1zM601 721l-8-5-4 7zM576 774l-8-5-2 8zM571 806l0 7-9-4zM807 634l4-8-7-3zM658 654l-3-9-7 5zM643 664l-7 6-3-9zM640 655l-7 6 1-12zM554 828l1 7-10-6zM574 881l4 5-8 2zM620 660l-4-8-7 6zM600 679l-6 6-4-8zM550 850l2 7-9-1zM566 882l4 6-10-1zM584 903l6 4-11 0zM645 631l-2-10-7 5zM549 869l-11-3 4 6zM809 607l6-7-6-2zM570 686l-5 7-7-5z"/>
<path fill="#f747b8" d="M742 790l1-8-8 0zM735 782l-3-6-8 4zM723 793l-9 1-2 8zM713 781l-4-7-6 7zM708 788l-5-7-4 8zM740 757l-2-8-8 2zM701 771l-5 7-6-6zM687 801l0 7-9-5zM687 808l-9 3 1 7zM678 811l1 7-10-2zM679 818l-10-2 2 7zM681 825l-10-2 2 7zM688 836l-7 5 5 5zM776 748l-6-4 6-7zM740 740l-8 2 7-10zM732 742l7-10-8 2zM696 765l-6 7-3-9zM690 772l-5 8-3-10zM776 737l7-6-6-3zM763 732l7-7-7-2zM747 731l0-9-8 1zM731 734l0-9-8 3zM723 737l0-9-8 3zM723 737l-8 3 0-9zM682 770l-7-4-5 7zM671 793l-7-4-3 8zM681 841l5 5-8 4zM666 781l-2 8-7-7zM661 797l-7-7-2 8zM661 797l-1 7-8-6zM660 804l0 8-9-6zM660 812l1 8-9 1zM661 820l-9 1 2 7zM663 827l-9 1 2 7zM668 839l5 6-10 2zM678 850l-11 2 6 5zM770 725l-7-2 3-8zM763 723l-8-1 3-8zM731 725l-8 3 3-10zM692 746l-5-6-6 6zM773 717l4-9-7-2zM773 717l-7-2 4-9zM758 714l-8 0 4-9zM726 718l-9 3 5-11zM694 734l-7 6-4-8zM687 740l-6 6-4-8zM681 746l-4-8-7 6zM675 752l-5-8-5 7zM664 767l-4 7-5-8zM660 774l-3 8-6-8zM651 813l1 8-9-1zM656 835l3 6-10 0zM663 847l4 5-11 1zM784 711l-7-3 8-6zM777 708l8-6-7-3zM777 708l-7-2 8-7zM770 706l8-7-7-2zM770 706l-8-1 9-8zM762 705l1-9-8 0zM746 705l1-9-8 1zM730 708l1-9-8 2zM714 713l0-9-8 3zM706 717l-8 4 1-10zM698 721l-8 5 1-10zM690 726l1-10-7 5zM677 738l0-11-7 6zM677 738l-7 6 0-11zM670 744l0-11-6 6zM670 744l-6-5-6 7zM665 751l-7-5-5 7zM665 751l-6 7-6-5zM659 758l-6-5-5 8zM659 758l-4 8-7-5zM651 774l-7-6-3 8zM648 781l-7-5-3 8zM644 827l2 7-9 3zM649 841l3 6-9 2zM656 853l-9 2 5 5zM661 858l-9 2 5 5zM638 784l-9-2-2 8zM633 815l1 7-9-1zM634 822l-9-1 1 7zM635 830l-9-2 2 7zM643 849l-10-1 3 7zM643 849l4 6-11 0zM791 705l5-8-7-3zM791 705l-6-3 4-8zM771 697l-8-1 5-8zM739 697l-8 2 5-10zM723 701l-9 3 5-11zM691 716l-7 5-4-8zM684 721l-7 6-4-9zM677 727l-4-9-6 6zM664 739l-4-8-6 6zM658 746l-4-9-5 7zM653 753l-5 8-4-10zM648 761l-4 7-5-9zM782 691l-7-2 6-7zM768 688l-8-1 6-8zM760 687l-8 0 7-9zM719 693l-8 3-1-9zM695 703l-7 5-2-9zM688 708l-8 5-1-10zM673 718l-6 6-2-10zM660 731l-2-11-6 7zM660 731l-6 6-2-10zM649 744l-5 7-3-10zM632 774l-3 8-8-3zM629 782l-2 8-8-4zM627 790l-1 8-9-4zM625 806l-9-4-1 8zM624 813l-9-3 1 7zM624 813l1 8-9-4zM625 821l-9-4 0 8zM625 821l1 7-10-3zM626 828l2 7-10-3zM630 842l-11-3 3 7zM636 855l-11-3 3 6zM636 855l-8 3 4 6zM650 870l6 4-8 4zM795 687l10-6-7-3zM795 687l3-9-7-3zM788 684l-7-2 4-9zM766 679l4-9-8-1zM766 679l-7-1 3-9zM759 678l3-9-8 0zM751 678l-8 1 3-9zM726 682l4-10-8 2zM718 684l-8 3 4-11zM679 703l-7 6-5-8zM672 709l-7 5-5-7zM652 727l-6 7-5-8zM646 734l-5-8-5 7zM641 741l-5 7-5-8zM631 755l-5-8-4 8zM619 786l-2 8-7-8zM617 794l-1 8-9-1zM616 817l-9 0 0 7zM619 839l-9-1 2 7zM628 858l4 6-10 0zM647 719l-3-9-6 7zM636 733l-5 7-5-10zM622 755l-5-10-4 8zM612 778l-2 8-7-10zM607 824l1 7-9-1zM612 845l3 7-10-1zM798 678l6-7-7-3zM754 669l6-9-8 0zM711 668l5-11-8 3zM711 668l-8 3 5-11zM632 723l-4-9-6 7zM621 738l-4-10-5 8zM613 753l-4 8-5-10zM598 800l-9-2 0 8zM616 869l4 6-11-1zM640 701l0-11-7 6zM640 701l-6 7-1-12zM594 774l-2 8-8-6zM618 884l6 4-10 2zM627 703l-4-10-6 7zM582 837l2 7-9-1zM572 828l1 8-10-5zM610 695l-3-10-6 7zM562 809l0 7-9-3zM593 901l-9 2 6 4zM579 898l5 5-10 0z"/>
<path fill="#ff4cb3" d="M735 782l5-9-8 3zM754 777l4-9-7-2zM740 773l-8 3 3-10zM751 766l-7-1 4-8zM705 796l-9 0-1 8zM703 781l-7-3-4 7zM699 789l-7-4-3 8zM695 804l-8-3 0 7zM696 812l-9 4 3 6zM698 819l-8 3 3 6zM768 764l-6-4 6-7zM755 758l-7-1 6-8zM748 757l-8 0 6-9zM740 757l6-9-8 1zM723 763l-1-8-8 4zM761 750l9-6-7-2zM738 749l-8 2 2-9zM707 765l-5-6-6 6zM687 801l-8-6-1 8zM687 808l-9-5 0 8zM687 816l3 6-9 3zM681 825l3 6-11-1zM684 831l-7 5 4 5zM770 744l-7-2 7-8zM756 740l7-8-8-1zM724 745l-8 4-1-9zM709 753l-2-8-7 5zM702 759l-2-9-7 6zM702 759l-6 6-3-9zM685 780l-3-10-4 7zM685 780l-7-3-4 8zM682 787l-3 8-8-2zM782 741l-6-4 7-6zM763 732l-8-1 8-8zM747 731l-8 1 0-9zM739 732l0-9-8 2zM739 732l-8 2 0-9zM715 740l-8 5 0-10zM693 756l-1-10-6 6zM682 770l-4 7-8-4zM678 777l-8-4-4 8zM674 785l-8-4-2 8zM670 800l-9-3-1 7zM669 808l0 8-9-4zM669 816l-9-4 1 8zM673 830l-8 3 3 6zM673 830l4 6-9 3zM677 836l4 5-8 4zM661 820l2 7-9 1zM663 827l2 6-9 2zM673 845l-10 2 4 5zM777 728l9-6-6-3zM770 725l3-8-7-2zM763 723l3-8-8-1zM755 722l-8 0 3-8zM739 723l-8 2 3-9zM723 728l-8 3 2-10zM715 731l2-10-8 4zM707 735l-8 5 3-11zM699 740l3-11-8 5zM699 740l-7 6-5-6zM686 752l-6 7-5-7zM680 759l-5 7-6-7zM670 773l-4 8-6-7zM786 722l-6-3 4-8zM780 719l4-8-7-3zM766 715l4-9-8-1zM758 714l4-9-8 0zM750 714l4-9-8 0zM734 716l4-10-8 2zM726 718l4-10-8 2zM702 729l-8 5-4-8zM687 740l-4-8-6 6zM681 746l-6 6-5-8zM669 759l-5 8-5-9zM660 774l-5-8-4 8zM657 782l-6-8-3 7zM657 782l-3 8-6-9zM654 790l-6-9-3 8zM652 821l-9-1 1 7zM654 828l2 7-10-1zM656 835l-10-1 3 7zM667 852l6 5-12 1zM762 705l9-8-8-1zM754 705l-8 0 1-9zM738 706l1-9-8 2zM738 706l-8 2 1-9zM714 713l-8 4 0-10zM706 717l0-10-7 4zM698 721l1-10-8 5zM683 732l1-11-7 6zM655 766l-7-5-4 7zM648 781l-3 8-7-5zM645 789l-7-5-2 8zM644 797l-1 8-9-5zM643 820l-10-5 1 7zM644 827l-10-5 1 8zM656 853l5 5-9 2zM661 858l5 4-9 3zM638 784l-2 8-9-2zM634 800l0 7-9-1zM637 837l-9-2 2 7zM640 843l3 6-10-1zM657 865l-7 5 6 4zM657 865l6 4-7 5zM785 702l-7-3 4-8zM778 699l4-8-7-2zM778 699l-7-2 4-8zM763 696l5-8-8-1zM755 696l-8 0 5-9zM739 697l5-9-8 1zM723 701l5-10-9 2zM714 704l-8 3-3-8zM706 707l-7 4-4-8zM699 711l-4-8-7 5zM677 727l-7 6-3-9zM658 746l-5 7-4-9zM644 768l-5-9-4 8zM760 687l6-8-7-1zM752 687l7-9-8 0zM752 687l-8 1 7-10zM744 688l-8 1 7-10zM711 696l-1-9-8 3zM711 696l-8 3-1-9zM680 713l-7 5-1-9zM673 718l-1-9-7 5zM667 724l-7 7-2-11zM644 751l-3-10-5 7zM639 759l-8-4-4 8zM635 767l-8-4-3 8zM632 774l-8-3-3 8zM628 835l-10-3 1 7zM751 678l3-9-8 1zM710 687l-8 3 3-11zM672 709l-5-8-7 6zM617 794l-9 0-1 7zM615 810l1 7-9 0zM616 817l0 8-9-1zM705 679l-2-8-8 3zM705 679l-8 4-2-9zM697 683l-7 4-3-9zM622 755l-4 7-5-9zM618 762l-5-9-4 8zM615 770l-6-9-3 7zM608 831l-9-1 1 7zM805 681l-7-3 6-7zM798 678l-7-3 6-7zM760 660l4-8-7-1zM736 662l4-10-8 1zM695 674l-3-8-8 4zM605 851l-10-2 3 7zM684 670l-8 4 0-10zM604 751l-7-6-4 8zM591 835l-10-5 1 7zM604 881l5 5-11 0zM575 843l-10-5 1 8zM739 625l5-9-9 1zM593 716l-4 7-4-10zM553 813l0 8-9-7zM565 729l-4 7-6-8zM788 601l7-8-8-1z"/>
<path fill="#ff52ad" d="M737 797l-8 2 4 6zM742 790l8-6-7-2zM742 790l-8 1 1-9zM734 791l-6-4-5 6zM750 784l4-7-6-3zM750 784l-7-2 5-8zM743 782l-8 0 5-9zM735 782l-7 5-4-7zM740 773l4-8-9 1zM732 776l3-10-8 3zM718 787l-5-6-5 7zM714 794l-2 8-7-6zM713 809l4 6-10 2zM705 811l-9 1 2 7zM705 811l2 6-9 2zM707 817l-9 2 4 6zM758 768l-7-2 4-8zM744 765l4-8-8 0zM735 766l5-9-9 2zM720 774l-4-6-7 6zM720 774l-7 7-4-7zM713 781l-5 7-5-7zM708 788l-3 8-6-7zM705 796l-6-7-3 7zM705 796l-1 7-9 1zM704 803l-9 1 1 8zM704 803l1 8-9 1zM696 796l-1 8-8-3zM695 804l1 8-9-4zM698 819l4 6-9 3zM702 825l5 5-9 3zM762 760l-7-2 6-8zM740 757l-9 2-1-8zM731 759l-8 4-1-8zM716 768l-7 6-2-9zM709 774l-2-9-6 6zM768 753l8-5-6-4zM768 753l-7-3 9-6zM761 750l-7-1 2-9zM754 749l2-9-8 0zM738 749l2-9-8 2zM714 759l2-10-7 4zM714 759l-7 6 2-12zM707 765l-6 6-5-6zM696 778l-4 7-7-5zM692 785l-7-5-3 7zM689 793l-7-6-3 8zM687 816l-8 2 2 7zM693 828l-9 3 4 5zM678 811l-9-3 0 8zM679 818l2 7-10-2zM763 742l-7-2 7-8zM748 740l7-9-8 0zM748 740l-8 0 7-9zM716 749l-1-9-8 5zM696 765l-3-9-6 7zM690 772l-3-9-5 7zM685 780l-3 7-8-2zM679 795l-1 8-8-3zM678 803l-8-3-1 8zM678 803l0 8-9-3zM776 737l-6-3 7-6zM770 734l-7-2 7-7zM755 731l-8 0 8-9zM731 734l-8 3 0-9zM707 745l0-10-8 5zM707 745l-7 5-1-10zM700 750l-1-10-7 6zM700 750l-7 6-1-10zM687 763l-1-11-6 7zM682 770l-2-11-5 7zM674 785l-3 8-7-4zM670 800l-1 8-9-4zM669 808l-9-4 0 8zM671 823l-10-3 2 7zM673 830l-10-3 2 6zM664 789l-7-7-3 8zM665 833l3 6-9 2zM668 839l-9 2 4 6zM783 731l9-5-6-4zM777 728l-7-3 10-6zM770 725l10-6-7-2zM755 722l3-8-8 0zM731 725l3-9-8 2zM723 728l3-10-9 3zM699 740l-5-6-7 6zM692 746l-6 6-5-6zM686 752l-5-6-6 6zM675 766l-5 7-6-6zM670 773l-6-6-4 7zM786 722l4-8-6-3zM766 715l-8-1 4-9zM750 714l-8 0 4-9zM734 716l-8 2 4-10zM717 721l-8 4 5-12zM709 725l5-12-8 4zM675 752l-6 7-4-8zM664 767l-5-9-4 8zM654 790l-2 8-8-1zM652 798l-1 8-8-1zM651 813l-9 0 1 7zM659 841l4 6-11 0zM663 847l-11 0 4 6zM667 852l-11 1 5 5zM673 857l-12 1 5 4zM790 714l8-6-7-3zM762 705l-8 0 1-9zM754 705l1-9-8 0zM670 744l-5 7-7-5zM643 805l-9-5 0 7zM642 813l-8-6-1 8zM642 813l1 7-10-5zM633 815l-9-2 1 8zM635 830l2 7-9-2zM652 860l5 5-12 0zM657 865l-12 0 5 5zM798 708l-7-3 5-8zM785 702l4-8-7-3zM747 696l5-9-8 1zM731 699l5-10-8 2zM731 699l-8 2 5-10zM714 704l5-11-8 3zM699 711l-8 5-3-8zM670 733l-3-9-7 7zM695 703l-1-9-8 5zM644 751l-5 8-3-11zM630 842l3 6-11-2zM674 696l-2-9-8 5zM607 801l0 8-9-1zM636 879l6 4-12 1zM777 671l-7-1 6-8zM644 710l-4-9-6 7zM597 815l1 8-9-2zM630 884l-6 4 5 5zM609 874l-9 1 4 6zM615 716l-4-9-5 7zM597 745l-4 8-5-10zM572 828l-10-4 1 7zM617 700l-1-12-6 7zM800 631l-7-2 4-8z"/>
<path fill="#ff57a8" d="M737 797l-3-6-5 8zM734 791l-5 8-6-6zM729 799l-6-6-2 8zM729 799l4 6-11 2zM728 787l-4-7-6 7zM723 793l-5-6-4 7zM721 801l-9 1 1 7zM722 807l-9 2 4 6zM722 807l6 5-11 3zM754 777l-6-3 3-8zM748 774l-8-1 4-8zM724 780l3-11-7 5zM724 780l-6 7-5-6zM714 794l-6-6-3 8zM712 802l-7-6-1 7zM713 809l-8 2 2 6zM707 817l5 6-10 2zM744 765l-9 1 5-9zM735 766l-8 3 4-10zM727 769l4-10-8 4zM727 769l-4-6-7 5zM709 774l-6 7-2-10zM696 796l-7-3-2 8zM696 812l-9-4 0 8zM702 825l-9 3 5 5zM762 760l6-7-7-3zM755 758l6-8-7-1zM731 759l-1-8-8 4zM723 763l-7 5-2-9zM716 768l-2-9-7 6zM761 750l2-8-7-2zM754 749l-8-1 2-8zM746 748l2-8-8 0zM746 748l-8 1 2-9zM730 751l-8 4 2-10zM722 755l2-10-8 4zM707 765l2-12-7 6zM689 793l-2 8-8-6zM687 808l0 8-8 2zM690 822l-9 3 3 6zM690 822l3 6-9 3zM688 836l6 5-8 5zM770 744l6-7-6-3zM763 742l7-8-7-2zM732 742l-1-8-8 3zM709 753l-7 6-2-9zM682 787l-8-2-3 8zM747 731l8-9-8 0zM687 763l-5 7-2-11zM678 777l-4 8-8-4zM671 793l-1 7-9-3zM669 816l2 7-10-3zM671 823l2 7-10-3zM681 841l-8 4 5 5zM686 846l-8 4 5 4zM660 804l-8-6-1 8zM660 812l-9 1 1 8zM665 833l-9 2 3 6zM673 845l5 5-11 2zM747 722l-8 1 3-9zM739 723l3-9-8 2zM707 735l2-10-7 4zM675 766l-6-7-5 8zM786 722l10-4-6-4zM717 721l5-11-8 3zM709 725l-7 4-4-8zM651 806l0 7-9 0zM790 714l-6-3 7-6zM784 711l7-6-6-3zM644 827l-9 3 2 7zM664 739l-6 7-4-9zM653 753l-4-9-5 7zM648 761l-4-10-5 8zM660 707l-6 6-4-9zM636 733l-4-10-6 7zM728 663l-8 2 4-10zM628 714l-1-11-6 6zM628 714l-6 7-7-5zM622 721l-7-5-5 7zM770 634l1-9-8-1zM636 681l0-11-7 6zM606 714l-5 7-8-5zM571 859l3 6-10-3z"/>
<path fill="#ff5ca3" d="M737 797l5-7-8 1zM743 782l5-8-8-1zM728 787l-5 6-5-6zM723 793l-2 8-9 1zM732 776l-8 4 3-11zM724 780l-4-6-7 7zM718 787l-4 7-6-6zM712 802l1 7-8 2zM712 823l-10 2 5 5zM758 768l4-8-7-2zM751 766l4-8-7-1zM727 769l-7 5-4-6zM703 781l-2-10-5 7zM703 781l-4 8-7-4zM699 789l-3 7-7-3zM696 812l2 7-8 3zM730 751l2-9-8 3zM701 771l-5-6-6 7zM696 778l-6-6-5 8zM693 828l5 5-10 3zM698 833l-10 3 6 5zM684 831l-11-1 4 6zM740 740l7-9-8 1zM732 742l-8 3-1-8zM770 734l7-6-7-3zM693 756l-6 7-1-11zM747 722l3-8-8 0zM715 731l-8 4 2-10zM654 790l-9-1-1 8zM652 798l-8-1-1 8zM645 789l-1 8-8-5zM646 834l3 7-9 2zM639 759l-3-11-5 7zM627 790l-8-4-2 8zM774 680l-8-1 4-9zM627 763l-5-8-4 7zM631 740l-5-10-5 8zM626 747l-5-9-4 7zM608 794l-9-2-1 8zM592 782l-8-6-1 8zM601 862l4 6-9 2zM716 648l-8 2-3-8zM584 751l-3 8-8-5z"/>
<path fill="#ff619e" d="M729 799l-8 2 1 6zM721 801l1 6-9 2zM712 802l-8 1 1 8zM684 831l4 5-7 5zM651 806l-8-1-1 8zM643 805l-1 8-8-6zM647 855l-11 0 4 5zM628 835l2 7-11-3zM645 865l-8 4 5 5zM686 699l-4-8-8 5zM722 674l6-11-8 2zM785 673l-8-2 6-8zM676 664l-3-8-7 4z"/>
<path fill="#ff6699" d="M717 815l-10 2 5 6zM724 745l-1-8-8 3zM722 710l-8 3 0-9zM762 669l-8 0 6-9zM613 879l-9 2 5 5z"/>
<path fill="#ff6b94" d="M644 797l-8-5-2 8zM666 862l-9 3 6 4zM703 699l-1-9-8 4z"/>
<path fill="#ff708f" d="M742 714l-8 2 4-10z"/>
<path fill="#ff758a" d="M730 708l-8 2 1-9zM804 671l-7-3 4-8z"/>
</g></g>
<clipPath id="gc"><path d="M465.2 319.8L465.0 324.3L464.3 328.8L463.2 333.3L461.6 337.8L459.6 342.2L457.2 346.5L454.4 350.8L451.1 354.9L447.4 359.0L443.3 363.0L438.9 366.8L434.0 370.6L428.8 374.2L423.3 377.6L417.4 380.9L411.2 384.0L404.7 387.0L397.9 389.7L390.9 392.3L383.6 394.6L376.1 396.8L368.4 398.8L360.5 400.5L352.4 402.0L344.2 403.3L335.9 404.4L327.5 405.2L319.1 405.8L310.5 406.2L302.0 406.3L293.5 406.2L284.9 405.9L276.5 405.3L268.1 404.5L259.8 403.4L251.6 402.1L243.5 400.6L235.6 398.9L227.9 397.0L220.4 394.8L213.1 392.5L206.1 389.9L199.3 387.2L192.8 384.3L186.6 381.2L180.7 377.9L175.2 374.5L170.0 370.9L165.1 367.2L160.7 363.3L156.6 359.3L152.9 355.3L149.6 351.1L146.8 346.8L144.4 342.5L142.4 338.1L140.8 333.7L139.7 329.2L139.0 324.7L138.8 320.2L139.0 328.5L139.7 337.1L140.8 345.5L142.4 353.9L144.4 362.2L146.8 370.4L149.6 378.5L152.9 386.4L156.6 394.1L160.7 401.6L165.1 408.9L170.0 415.9L175.2 422.7L180.7 429.2L186.6 435.4L192.8 441.3L199.3 446.8L206.1 452.0L213.1 456.9L220.4 461.3L227.9 465.4L235.6 469.1L243.5 472.4L251.6 475.2L259.8 477.6L268.1 479.6L276.5 481.2L284.9 482.3L293.5 483.0L302.0 483.2L310.5 483.0L319.1 482.3L327.5 481.2L335.9 479.6L344.2 477.6L352.4 475.2L360.5 472.4L368.4 469.1L376.1 465.4L383.6 461.3L390.9 456.9L397.9 452.0L404.7 446.8L411.2 441.3L417.4 435.4L423.3 429.2L428.8 422.7L434.0 415.9L438.9 408.9L443.3 401.6L447.4 394.1L451.1 386.4L454.4 378.5L457.2 370.4L459.6 362.2L461.6 353.9L463.2 345.5L464.3 337.1L465.0 328.5Z"/></clipPath>
<g clip-path="url(#gc)">
<path d="M686.3 605.0L736.0 593.2M620.4 605.0L736.0 577.5M554.4 605.0L736.0 561.8M488.4 605.0L736.0 546.1M356.5 605.0L736.0 514.7M8.0 605.0L-5.0 589.6M290.5 605.0L736.0 499.0M37.7 605.0L-5.0 554.6M224.5 605.0L736.0 483.3M67.4 605.0L-5.0 519.5M158.6 605.0L736.0 467.6M97.1 605.0L-5.0 484.4M92.6 605.0L736.0 452.0M126.8 605.0L-5.0 449.4M26.6 605.0L736.0 436.3M156.5 605.0L-5.0 414.3M-5.0 596.8L736.0 420.6M186.2 605.0L-5.0 379.3M-5.0 581.1L736.0 404.9M215.9 605.0L-5.0 344.2M-5.0 565.4L736.0 389.2M275.3 605.0L-5.0 274.1M-5.0 534.1L736.0 357.8M305.1 605.0L-5.0 239.0M-5.0 518.4L736.0 342.1M334.8 605.0L-5.0 204.0M-5.0 502.7L736.0 326.4M364.5 605.0L-5.0 168.9M-5.0 487.0L736.0 310.7M394.2 605.0L-5.0 133.9M-5.0 471.3L736.0 295.0M423.9 605.0L-5.0 98.8M-5.0 455.6L736.0 279.3M453.6 605.0L-5.0 63.8M-5.0 439.9L736.0 263.7M483.3 605.0L-5.0 28.7M-5.0 424.2L736.0 248.0M513.0 605.0L-3.9 -5.0M-5.0 408.5L736.0 232.3M572.4 605.0L55.5 -5.0M-5.0 377.1L736.0 200.9M602.1 605.0L85.2 -5.0M-5.0 361.5L736.0 185.2M631.8 605.0L115.0 -5.0M-5.0 345.8L736.0 169.5M661.5 605.0L144.7 -5.0M-5.0 330.1L736.0 153.8M691.2 605.0L174.4 -5.0M-5.0 314.4L736.0 138.1M720.9 605.0L204.1 -5.0M-5.0 298.7L736.0 122.4M736.0 587.8L233.8 -5.0M-5.0 283.0L736.0 106.7M736.0 552.7L263.5 -5.0M-5.0 267.3L736.0 91.0M736.0 517.7L293.2 -5.0M-5.0 251.6L736.0 75.3M736.0 447.6L352.6 -5.0M-5.0 220.2L736.0 44.0M736.0 412.5L382.3 -5.0M-5.0 204.5L736.0 28.3M736.0 377.5L412.0 -5.0M-5.0 188.8L736.0 12.6M736.0 342.4L441.7 -5.0M-5.0 173.1L736.0 -3.1M736.0 307.3L471.4 -5.0M-5.0 157.5L678.0 -5.0M736.0 272.3L501.1 -5.0M-5.0 141.8L612.0 -5.0M736.0 237.2L530.8 -5.0M-5.0 126.1L546.0 -5.0M736.0 202.2L560.5 -5.0M-5.0 110.4L480.1 -5.0M736.0 167.1L590.2 -5.0M-5.0 94.7L414.1 -5.0M736.0 97.0L649.6 -5.0M-5.0 63.3L282.2 -5.0M736.0 61.9L679.3 -5.0M-5.0 47.6L216.2 -5.0M736.0 26.9L709.0 -5.0M-5.0 31.9L150.2 -5.0M-5.0 16.2L84.2 -5.0M-5.0 0.5L18.3 -5.0" stroke="#c8c8c8" stroke-width="0.85" fill="none"/>
<path d="M422.4 605.0L736.0 530.4M245.6 605.0L-5.0 309.2M-5.0 549.8L736.0 373.5M542.7 605.0L25.8 -5.0M-5.0 392.8L736.0 216.6M736.0 482.6L322.9 -5.0M-5.0 235.9L736.0 59.7M736.0 132.1L619.9 -5.0M-5.0 79.0L348.1 -5.0" stroke="#f0f0f0" stroke-width="1.4" fill="none"/>
</g>
<path d="M465.2 307.7L465.6 309.2L465.9 310.7L466.2 312.2L466.4 313.7L466.6 315.2L466.7 316.8L466.8 318.3L466.8 319.8L466.8 321.3L466.7 322.9L466.6 324.4L466.4 325.9L466.2 327.4L465.9 328.9L465.6 330.4L465.2 331.9L464.8 333.4L464.3 334.9L463.8 336.4L463.2 337.9L462.6 339.4L461.9 340.9L461.2 342.4L460.4 343.8L459.6 345.3L458.8 346.8L457.8 348.2L456.9 349.6L455.9 351.1L454.8 352.5L453.7 353.9L452.6 355.3L451.4 356.7L450.1 358.0L448.9 359.4L447.5 360.8L446.2 362.1L444.7 363.4L443.3 364.7L441.8 366.0L440.2 367.3L438.6 368.6L437.0 369.8L435.3 371.1L433.6 372.3L431.9 373.5L430.1 374.7L428.3 375.9L426.4 377.0L424.5 378.2L422.5 379.3L420.6 380.4L418.5 381.5L416.5 382.6L414.4 383.6L412.3 384.6L410.1 385.7L407.9 386.7L405.7 387.6L403.5 388.6L401.2 389.5L398.9 390.4L396.5 391.3L394.2 392.2L391.8 393.0L389.3 393.8L386.9 394.6L384.4 395.4L381.9 396.1L379.4 396.9L376.8 397.6L374.3 398.3L371.7 398.9" stroke="#ff6a00" stroke-width="1.4" fill="none" clip-path="url(#sc2)"/>
<clipPath id="co"><path clip-rule="evenodd" d="M0 0H731V600H0ZM139.0 320.0a163 163 0 1 0 326 0a163 163 0 1 0 -326 0Z"/></clipPath>
<g clip-path="url(#co)"><line x1="19.3" y1="107.7" x2="409.3" y2="15.0" stroke="#ff66fa" stroke-width="1.2" /><line x1="409.3" y1="15.0" x2="584.3" y2="220.9" stroke="#ff66fa" stroke-width="1.2" /><line x1="584.3" y1="220.9" x2="193.4" y2="312.8" stroke="#ff66fa" stroke-width="1.2" /><line x1="193.4" y1="312.8" x2="19.3" y2="107.7" stroke="#ff66fa" stroke-width="1.2" /><line x1="19.3" y1="107.7" x2="19.3" y2="411.0" stroke="#ff66fa" stroke-width="1.2" /><line x1="584.3" y1="220.9" x2="584.3" y2="524.2" stroke="#ff66fa" stroke-width="1.2" /><line x1="193.4" y1="312.8" x2="193.4" y2="616.1" stroke="#ff66fa" stroke-width="1.2" /><line x1="19.3" y1="411.0" x2="193.4" y2="616.1" stroke="#ff66fa" stroke-width="1.2" /><line x1="193.4" y1="616.1" x2="584.3" y2="524.2" stroke="#ff66fa" stroke-width="1.2" /><path d="M33.5 119.0L404.2 31.0L570.6 226.7L198.5 315.0Z" stroke="#8a10c8" stroke-width="1.6" fill="none" stroke-linejoin="miter"/><line x1="218.8" y1="75.0" x2="384.6" y2="270.9" stroke="#9a30d0" stroke-width="1" /><line x1="116.0" y1="217.0" x2="487.4" y2="128.8" stroke="#9a30d0" stroke-width="1" /></g>
<g clip-path="url(#sc)"><line x1="19.3" y1="107.7" x2="409.3" y2="15.0" stroke="#d455ee" stroke-width="0.9" /><line x1="409.3" y1="15.0" x2="584.3" y2="220.9" stroke="#d455ee" stroke-width="0.9" /><line x1="584.3" y1="220.9" x2="193.4" y2="312.8" stroke="#d455ee" stroke-width="0.9" /><line x1="193.4" y1="312.8" x2="19.3" y2="107.7" stroke="#d455ee" stroke-width="0.9" /><line x1="19.3" y1="107.7" x2="19.3" y2="411.0" stroke="#d455ee" stroke-width="0.9" /><line x1="584.3" y1="220.9" x2="584.3" y2="524.2" stroke="#d455ee" stroke-width="0.9" /><line x1="193.4" y1="312.8" x2="193.4" y2="616.1" stroke="#d455ee" stroke-width="0.9" /><line x1="19.3" y1="411.0" x2="193.4" y2="616.1" stroke="#d455ee" stroke-width="0.9" /><line x1="193.4" y1="616.1" x2="584.3" y2="524.2" stroke="#d455ee" stroke-width="0.9" /><path d="M33.5 119.0L404.2 31.0L570.6 226.7L198.5 315.0Z" stroke="#9648c8" stroke-width="1.1" fill="none" stroke-linejoin="miter"/><line x1="218.8" y1="75.0" x2="384.6" y2="270.9" stroke="#a045c8" stroke-width="0.9" /><line x1="116.0" y1="217.0" x2="487.4" y2="128.8" stroke="#a045c8" stroke-width="0.9" /></g>
<g>
<line x1="105.5" y1="209.5" x2="119.5" y2="194.5" stroke="#2a00e6" stroke-width="1.7"/>
<path d="M127.6 184.8L116.3 193.6L119.2 196.4Z" fill="#3000c8"/><path d="M127.6 184.8L119.2 196.4L121.8 198.9Z" fill="#c850ff"/>
<line x1="105.5" y1="209.5" x2="119" y2="215" stroke="#e838b0" stroke-width="1.6"/>
<path d="M117.3 213.6L121.6 213.2L128.2 225.6L122.6 223.6Z" fill="#a4206e"/><path d="M117.3 213.6L118.8 213.3L124.5 224.3L122.6 223.6Z" fill="#f048c4"/>
<path d="M104.6 209.6L108 209.8L113.5 217.2L110.4 218Z" fill="#1f8a6a"/>
<path d="M109.8 217.6L116.6 216L119.6 226.2L112 221.6Z" fill="#22d6b6"/><path d="M109.8 217.6L111.4 217.2L115.5 223.6L112 221.6Z" fill="#18a484"/>
</g>
<filter id="f0" x="-0.05" y="-0.05" width="1.1" height="1.1" color-interpolation-filters="sRGB"><feOffset dx="0" dy="0"/></filter><g filter="url(#f0)">
<rect x="601.5" y="47.5" width="114.6" height="278" fill="#f4f4f4" stroke="#3c3c3c" stroke-width="1.4"/>
<line x1="601.5" y1="68.4" x2="716.1" y2="68.4" stroke="#3c3c3c" stroke-width="1.3"/>
<line x1="601.5" y1="89.3" x2="716.1" y2="89.3" stroke="#3c3c3c" stroke-width="1.3"/>
<line x1="601.5" y1="249" x2="716.1" y2="249" stroke="#3c3c3c" stroke-width="1.3"/>
<text x="613.5" y="61">MsMagZ</text><text x="613.5" y="82.4" letter-spacing="0.12">Type: Linear</text>
<defs><linearGradient id="cb" x1="0" y1="1" x2="0" y2="0">
<stop offset="0.00" stop-color="#000000"/>
<stop offset="0.04" stop-color="#000029"/>
<stop offset="0.08" stop-color="#000052"/>
<stop offset="0.12" stop-color="#00007a"/>
<stop offset="0.16" stop-color="#0000a3"/>
<stop offset="0.20" stop-color="#0000cc"/>
<stop offset="0.24" stop-color="#0000f5"/>
<stop offset="0.28" stop-color="#1800ff"/>
<stop offset="0.32" stop-color="#3800ff"/>
<stop offset="0.36" stop-color="#5800ff"/>
<stop offset="0.40" stop-color="#7800ff"/>
<stop offset="0.44" stop-color="#970af5"/>
<stop offset="0.48" stop-color="#b71fe0"/>
<stop offset="0.52" stop-color="#d733cc"/>
<stop offset="0.56" stop-color="#f747b8"/>
<stop offset="0.60" stop-color="#ff5ca3"/>
<stop offset="0.64" stop-color="#ff708f"/>
<stop offset="0.68" stop-color="#ff857a"/>
<stop offset="0.72" stop-color="#ff9966"/>
<stop offset="0.76" stop-color="#ffad52"/>
<stop offset="0.80" stop-color="#ffc23d"/>
<stop offset="0.84" stop-color="#ffd629"/>
<stop offset="0.88" stop-color="#ffeb14"/>
<stop offset="0.92" stop-color="#ffff00"/>
<stop offset="0.96" stop-color="#ffff80"/>
<stop offset="1.00" stop-color="#ffffff"/>
</linearGradient></defs>
<rect x="613.3" y="98" width="16.8" height="138.7" fill="url(#cb)"/>
<text x="640" y="103.8">1.18</text>
<text x="640" y="117.6">1.07</text>
<text x="640" y="131.4">0.948</text>
<text x="640" y="145.2">0.829</text>
<text x="640" y="159.0">0.711</text>
<text x="640" y="172.8">0.592</text>
<text x="640" y="186.6">0.474</text>
<text x="640" y="200.4">0.355</text>
<text x="640" y="214.2">0.237</text>
<text x="640" y="228.0">0.118</text>
<text x="640" y="241.8">0</text>
<text x="613.3" y="263">Max: 0.784</text>
<text x="613.3" y="276.8">Min: 0</text>
<text x="613.3" y="290.5">Units: V/m</text>
<text x="613.3" y="304.3">Mean: 0.183</text>
<text x="613.3" y="318.4">STD: 0.231</text>
</g>
</svg></body></html>
